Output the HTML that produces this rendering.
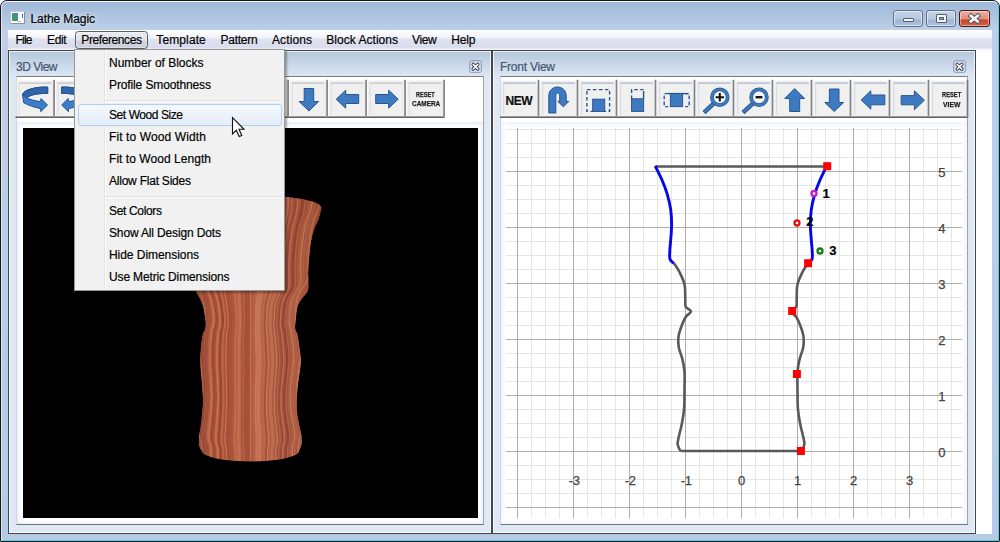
<!DOCTYPE html><html><head><meta charset="utf-8"><title>Lathe Magic</title><style>
*{box-sizing:border-box;margin:0;padding:0}
html,body{width:1000px;height:542px;overflow:hidden;background:#fff;font-family:"Liberation Sans",sans-serif;}
.abs{position:absolute}
.t{position:absolute;white-space:nowrap;line-height:16px;height:16px;-webkit-text-stroke:0.18px currentColor}
#win{position:absolute;left:0;top:0;width:1000px;height:542px;border:1px solid #161616;border-radius:7px 7px 1px 1px;
 background:linear-gradient(180deg,#9db7d7 0px,#abc2de 12px,#bdd0e7 30px,#b9cde6 300px,#b5cbe5 542px);overflow:hidden}
#win:before{content:"";position:absolute;left:0;top:0;right:0;bottom:0;border:1px solid #46d6ee;border-top-color:#f4f8fc;border-left-color:#dfeaf6;border-radius:6px 6px 0 0}
#client{position:absolute;left:8px;top:30px;width:984px;height:504px;background:#fff}
#menubar{position:absolute;left:8px;top:30px;width:984px;height:20px;background:linear-gradient(180deg,#ffffff 0,#fbfbfe 3px,#eff1f8 8px,#e0e3f0 9px,#d8dcec 17px,#e8eaf3 18.5px,#f6f6fa 20px)}
.panel{position:absolute;top:50px;height:484px;border:1px solid #454545;background:#dfe8f5}
.panel:after{content:"";position:absolute;left:0;top:0;right:0;bottom:0;box-shadow:inset 0 0 0 1px rgba(255,255,255,.75)}
.panel .title{position:absolute;left:0;top:0;right:0;height:26px;background:linear-gradient(180deg,#b3c6db 0,#c4d4e6 10px,#dbe6f3 25px)}
.inner{position:absolute;background:#fff;border-top:1px solid #7e7e7e;border-right:1px solid #a4a4a4;border-bottom:1px solid #727272;border-left:1px solid #d0d6e0}
.btn{position:absolute;top:81px;width:38px;height:37px;background:#f0f0f0;border-right:2px solid #6c6c6c;border-bottom:2px solid #6c6c6c;}
.btn:before{content:"";position:absolute;left:2px;top:2px;right:1px;bottom:1px;border-top:1px solid #a9b6cf;border-left:1px solid #a9b6cf;}
.btn svg{position:absolute;left:0;top:0}
.pclose{position:absolute;width:12px;height:12px;border:1px solid #7f8fae;border-radius:2px;background:#e9eef6}
#menu{position:absolute;left:74px;top:49px;width:211px;height:242px;background:#f1f1f1;border:1px solid #979797;box-shadow:2px 2px 2px rgba(0,0,0,0.32)}
#menu .gut{position:absolute;left:29px;top:2px;bottom:2px;width:2px;border-left:1px solid #e2e3e3;border-right:1px solid #fff}
#menu .sep{position:absolute;left:30px;right:2px;height:2px;border-top:1px solid #e0e0e0;border-bottom:1px solid #fff}
#menu .hl{position:absolute;left:3px;top:54px;width:204px;height:22px;border:1px solid #aecff7;border-radius:3px;background:linear-gradient(180deg,#f4f8fc,#e4edf8)}
</style></head><body><div id="win"></div><div class="abs" style="left:10px;top:11px;width:15px;height:13px;background:#fdfdfd;border:1px solid #8d9096;border-top-color:#c8ccd2;border-left-color:#c0c4ca;border-radius:1px"></div><div class="abs" style="left:12px;top:13px;width:6px;height:8px;background:linear-gradient(180deg,#4a8a96,#3a9c68)"></div><div class="abs" style="left:18px;top:21px;width:3px;height:1px;background:#b0b4b8"></div><div class="abs" style="left:22px;top:14px;width:1px;height:4px;background:#2d68c4"></div><span class="t" style="left:30.5px;top:10.84px;font-size:12px;font-weight:400;color:#000;letter-spacing:-0.087px;text-shadow:0 0 5px rgba(255,255,255,.75),0 0 9px rgba(255,255,255,.5)">Lathe Magic</span><div class="abs" style="left:893px;top:10px;width:30px;height:17px;border:1px solid #5e708c;border-radius:3px;background:linear-gradient(180deg,#c5d5e8 0,#b7c9e0 8px,#9db4d2 9px,#b0c6e0 16px);box-shadow:inset 0 0 0 1px rgba(255,255,255,.55)"></div><div class="abs" style="left:903px;top:18px;width:11px;height:4px;background:#f4f4f4;border:1px solid #55606e;border-radius:1px"></div><div class="abs" style="left:926px;top:10px;width:30px;height:17px;border:1px solid #5e708c;border-radius:3px;background:linear-gradient(180deg,#c5d5e8 0,#b7c9e0 8px,#9db4d2 9px,#b0c6e0 16px);box-shadow:inset 0 0 0 1px rgba(255,255,255,.55)"></div><div class="abs" style="left:936px;top:14px;width:11px;height:9px;background:#f4f4f4;border:1px solid #55606e;border-radius:1px"></div><div class="abs" style="left:939px;top:17px;width:5px;height:3px;background:#8ea4c2;border:1px solid #55606e"></div><div class="abs" style="left:959px;top:10px;width:31px;height:17px;border:1px solid #4a1616;border-radius:3px;background:linear-gradient(180deg,#eab0a0 0,#dd8f7c 8px,#c9432a 9px,#d86a4a 16px);box-shadow:inset 0 0 0 1px rgba(255,255,255,.45)"></div><svg class="abs" style="left:959px;top:10px" width="31" height="17"><path d="M11.8 5.8 L18.8 11.4 M18.8 5.8 L11.8 11.4" stroke="#4a5068" stroke-width="4.4" stroke-linecap="square"/><path d="M11.8 5.8 L18.8 11.4 M18.8 5.8 L11.8 11.4" stroke="#fafafa" stroke-width="2.6" stroke-linecap="square"/></svg><div id="client"></div><div id="menubar"></div><div class="abs" style="left:75px;top:31px;width:73px;height:18px;border:1px solid #5c5c60;border-radius:3.5px;background:linear-gradient(180deg,#ebecf2 0,#dfe1ea 8px,#d2d5e1 9px,#cacddb 17px);box-shadow:inset 0 0 0 1px rgba(255,255,255,.35)"></div><span class="t" style="left:15.5px;top:31.84px;font-size:12px;font-weight:400;color:#000;letter-spacing:-0.781px;">File</span><span class="t" style="left:47px;top:31.84px;font-size:12px;font-weight:400;color:#000;letter-spacing:-0.329px;">Edit</span><span class="t" style="left:81.3px;top:31.84px;font-size:12px;font-weight:400;color:#000;letter-spacing:-0.400px;">Preferences</span><span class="t" style="left:156.3px;top:31.84px;font-size:12px;font-weight:400;color:#000;letter-spacing:0.114px;">Template</span><span class="t" style="left:220.6px;top:31.84px;font-size:12px;font-weight:400;color:#000;letter-spacing:-0.284px;">Pattern</span><span class="t" style="left:272px;top:31.84px;font-size:12px;font-weight:400;color:#000;letter-spacing:0.107px;">Actions</span><span class="t" style="left:326.25px;top:31.84px;font-size:12px;font-weight:400;color:#000;letter-spacing:0.031px;">Block Actions</span><span class="t" style="left:412px;top:31.84px;font-size:12px;font-weight:400;color:#000;letter-spacing:-0.349px;">View</span><span class="t" style="left:451.25px;top:31.84px;font-size:12px;font-weight:400;color:#000;letter-spacing:-0.146px;">Help</span><div class="panel" style="left:8px;width:484px"><div class="title"></div></div><span class="t" style="left:16px;top:58.84px;font-size:12px;font-weight:400;color:#44546f;letter-spacing:-0.495px;">3D View</span><div class="panel" style="left:492px;width:484px"><div class="title"></div></div><span class="t" style="left:500px;top:58.84px;font-size:12px;font-weight:400;color:#44546f;letter-spacing:-0.238px;">Front View</span><div class="inner" style="left:16px;top:76px;width:468px;height:449px"></div><div class="inner" style="left:500px;top:76px;width:468px;height:449px"></div><svg class="abs" style="left:468px;top:59px" width="15" height="15" viewBox="-1 -1 15 15"><rect x="0.7" y="0.7" width="11.6" height="11.6" rx="1.6" fill="rgba(255,255,255,.18)" stroke="#8a94b8" stroke-width="1"/><path d="M4.2 4.4 L8.8 9 M8.8 4.4 L4.2 9" stroke="#2e3446" stroke-width="3.4" stroke-linecap="round"/><path d="M4.2 4.4 L8.8 9 M8.8 4.4 L4.2 9" stroke="#fff" stroke-width="1.6" stroke-linecap="round"/></svg><svg class="abs" style="left:952px;top:59px" width="15" height="15" viewBox="-1 -1 15 15"><rect x="0.7" y="0.7" width="11.6" height="11.6" rx="1.6" fill="rgba(255,255,255,.18)" stroke="#8a94b8" stroke-width="1"/><path d="M4.2 4.4 L8.8 9 M8.8 4.4 L4.2 9" stroke="#2e3446" stroke-width="3.4" stroke-linecap="round"/><path d="M4.2 4.4 L8.8 9 M8.8 4.4 L4.2 9" stroke="#fff" stroke-width="1.6" stroke-linecap="round"/></svg><svg class="abs" style="left:15px;top:78px" width="434" height="42" viewBox="15 78 434 42"><rect x="16.7" y="80.6" width="36.4" height="36" fill="#f0f0f0"/><rect x="52.900000000000006" y="79.8" width="1" height="38" fill="#b0b0b0"/><rect x="53.7" y="79.8" width="1.1" height="38" fill="#6a6a6a"/><rect x="18.7" y="82.6" width="32.5" height="1" fill="#b6b6ba"/><rect x="18.7" y="83.4" width="1" height="31" fill="#dedee2"/><g transform="translate(16.7,81)"><path d="M31 6.1 C20 5.6 7 8.5 5.8 13.7 L7 21.8 C12 24.5 18 26.5 24 27.6 L24 30.7 L30.8 24.1 L24.4 17.5 L23.7 20.6 C18 19.8 13 18.5 10.1 16.8 C14 13.5 22 12.2 31 12.5 Z" fill="#3c7ec9" stroke="#28568f" stroke-width="1" stroke-linejoin="round"/><path d="M31 6.1 C20 5.6 7 8.5 5.8 13.7 L10.1 16.8 C14 13.5 22 12.2 31 12.5 Z" fill="#2d66aa" stroke="#28568f" stroke-width="1" stroke-linejoin="round"/></g><rect x="55.7" y="80.6" width="36.4" height="36" fill="#f0f0f0"/><rect x="91.9" y="79.8" width="1" height="38" fill="#b0b0b0"/><rect x="92.7" y="79.8" width="1.1" height="38" fill="#6a6a6a"/><rect x="57.7" y="82.6" width="32.5" height="1" fill="#b6b6ba"/><rect x="57.7" y="83.4" width="1" height="31" fill="#dedee2"/><g transform="translate(55.7,81)"><g transform="translate(36.8,0) scale(-1,1)"><path d="M31 6.1 C20 5.6 7 8.5 5.8 13.7 L7 21.8 C12 24.5 18 26.5 24 27.6 L24 30.7 L30.8 24.1 L24.4 17.5 L23.7 20.6 C18 19.8 13 18.5 10.1 16.8 C14 13.5 22 12.2 31 12.5 Z" fill="#3c7ec9" stroke="#28568f" stroke-width="1" stroke-linejoin="round"/><path d="M31 6.1 C20 5.6 7 8.5 5.8 13.7 L10.1 16.8 C14 13.5 22 12.2 31 12.5 Z" fill="#2d66aa" stroke="#28568f" stroke-width="1" stroke-linejoin="round"/></g></g><rect x="94.7" y="80.6" width="36.4" height="36" fill="#f0f0f0"/><rect x="130.9" y="79.8" width="1" height="38" fill="#b0b0b0"/><rect x="131.7" y="79.8" width="1.1" height="38" fill="#6a6a6a"/><rect x="96.7" y="82.6" width="32.5" height="1" fill="#b6b6ba"/><rect x="96.7" y="83.4" width="1" height="31" fill="#dedee2"/><g transform="translate(94.7,81)"></g><rect x="133.7" y="80.6" width="36.4" height="36" fill="#f0f0f0"/><rect x="169.89999999999998" y="79.8" width="1" height="38" fill="#b0b0b0"/><rect x="170.7" y="79.8" width="1.1" height="38" fill="#6a6a6a"/><rect x="135.7" y="82.6" width="32.5" height="1" fill="#b6b6ba"/><rect x="135.7" y="83.4" width="1" height="31" fill="#dedee2"/><g transform="translate(133.7,81)"></g><rect x="172.7" y="80.6" width="36.4" height="36" fill="#f0f0f0"/><rect x="208.89999999999998" y="79.8" width="1" height="38" fill="#b0b0b0"/><rect x="209.7" y="79.8" width="1.1" height="38" fill="#6a6a6a"/><rect x="174.7" y="82.6" width="32.5" height="1" fill="#b6b6ba"/><rect x="174.7" y="83.4" width="1" height="31" fill="#dedee2"/><g transform="translate(172.7,81)"></g><rect x="211.7" y="80.6" width="36.4" height="36" fill="#f0f0f0"/><rect x="247.89999999999998" y="79.8" width="1" height="38" fill="#b0b0b0"/><rect x="248.7" y="79.8" width="1.1" height="38" fill="#6a6a6a"/><rect x="213.7" y="82.6" width="32.5" height="1" fill="#b6b6ba"/><rect x="213.7" y="83.4" width="1" height="31" fill="#dedee2"/><g transform="translate(211.7,81)"></g><rect x="250.7" y="80.6" width="36.4" height="36" fill="#f0f0f0"/><rect x="286.9" y="79.8" width="1" height="38" fill="#b0b0b0"/><rect x="287.7" y="79.8" width="1.1" height="38" fill="#6a6a6a"/><rect x="252.7" y="82.6" width="32.5" height="1" fill="#b6b6ba"/><rect x="252.7" y="83.4" width="1" height="31" fill="#dedee2"/><g transform="translate(250.7,81)"></g><rect x="289.7" y="80.6" width="36.4" height="36" fill="#f0f0f0"/><rect x="325.9" y="79.8" width="1" height="38" fill="#b0b0b0"/><rect x="326.7" y="79.8" width="1.1" height="38" fill="#6a6a6a"/><rect x="291.7" y="82.6" width="32.5" height="1" fill="#b6b6ba"/><rect x="291.7" y="83.4" width="1" height="31" fill="#dedee2"/><g transform="translate(289.7,81)"><path d="M14.5 7.5 H24 V20.5 H29 L19.2 30 L9.4 20.5 H14.5 Z" fill="#3d7ac1" stroke="#28568f" stroke-width="1" stroke-linejoin="miter"/></g><rect x="328.7" y="80.6" width="36.4" height="36" fill="#f0f0f0"/><rect x="364.9" y="79.8" width="1" height="38" fill="#b0b0b0"/><rect x="365.7" y="79.8" width="1.1" height="38" fill="#6a6a6a"/><rect x="330.7" y="82.6" width="32.5" height="1" fill="#b6b6ba"/><rect x="330.7" y="83.4" width="1" height="31" fill="#dedee2"/><g transform="translate(328.7,81)"><path d="M30 13.5 V22.5 H17 V27.2 L7.5 18.2 L17 9.2 V13.5 Z" fill="#3d7ac1" stroke="#28568f" stroke-width="1" stroke-linejoin="miter"/></g><rect x="367.7" y="80.6" width="36.4" height="36" fill="#f0f0f0"/><rect x="403.9" y="79.8" width="1" height="38" fill="#b0b0b0"/><rect x="404.7" y="79.8" width="1.1" height="38" fill="#6a6a6a"/><rect x="369.7" y="82.6" width="32.5" height="1" fill="#b6b6ba"/><rect x="369.7" y="83.4" width="1" height="31" fill="#dedee2"/><g transform="translate(367.7,81)"><path d="M8 13.5 V22.5 H21 V27.2 L30.5 18.2 L21 9.2 V13.5 Z" fill="#3d7ac1" stroke="#28568f" stroke-width="1" stroke-linejoin="miter"/></g><rect x="406.7" y="80.6" width="36.4" height="36" fill="#f0f0f0"/><rect x="442.9" y="79.8" width="1" height="38" fill="#b0b0b0"/><rect x="443.7" y="79.8" width="1.1" height="38" fill="#6a6a6a"/><rect x="408.7" y="82.6" width="32.5" height="1" fill="#b6b6ba"/><rect x="408.7" y="83.4" width="1" height="31" fill="#dedee2"/><g transform="translate(406.7,81)"></g><rect x="15.5" y="116" width="428.4" height="1" fill="#a4a4a4"/><rect x="15.5" y="116.9" width="428.4" height="1.1" fill="#626262"/></svg><span class="t" style="left:416.3px;top:86.97px;font-size:7.6px;font-weight:700;color:#1c1c1c;transform:scaleX(0.7344);transform-origin:0 0;-webkit-text-stroke:0.25px #1c1c1c">RESET</span><span class="t" style="left:411.7px;top:96.37px;font-size:7.6px;font-weight:700;color:#1c1c1c;transform:scaleX(0.8461);transform-origin:0 0;-webkit-text-stroke:0.25px #1c1c1c">CAMERA</span><svg class="abs" style="left:500px;top:78px" width="472" height="42" viewBox="500 78 472 42"><rect x="501.2" y="80.6" width="36.4" height="36" fill="#f0f0f0"/><rect x="537.4" y="79.8" width="1" height="38" fill="#b0b0b0"/><rect x="538.2" y="79.8" width="1.1" height="38" fill="#6a6a6a"/><rect x="503.2" y="82.6" width="32.5" height="1" fill="#9ba7c7"/><rect x="503.2" y="83.4" width="1" height="31" fill="#d4d8e4"/><g transform="translate(501.2,81)"></g><rect x="540.2" y="80.6" width="36.4" height="36" fill="#f0f0f0"/><rect x="576.4000000000001" y="79.8" width="1" height="38" fill="#b0b0b0"/><rect x="577.2" y="79.8" width="1.1" height="38" fill="#6a6a6a"/><rect x="542.2" y="82.6" width="32.5" height="1" fill="#9ba7c7"/><rect x="542.2" y="83.4" width="1" height="31" fill="#d4d8e4"/><g transform="translate(540.2,81)"><path d="M8.6 32 V15 C8.6 3 26 3 26 15 V20.4 H28.6 L23.2 25.8 L17.6 20.4 H19.5 V15 C19.5 11 15.6 11 15.6 15 V32 Z" fill="#3d7ac1" stroke="#28568f" stroke-width="1" stroke-linejoin="miter"/></g><rect x="579.2" y="80.6" width="36.4" height="36" fill="#f0f0f0"/><rect x="615.4000000000001" y="79.8" width="1" height="38" fill="#b0b0b0"/><rect x="616.2" y="79.8" width="1.1" height="38" fill="#6a6a6a"/><rect x="581.2" y="82.6" width="32.5" height="1" fill="#9ba7c7"/><rect x="581.2" y="83.4" width="1" height="31" fill="#d4d8e4"/><g transform="translate(579.2,81)"><path d="M7.7 8.6 H30.4 V30.4 H7.7 Z" fill="none" stroke="#28568f" stroke-width="1.4" stroke-dasharray="3.6 2.4"/><rect x="13.5" y="18.2" width="12" height="12.2" fill="#3d7ac1" stroke="#28568f"/></g><rect x="618.2" y="80.6" width="36.4" height="36" fill="#f0f0f0"/><rect x="654.4000000000001" y="79.8" width="1" height="38" fill="#b0b0b0"/><rect x="655.2" y="79.8" width="1.1" height="38" fill="#6a6a6a"/><rect x="620.2" y="82.6" width="32.5" height="1" fill="#9ba7c7"/><rect x="620.2" y="83.4" width="1" height="31" fill="#d4d8e4"/><g transform="translate(618.2,81)"><path d="M13.4 18 V8.6 H25.4" fill="none" stroke="#28568f" stroke-width="1.4" stroke-dasharray="3.6 2.4"/><path d="M25.4 10 V18" fill="none" stroke="#28568f" stroke-width="1.4"/><rect x="13.4" y="17.8" width="12" height="12.6" fill="#3d7ac1" stroke="#28568f"/></g><rect x="657.2" y="80.6" width="36.4" height="36" fill="#f0f0f0"/><rect x="693.4000000000001" y="79.8" width="1" height="38" fill="#b0b0b0"/><rect x="694.2" y="79.8" width="1.1" height="38" fill="#6a6a6a"/><rect x="659.2" y="82.6" width="32.5" height="1" fill="#9ba7c7"/><rect x="659.2" y="83.4" width="1" height="31" fill="#d4d8e4"/><g transform="translate(657.2,81)"><path d="M11 12.6 H7 V25.6 H11 M28 12.6 H32 V25.6 H28" fill="none" stroke="#28568f" stroke-width="1.4" stroke-dasharray="3.6 2.4"/><path d="M10.8 12.6 H30.6" fill="none" stroke="#28568f" stroke-width="1.4"/><rect x="13.2" y="12.6" width="12.2" height="13" fill="#3d7ac1" stroke="#28568f"/></g><rect x="696.2" y="80.6" width="36.4" height="36" fill="#f0f0f0"/><rect x="732.4000000000001" y="79.8" width="1" height="38" fill="#b0b0b0"/><rect x="733.2" y="79.8" width="1.1" height="38" fill="#6a6a6a"/><rect x="698.2" y="82.6" width="32.5" height="1" fill="#9ba7c7"/><rect x="698.2" y="83.4" width="1" height="31" fill="#d4d8e4"/><g transform="translate(696.2,81)"><path d="M18.400000000000002 21.6 L7.8 31.6" stroke="#28568f" stroke-width="4.4"/><path d="M18.400000000000002 21.6 L8.3 31.1" stroke="#3d7ac1" stroke-width="2.6"/><circle cx="23.6" cy="16.2" r="7.85" fill="#f3f5f9" stroke="#28568f" stroke-width="3.8"/><circle cx="23.6" cy="16.2" r="7.85" fill="none" stroke="#3d7ac1" stroke-width="2.4"/><path d="M19.400000000000002 16.2 H27.8 M23.6 12.0 V20.4" stroke="#111" stroke-width="2"/></g><rect x="735.2" y="80.6" width="36.4" height="36" fill="#f0f0f0"/><rect x="771.4000000000001" y="79.8" width="1" height="38" fill="#b0b0b0"/><rect x="772.2" y="79.8" width="1.1" height="38" fill="#6a6a6a"/><rect x="737.2" y="82.6" width="32.5" height="1" fill="#9ba7c7"/><rect x="737.2" y="83.4" width="1" height="31" fill="#d4d8e4"/><g transform="translate(735.2,81)"><path d="M18.6 21.6 L7.8 31.6" stroke="#28568f" stroke-width="4.4"/><path d="M18.6 21.6 L8.3 31.1" stroke="#3d7ac1" stroke-width="2.6"/><circle cx="23.8" cy="16.2" r="7.85" fill="#f3f5f9" stroke="#28568f" stroke-width="3.8"/><circle cx="23.8" cy="16.2" r="7.85" fill="none" stroke="#3d7ac1" stroke-width="2.4"/><path d="M20.400000000000002 16.2 H27.2" stroke="#111" stroke-width="2.4"/></g><rect x="774.2" y="80.6" width="36.4" height="36" fill="#f0f0f0"/><rect x="810.4000000000001" y="79.8" width="1" height="38" fill="#b0b0b0"/><rect x="811.2" y="79.8" width="1.1" height="38" fill="#6a6a6a"/><rect x="776.2" y="82.6" width="32.5" height="1" fill="#9ba7c7"/><rect x="776.2" y="83.4" width="1" height="31" fill="#d4d8e4"/><g transform="translate(774.2,81)"><path d="M15.5 30.5 V17.5 H10.6 L20.5 7.6 L30.4 17.5 H25.5 V30.5 Z" fill="#3d7ac1" stroke="#28568f" stroke-width="1" stroke-linejoin="miter"/></g><rect x="813.2" y="80.6" width="36.4" height="36" fill="#f0f0f0"/><rect x="849.4000000000001" y="79.8" width="1" height="38" fill="#b0b0b0"/><rect x="850.2" y="79.8" width="1.1" height="38" fill="#6a6a6a"/><rect x="815.2" y="82.6" width="32.5" height="1" fill="#9ba7c7"/><rect x="815.2" y="83.4" width="1" height="31" fill="#d4d8e4"/><g transform="translate(813.2,81)"><path d="M16.2 8 H25.8 V21.5 H30.4 L21 30.5 L11.6 21.5 H16.2 Z" fill="#3d7ac1" stroke="#28568f" stroke-width="1" stroke-linejoin="miter"/></g><rect x="852.2" y="80.6" width="36.4" height="36" fill="#f0f0f0"/><rect x="888.4000000000001" y="79.8" width="1" height="38" fill="#b0b0b0"/><rect x="889.2" y="79.8" width="1.1" height="38" fill="#6a6a6a"/><rect x="854.2" y="82.6" width="32.5" height="1" fill="#9ba7c7"/><rect x="854.2" y="83.4" width="1" height="31" fill="#d4d8e4"/><g transform="translate(852.2,81)"><path d="M32.6 14 V23.8 H18.6 V28.2 L9 19 L18.6 9.8 V14 Z" fill="#3d7ac1" stroke="#28568f" stroke-width="1" stroke-linejoin="miter"/></g><rect x="891.2" y="80.6" width="36.4" height="36" fill="#f0f0f0"/><rect x="927.4000000000001" y="79.8" width="1" height="38" fill="#b0b0b0"/><rect x="928.2" y="79.8" width="1.1" height="38" fill="#6a6a6a"/><rect x="893.2" y="82.6" width="32.5" height="1" fill="#9ba7c7"/><rect x="893.2" y="83.4" width="1" height="31" fill="#d4d8e4"/><g transform="translate(891.2,81)"><path d="M10 14.6 V23.8 H23.2 V28.8 L33.2 19.2 L23.2 9.8 V14.6 Z" fill="#3d7ac1" stroke="#28568f" stroke-width="1" stroke-linejoin="miter"/></g><rect x="930.2" y="80.6" width="36.4" height="36" fill="#f0f0f0"/><rect x="966.4000000000001" y="79.8" width="1" height="38" fill="#b0b0b0"/><rect x="967.2" y="79.8" width="1.1" height="38" fill="#6a6a6a"/><rect x="932.2" y="82.6" width="32.5" height="1" fill="#9ba7c7"/><rect x="932.2" y="83.4" width="1" height="31" fill="#d4d8e4"/><g transform="translate(930.2,81)"></g><rect x="500.0" y="116" width="467.4" height="1" fill="#a4a4a4"/><rect x="500.0" y="116.9" width="467.4" height="1.1" fill="#626262"/></svg><span class="t" style="left:505.5px;top:92.84px;font-size:12px;font-weight:700;color:#111;letter-spacing:-0.500px;">NEW</span><span class="t" style="left:941.8px;top:87.37px;font-size:7.6px;font-weight:700;color:#1c1c1c;transform:scaleX(0.7581);transform-origin:0 0;-webkit-text-stroke:0.25px #1c1c1c">RESET</span><span class="t" style="left:943px;top:96.87px;font-size:7.6px;font-weight:700;color:#1c1c1c;transform:scaleX(0.8907);transform-origin:0 0;-webkit-text-stroke:0.25px #1c1c1c">VIEW</span><div class="abs" style="left:17px;top:122px;width:466px;height:402px;background:#fff;box-shadow:inset 0 0 5px 1px #e6edf8, inset 0 2px 3px #e9eff9"></div><div class="abs" style="left:23px;top:128px;width:455px;height:390px;background:#000"></div><svg class="abs" style="left:23px;top:128px" width="455" height="390" viewBox="23 128 455 390"><defs><clipPath id="vc"><path d="M179.5 208 A71.1 13 0 0 1 321.7 208 L321.7 208.0 C321.3 209.7 320.3 214.9 319.1 218.4 C317.9 221.9 315.7 224.9 314.4 228.8 C313.1 232.7 312.1 237.0 311.3 241.7 C310.5 246.4 309.8 252.0 309.3 257.2 C308.8 262.4 308.3 268.0 308.2 272.7 C308.1 277.4 308.9 282.4 308.8 285.6 C308.7 288.8 308.6 289.9 307.5 292.0 C306.4 294.1 303.9 296.1 302.3 298.5 C300.7 300.9 298.9 303.2 297.9 306.3 C296.9 309.4 296.6 313.4 296.2 317.0 C295.8 320.6 295.0 325.0 295.2 328.0 C295.4 331.0 296.8 331.4 297.6 335.0 C298.4 338.6 299.2 345.1 299.8 349.8 C300.4 354.6 301.1 358.9 301.0 363.5 C300.9 368.1 300.0 372.1 299.3 377.2 C298.6 382.3 297.4 388.5 297.0 394.2 C296.6 399.9 296.6 406.2 297.0 411.3 C297.4 416.4 298.5 420.7 299.3 425.0 C300.1 429.3 301.2 433.7 301.7 436.9 C302.1 440.1 302.4 441.6 302.0 444.0 C301.6 446.4 299.5 449.8 299.0 451.0 A48.5 10.5 0 0 1 202 451 L202.0 451.0 C201.6 450.3 199.9 449.1 199.3 447.0 C198.8 444.9 198.5 441.7 198.7 438.6 C198.9 435.5 199.8 432.3 200.4 428.3 C201.0 424.3 201.6 419.2 202.0 414.7 C202.4 410.1 203.0 406.1 203.0 401.0 C203.0 395.9 202.4 389.7 202.0 384.0 C201.6 378.3 200.6 372.6 200.4 366.9 C200.2 361.2 200.4 355.3 200.8 350.0 C201.2 344.7 201.8 338.7 202.6 335.0 C203.4 331.3 205.0 331.0 205.4 328.0 C205.8 325.0 205.6 321.0 205.0 317.0 C204.4 313.0 203.5 308.0 202.0 303.8 C200.5 299.6 197.5 294.8 195.9 291.8 C194.3 288.8 192.9 288.8 192.4 285.6 C191.9 282.4 193.1 277.4 193.0 272.7 C192.9 268.0 192.4 262.4 191.9 257.2 C191.4 252.0 190.8 246.4 189.9 241.7 C189.1 237.0 188.1 232.7 186.8 228.8 C185.5 224.9 183.3 221.9 182.1 218.4 C180.9 214.9 179.9 209.7 179.5 208.0 Z"/></clipPath><linearGradient id="vg" x1="0" x2="1" y1="0" y2="0"><stop offset="0" stop-color="#000" stop-opacity=".42"/><stop offset=".1" stop-color="#000" stop-opacity=".14"/><stop offset=".3" stop-color="#000" stop-opacity="0"/><stop offset=".6" stop-color="#fff" stop-opacity=".05"/><stop offset=".9" stop-color="#000" stop-opacity=".08"/><stop offset="1" stop-color="#000" stop-opacity=".34"/></linearGradient><filter id="vb" x="-5%" y="-5%" width="110%" height="110%"><feGaussianBlur stdDeviation="0.35 0.6"/></filter></defs><g clip-path="url(#vc)"><path d="M179.5 208 A71.1 13 0 0 1 321.7 208 L321.7 208.0 C321.3 209.7 320.3 214.9 319.1 218.4 C317.9 221.9 315.7 224.9 314.4 228.8 C313.1 232.7 312.1 237.0 311.3 241.7 C310.5 246.4 309.8 252.0 309.3 257.2 C308.8 262.4 308.3 268.0 308.2 272.7 C308.1 277.4 308.9 282.4 308.8 285.6 C308.7 288.8 308.6 289.9 307.5 292.0 C306.4 294.1 303.9 296.1 302.3 298.5 C300.7 300.9 298.9 303.2 297.9 306.3 C296.9 309.4 296.6 313.4 296.2 317.0 C295.8 320.6 295.0 325.0 295.2 328.0 C295.4 331.0 296.8 331.4 297.6 335.0 C298.4 338.6 299.2 345.1 299.8 349.8 C300.4 354.6 301.1 358.9 301.0 363.5 C300.9 368.1 300.0 372.1 299.3 377.2 C298.6 382.3 297.4 388.5 297.0 394.2 C296.6 399.9 296.6 406.2 297.0 411.3 C297.4 416.4 298.5 420.7 299.3 425.0 C300.1 429.3 301.2 433.7 301.7 436.9 C302.1 440.1 302.4 441.6 302.0 444.0 C301.6 446.4 299.5 449.8 299.0 451.0 A48.5 10.5 0 0 1 202 451 L202.0 451.0 C201.6 450.3 199.9 449.1 199.3 447.0 C198.8 444.9 198.5 441.7 198.7 438.6 C198.9 435.5 199.8 432.3 200.4 428.3 C201.0 424.3 201.6 419.2 202.0 414.7 C202.4 410.1 203.0 406.1 203.0 401.0 C203.0 395.9 202.4 389.7 202.0 384.0 C201.6 378.3 200.6 372.6 200.4 366.9 C200.2 361.2 200.4 355.3 200.8 350.0 C201.2 344.7 201.8 338.7 202.6 335.0 C203.4 331.3 205.0 331.0 205.4 328.0 C205.8 325.0 205.6 321.0 205.0 317.0 C204.4 313.0 203.5 308.0 202.0 303.8 C200.5 299.6 197.5 294.8 195.9 291.8 C194.3 288.8 192.9 288.8 192.4 285.6 C191.9 282.4 193.1 277.4 193.0 272.7 C192.9 268.0 192.4 262.4 191.9 257.2 C191.4 252.0 190.8 246.4 189.9 241.7 C189.1 237.0 188.1 232.7 186.8 228.8 C185.5 224.9 183.3 221.9 182.1 218.4 C180.9 214.9 179.9 209.7 179.5 208.0 Z" fill="#b3573b"/><g filter="url(#vb)"><path d="M179.5 179.2 C179.5 180.0 179.5 182.5 179.5 184.2 C179.5 185.9 179.5 187.5 179.5 189.2 C179.5 190.9 179.4 192.5 179.5 194.2 C179.6 195.9 179.7 197.5 180.0 199.2 C180.3 200.9 180.8 202.5 181.3 204.2 C181.7 205.9 182.2 207.5 182.8 209.2 C183.5 210.9 184.4 212.5 185.1 214.2 C185.8 215.9 186.6 217.5 187.1 219.2 C187.6 220.9 187.9 222.5 188.3 224.2 C188.7 225.9 189.2 227.5 189.5 229.2 C189.8 230.9 190.1 232.5 190.3 234.2 C190.6 235.9 190.8 237.5 191.0 239.2 C191.2 240.9 191.4 242.5 191.6 244.2 C191.8 245.9 192.0 247.5 192.1 249.2 C192.2 250.9 192.3 252.5 192.5 254.2 C192.6 255.9 192.7 257.5 192.8 259.2 C192.9 260.9 192.9 262.5 192.9 264.2 C192.9 265.9 192.7 267.5 192.7 269.2 C192.6 270.9 192.1 272.5 192.4 274.2 C192.8 275.9 194.0 277.5 194.9 279.2 C195.7 280.9 196.7 282.5 197.5 284.2 C198.4 285.9 199.3 287.5 200.1 289.2 C200.9 290.9 201.7 292.5 202.3 294.2 C202.8 295.9 203.0 297.5 203.4 299.2 C203.8 300.9 204.3 302.5 204.6 304.2 C204.8 305.9 205.0 307.5 205.1 309.2 C205.2 310.9 205.4 312.5 205.3 314.2 C205.2 315.9 205.1 317.5 204.6 319.2 C204.2 320.9 203.0 322.5 202.6 324.2 C202.2 325.9 202.2 327.5 202.0 329.2 C201.8 330.9 201.6 332.5 201.4 334.2 C201.2 335.9 200.9 337.5 200.8 339.2 C200.7 340.9 200.7 342.5 200.7 344.2 C200.6 345.9 200.6 347.5 200.6 349.2 C200.5 350.9 200.4 352.5 200.5 354.2 C200.5 355.9 200.6 357.5 200.7 359.2 C200.8 360.9 201.0 362.5 201.2 364.2 C201.3 365.9 201.5 367.5 201.6 369.2 C201.8 370.9 201.9 372.5 202.1 374.2 C202.2 375.9 202.3 377.5 202.4 379.2 C202.5 380.9 202.6 382.5 202.7 384.2 C202.8 385.9 202.9 387.5 202.9 389.2 C203.0 390.9 202.8 392.5 202.7 394.2 C202.6 395.9 202.5 397.5 202.4 399.2 C202.2 400.9 202.1 402.5 202.0 404.2 C201.8 405.9 201.6 407.5 201.4 409.2 C201.2 410.9 201.0 412.5 200.8 414.2 C200.6 415.9 200.4 417.5 200.1 419.2 C199.9 420.9 199.5 422.5 199.3 424.2 C199.1 425.9 198.8 427.5 198.8 429.2 C198.8 430.9 198.7 432.5 199.2 434.2 C199.6 435.9 200.9 437.5 201.3 439.2 C201.8 440.9 201.9 442.5 202.0 444.2 C202.1 445.9 202.0 447.5 202.0 449.2 C202.0 450.9 202.0 452.5 202.0 454.2 C202.0 455.9 202.0 458.4 202.0 459.2" stroke="#cd8866" stroke-width="1.8" fill="none" opacity="0.9"/><path d="M179.6 179.6 C179.6 180.5 179.6 183.0 179.6 184.6 C179.6 186.3 179.6 188.0 179.6 189.6 C179.6 191.3 179.5 193.0 179.6 194.6 C179.7 196.3 179.8 198.0 180.1 199.6 C180.4 201.3 180.9 203.0 181.4 204.6 C181.8 206.3 182.3 208.0 182.9 209.6 C183.6 211.3 184.5 213.0 185.2 214.6 C185.9 216.3 186.7 218.0 187.2 219.6 C187.7 221.3 188.0 223.0 188.4 224.6 C188.8 226.3 189.2 228.0 189.6 229.6 C189.9 231.3 190.2 233.0 190.4 234.6 C190.7 236.3 190.9 238.0 191.1 239.6 C191.3 241.3 191.5 243.0 191.7 244.6 C191.9 246.3 192.1 248.0 192.2 249.6 C192.3 251.3 192.4 253.0 192.5 254.6 C192.7 256.3 192.8 258.0 192.9 259.6 C193.0 261.3 193.0 263.0 193.0 264.6 C193.0 266.3 192.8 268.0 192.8 269.6 C192.7 271.3 192.1 273.0 192.5 274.6 C192.9 276.3 194.1 278.0 195.0 279.6 C195.8 281.3 196.7 283.0 197.6 284.6 C198.5 286.3 199.4 288.0 200.1 289.6 C200.9 291.3 201.8 293.0 202.3 294.6 C202.9 296.3 203.1 298.0 203.5 299.6 C203.9 301.3 204.3 303.0 204.6 304.6 C204.9 306.3 205.1 308.0 205.2 309.6 C205.3 311.3 205.4 313.0 205.4 314.6 C205.3 316.3 205.1 318.0 204.7 319.6 C204.2 321.3 203.1 323.0 202.7 324.6 C202.2 326.3 202.3 328.0 202.1 329.6 C201.9 331.3 201.7 333.0 201.5 334.6 C201.3 336.3 201.0 338.0 200.9 339.6 C200.8 341.3 200.8 343.0 200.8 344.6 C200.7 346.3 200.7 348.0 200.6 349.6 C200.6 351.3 200.5 353.0 200.5 354.6 C200.5 356.3 200.7 358.0 200.8 359.6 C200.9 361.3 201.1 363.0 201.2 364.6 C201.4 366.3 201.6 368.0 201.7 369.6 C201.9 371.3 202.0 373.0 202.1 374.6 C202.3 376.3 202.3 378.0 202.4 379.6 C202.5 381.3 202.6 383.0 202.7 384.6 C202.8 386.3 203.0 388.0 203.0 389.6 C203.0 391.3 202.9 393.0 202.8 394.6 C202.7 396.3 202.5 398.0 202.4 399.6 C202.3 401.3 202.2 403.0 202.0 404.6 C201.9 406.3 201.6 408.0 201.5 409.6 C201.3 411.3 201.1 413.0 200.9 414.6 C200.7 416.3 200.4 418.0 200.2 419.6 C200.0 421.3 199.6 423.0 199.4 424.6 C199.2 426.3 198.9 428.0 198.9 429.6 C198.9 431.3 198.8 433.0 199.2 434.6 C199.7 436.3 200.9 438.0 201.4 439.6 C201.9 441.3 202.0 443.0 202.1 444.6 C202.2 446.3 202.1 448.0 202.1 449.6 C202.1 451.3 202.1 453.0 202.1 454.6 C202.1 456.3 202.1 458.8 202.1 459.6" stroke="#9b4734" stroke-width="1.0" fill="none" opacity="0.6"/><path d="M179.9 180.1 C179.9 180.9 179.9 183.4 179.9 185.1 C179.9 186.8 179.9 188.4 179.9 190.1 C179.9 191.8 179.8 193.4 179.9 195.1 C179.9 196.8 180.1 198.4 180.4 200.1 C180.6 201.8 181.1 203.4 181.6 205.1 C182.1 206.8 182.5 208.4 183.2 210.1 C183.8 211.8 184.7 213.4 185.4 215.1 C186.1 216.8 186.9 218.4 187.4 220.1 C187.9 221.8 188.2 223.4 188.6 225.1 C189.0 226.8 189.5 228.4 189.8 230.1 C190.1 231.8 190.4 233.4 190.6 235.1 C190.9 236.8 191.1 238.4 191.3 240.1 C191.5 241.8 191.7 243.4 191.9 245.1 C192.1 246.8 192.3 248.4 192.4 250.1 C192.5 251.8 192.6 253.4 192.7 255.1 C192.9 256.8 193.0 258.4 193.1 260.1 C193.2 261.8 193.2 263.4 193.2 265.1 C193.2 266.8 193.0 268.4 193.0 270.1 C192.9 271.8 192.4 273.4 192.7 275.1 C193.1 276.8 194.3 278.4 195.2 280.1 C196.0 281.8 196.9 283.4 197.8 285.1 C198.7 286.8 199.5 288.4 200.3 290.1 C201.1 291.8 202.0 293.4 202.5 295.1 C203.1 296.8 203.3 298.4 203.6 300.1 C204.0 301.8 204.5 303.4 204.8 305.1 C205.1 306.8 205.2 308.4 205.3 310.1 C205.5 311.8 205.6 313.4 205.5 315.1 C205.4 316.8 205.3 318.4 204.8 320.1 C204.4 321.8 203.3 323.4 202.8 325.1 C202.4 326.8 202.4 328.4 202.2 330.1 C202.0 331.8 201.8 333.4 201.6 335.1 C201.4 336.8 201.2 338.4 201.1 340.1 C200.9 341.8 201.0 343.4 200.9 345.1 C200.9 346.8 200.9 348.4 200.8 350.1 C200.8 351.8 200.7 353.4 200.7 355.1 C200.7 356.8 200.8 358.4 200.9 360.1 C201.1 361.8 201.3 363.4 201.4 365.1 C201.6 366.8 201.7 368.4 201.9 370.1 C202.0 371.8 202.2 373.4 202.3 375.1 C202.4 376.8 202.5 378.4 202.6 380.1 C202.7 381.8 202.8 383.4 202.9 385.1 C203.0 386.8 203.2 388.4 203.2 390.1 C203.2 391.8 203.0 393.4 202.9 395.1 C202.8 396.8 202.7 398.4 202.6 400.1 C202.5 401.8 202.4 403.4 202.2 405.1 C202.0 406.8 201.8 408.4 201.6 410.1 C201.4 411.8 201.2 413.4 201.0 415.1 C200.8 416.8 200.6 418.4 200.4 420.1 C200.1 421.8 199.8 423.4 199.6 425.1 C199.3 426.8 199.1 428.4 199.1 430.1 C199.0 431.8 199.0 433.4 199.4 435.1 C199.8 436.8 201.1 438.4 201.6 440.1 C202.0 441.8 202.1 443.4 202.2 445.1 C202.4 446.8 202.2 448.4 202.2 450.1 C202.2 451.8 202.2 453.4 202.2 455.1 C202.2 456.8 202.2 459.3 202.2 460.1" stroke="#b15a3e" stroke-width="2.4" fill="none" opacity="0.6"/><path d="M180.0 180.3 C180.0 181.2 180.0 183.7 180.0 185.3 C180.0 187.0 180.0 188.7 180.0 190.3 C180.0 192.0 179.9 193.7 180.0 195.3 C180.1 197.0 180.2 198.7 180.5 200.3 C180.8 202.0 181.3 203.7 181.8 205.3 C182.2 207.0 182.7 208.7 183.3 210.3 C184.0 212.0 184.9 213.7 185.6 215.3 C186.3 217.0 187.0 218.7 187.6 220.3 C188.1 222.0 188.3 223.7 188.7 225.3 C189.1 227.0 189.6 228.7 189.9 230.3 C190.3 232.0 190.5 233.7 190.8 235.3 C191.0 237.0 191.2 238.7 191.4 240.3 C191.6 242.0 191.9 243.7 192.0 245.3 C192.2 247.0 192.4 248.7 192.5 250.3 C192.7 252.0 192.8 253.7 192.9 255.3 C193.0 257.0 193.2 258.7 193.2 260.3 C193.3 262.0 193.3 263.7 193.3 265.3 C193.3 267.0 193.2 268.7 193.1 270.3 C193.0 272.0 192.5 273.7 192.9 275.3 C193.2 277.0 194.5 278.7 195.3 280.3 C196.1 282.0 197.1 283.7 197.9 285.3 C198.8 287.0 199.7 288.7 200.4 290.3 C201.2 292.0 202.1 293.7 202.6 295.3 C203.2 297.0 203.4 298.7 203.8 300.3 C204.1 302.0 204.6 303.7 204.9 305.3 C205.2 307.0 205.3 308.7 205.4 310.3 C205.6 312.0 205.7 313.7 205.6 315.3 C205.5 317.0 205.4 318.7 204.9 320.3 C204.5 322.0 203.4 323.7 202.9 325.3 C202.5 327.0 202.6 328.7 202.4 330.3 C202.2 332.0 202.0 333.7 201.8 335.3 C201.6 337.0 201.3 338.7 201.2 340.3 C201.0 342.0 201.1 343.7 201.0 345.3 C201.0 347.0 201.0 348.7 200.9 350.3 C200.9 352.0 200.8 353.7 200.8 355.3 C200.8 357.0 200.9 358.7 201.1 360.3 C201.2 362.0 201.4 363.7 201.5 365.3 C201.7 367.0 201.8 368.7 202.0 370.3 C202.1 372.0 202.3 373.7 202.4 375.3 C202.5 377.0 202.6 378.7 202.7 380.3 C202.8 382.0 202.9 383.7 203.0 385.3 C203.1 387.0 203.3 388.7 203.3 390.3 C203.3 392.0 203.2 393.7 203.1 395.3 C203.0 397.0 202.8 398.7 202.7 400.3 C202.6 402.0 202.5 403.7 202.3 405.3 C202.2 407.0 201.9 408.7 201.7 410.3 C201.5 412.0 201.4 413.7 201.1 415.3 C200.9 417.0 200.7 418.7 200.5 420.3 C200.2 422.0 199.9 423.7 199.7 425.3 C199.4 427.0 199.2 428.7 199.2 430.3 C199.2 432.0 199.1 433.7 199.5 435.3 C200.0 437.0 201.2 438.7 201.7 440.3 C202.2 442.0 202.2 443.7 202.4 445.3 C202.5 447.0 202.4 448.7 202.4 450.3 C202.4 452.0 202.4 453.7 202.4 455.3 C202.4 457.0 202.4 459.5 202.4 460.3" stroke="#be6647" stroke-width="1.0" fill="none" opacity="0.45"/><path d="M180.5 180.9 C180.5 181.7 180.5 184.2 180.5 185.9 C180.5 187.5 180.5 189.2 180.5 190.9 C180.5 192.5 180.4 194.2 180.5 195.9 C180.6 197.5 180.7 199.2 181.0 200.9 C181.3 202.5 181.8 204.2 182.2 205.9 C182.7 207.5 183.2 209.2 183.8 210.9 C184.4 212.5 185.3 214.2 186.0 215.9 C186.7 217.5 187.5 219.2 188.0 220.9 C188.5 222.5 188.8 224.2 189.2 225.9 C189.6 227.5 190.0 229.2 190.4 230.9 C190.7 232.5 190.9 234.2 191.2 235.9 C191.4 237.5 191.6 239.2 191.8 240.9 C192.0 242.5 192.3 244.2 192.5 245.9 C192.6 247.5 192.8 249.2 192.9 250.9 C193.1 252.5 193.2 254.2 193.3 255.9 C193.4 257.5 193.6 259.2 193.6 260.9 C193.7 262.5 193.7 264.2 193.7 265.9 C193.7 267.5 193.6 269.2 193.5 270.9 C193.4 272.5 192.9 274.2 193.3 275.9 C193.6 277.5 194.9 279.2 195.7 280.9 C196.5 282.5 197.4 284.2 198.3 285.9 C199.1 287.5 200.0 289.2 200.8 290.9 C201.6 292.5 202.4 294.2 203.0 295.9 C203.5 297.5 203.7 299.2 204.1 300.9 C204.5 302.5 204.9 304.2 205.2 305.9 C205.5 307.5 205.6 309.2 205.8 310.9 C205.9 312.5 206.0 314.2 205.9 315.9 C205.9 317.5 205.7 319.2 205.3 320.9 C204.8 322.5 203.7 324.2 203.3 325.9 C202.9 327.5 202.9 329.2 202.7 330.9 C202.5 332.5 202.3 334.2 202.1 335.9 C201.9 337.5 201.6 339.2 201.5 340.9 C201.4 342.5 201.4 344.2 201.4 345.9 C201.4 347.5 201.3 349.2 201.3 350.9 C201.2 352.5 201.1 354.2 201.2 355.9 C201.2 357.5 201.3 359.2 201.4 360.9 C201.5 362.5 201.7 364.2 201.9 365.9 C202.0 367.5 202.2 369.2 202.3 370.9 C202.5 372.5 202.6 374.2 202.7 375.9 C202.9 377.5 202.9 379.2 203.0 380.9 C203.1 382.5 203.2 384.2 203.3 385.9 C203.4 387.5 203.6 389.2 203.6 390.9 C203.6 392.5 203.5 394.2 203.4 395.9 C203.3 397.5 203.1 399.2 203.0 400.9 C202.9 402.5 202.8 404.2 202.6 405.9 C202.5 407.5 202.3 409.2 202.1 410.9 C201.9 412.5 201.7 414.2 201.5 415.9 C201.3 417.5 201.1 419.2 200.8 420.9 C200.6 422.5 200.2 424.2 200.0 425.9 C199.8 427.5 199.6 429.2 199.5 430.9 C199.5 432.5 199.5 434.2 199.9 435.9 C200.3 437.5 201.6 439.2 202.0 440.9 C202.5 442.5 202.6 444.2 202.7 445.9 C202.8 447.5 202.7 449.2 202.7 450.9 C202.7 452.5 202.7 454.2 202.7 455.9 C202.7 457.5 202.7 460.0 202.7 460.9" stroke="#c67452" stroke-width="2.4" fill="none" opacity="0.9"/><path d="M181.2 181.4 C181.2 182.2 181.2 184.7 181.2 186.4 C181.2 188.0 181.2 189.7 181.2 191.4 C181.2 193.0 181.1 194.7 181.2 196.4 C181.2 198.0 181.4 199.7 181.7 201.4 C181.9 203.0 182.4 204.7 182.9 206.4 C183.3 208.0 183.8 209.7 184.4 211.4 C185.0 213.0 185.9 214.7 186.6 216.4 C187.3 218.0 188.1 219.7 188.6 221.4 C189.1 223.0 189.4 224.7 189.7 226.4 C190.1 228.0 190.6 229.7 190.9 231.4 C191.3 233.0 191.5 234.7 191.7 236.4 C192.0 238.0 192.2 239.7 192.4 241.4 C192.6 243.0 192.8 244.7 193.0 246.4 C193.2 248.0 193.3 249.7 193.5 251.4 C193.6 253.0 193.7 254.7 193.8 256.4 C193.9 258.0 194.1 259.7 194.2 261.4 C194.2 263.0 194.3 264.7 194.2 266.4 C194.2 268.0 194.1 269.7 194.0 271.4 C193.9 273.0 193.4 274.7 193.8 276.4 C194.2 278.0 195.4 279.7 196.2 281.4 C197.0 283.0 197.9 284.7 198.8 286.4 C199.6 288.0 200.5 289.7 201.3 291.4 C202.0 293.0 202.9 294.7 203.4 296.4 C203.9 298.0 204.1 299.7 204.5 301.4 C204.9 303.0 205.3 304.7 205.6 306.4 C205.9 308.0 206.1 309.7 206.2 311.4 C206.3 313.0 206.4 314.7 206.3 316.4 C206.3 318.0 206.1 319.7 205.7 321.4 C205.2 323.0 204.1 324.7 203.7 326.4 C203.3 328.0 203.3 329.7 203.1 331.4 C202.9 333.0 202.7 334.7 202.5 336.4 C202.3 338.0 202.1 339.7 202.0 341.4 C201.8 343.0 201.9 344.7 201.8 346.4 C201.8 348.0 201.8 349.7 201.7 351.4 C201.7 353.0 201.6 354.7 201.6 356.4 C201.6 358.0 201.7 359.7 201.9 361.4 C202.0 363.0 202.2 364.7 202.3 366.4 C202.5 368.0 202.6 369.7 202.8 371.4 C202.9 373.0 203.1 374.7 203.2 376.4 C203.3 378.0 203.4 379.7 203.5 381.4 C203.6 383.0 203.7 384.7 203.8 386.4 C203.8 388.0 204.0 389.7 204.0 391.4 C204.1 393.0 203.9 394.7 203.8 396.4 C203.7 398.0 203.6 399.7 203.5 401.4 C203.3 403.0 203.2 404.7 203.1 406.4 C202.9 408.0 202.7 409.7 202.5 411.4 C202.3 413.0 202.1 414.7 201.9 416.4 C201.7 418.0 201.5 419.7 201.3 421.4 C201.1 423.0 200.7 424.7 200.5 426.4 C200.3 428.0 200.0 429.7 200.0 431.4 C200.0 433.0 199.9 434.7 200.4 436.4 C200.8 438.0 202.0 439.7 202.5 441.4 C202.9 443.0 203.0 444.7 203.1 446.4 C203.2 448.0 203.1 449.7 203.1 451.4 C203.1 453.0 203.1 454.7 203.1 456.4 C203.1 458.0 203.1 460.5 203.1 461.4" stroke="#9b4734" stroke-width="1.0" fill="none" opacity="0.45"/><path d="M181.7 181.7 C181.7 182.6 181.7 185.1 181.7 186.7 C181.7 188.4 181.7 190.1 181.7 191.7 C181.7 193.4 181.6 195.1 181.7 196.7 C181.8 198.4 181.9 200.1 182.2 201.7 C182.5 203.4 183.0 205.1 183.4 206.7 C183.9 208.4 184.3 210.1 184.9 211.7 C185.6 213.4 186.4 215.1 187.1 216.7 C187.8 218.4 188.6 220.1 189.1 221.7 C189.6 223.4 189.9 225.1 190.2 226.7 C190.6 228.4 191.1 230.1 191.4 231.7 C191.7 233.4 192.0 235.1 192.2 236.7 C192.5 238.4 192.6 240.1 192.8 241.7 C193.0 243.4 193.3 245.1 193.5 246.7 C193.6 248.4 193.8 250.1 193.9 251.7 C194.1 253.4 194.2 255.1 194.3 256.7 C194.4 258.4 194.5 260.1 194.6 261.7 C194.7 263.4 194.7 265.1 194.7 266.7 C194.7 268.4 194.6 270.1 194.5 271.7 C194.4 273.4 193.9 275.1 194.3 276.7 C194.6 278.4 195.8 280.1 196.7 281.7 C197.5 283.4 198.4 285.1 199.2 286.7 C200.0 288.4 200.9 290.1 201.7 291.7 C202.4 293.4 203.2 295.1 203.8 296.7 C204.3 298.4 204.5 300.1 204.9 301.7 C205.2 303.4 205.7 305.1 206.0 306.7 C206.3 308.4 206.4 310.1 206.5 311.7 C206.7 313.4 206.8 315.1 206.7 316.7 C206.6 318.4 206.5 320.1 206.0 321.7 C205.6 323.4 204.5 325.1 204.1 326.7 C203.7 328.4 203.7 330.1 203.5 331.7 C203.3 333.4 203.1 335.1 202.9 336.7 C202.7 338.4 202.5 340.1 202.4 341.7 C202.2 343.4 202.3 345.1 202.2 346.7 C202.2 348.4 202.2 350.1 202.1 351.7 C202.1 353.4 202.0 355.1 202.0 356.7 C202.0 358.4 202.1 360.1 202.2 361.7 C202.4 363.4 202.6 365.1 202.7 366.7 C202.9 368.4 203.0 370.1 203.2 371.7 C203.3 373.4 203.5 375.1 203.6 376.7 C203.7 378.4 203.8 380.1 203.8 381.7 C203.9 383.4 204.0 385.1 204.1 386.7 C204.2 388.4 204.4 390.1 204.4 391.7 C204.4 393.4 204.3 395.1 204.2 396.7 C204.1 398.4 203.9 400.1 203.8 401.7 C203.7 403.4 203.6 405.1 203.5 406.7 C203.3 408.4 203.1 410.1 202.9 411.7 C202.7 413.4 202.5 415.1 202.3 416.7 C202.1 418.4 201.9 420.1 201.7 421.7 C201.5 423.4 201.1 425.1 200.9 426.7 C200.7 428.4 200.4 430.1 200.4 431.7 C200.4 433.4 200.4 435.1 200.8 436.7 C201.2 438.4 202.4 440.1 202.9 441.7 C203.3 443.4 203.4 445.1 203.5 446.7 C203.6 448.4 203.5 450.1 203.5 451.7 C203.5 453.4 203.5 455.1 203.5 456.7 C203.5 458.4 203.5 460.9 203.5 461.7" stroke="#96412f" stroke-width="0.7" fill="none" opacity="0.45"/><path d="M182.1 182.0 C182.1 182.8 182.1 185.3 182.1 187.0 C182.1 188.6 182.1 190.3 182.1 192.0 C182.1 193.6 182.1 195.3 182.1 197.0 C182.2 198.6 182.3 200.3 182.6 202.0 C182.9 203.6 183.4 205.3 183.8 207.0 C184.3 208.6 184.7 210.3 185.3 212.0 C185.9 213.6 186.8 215.3 187.5 217.0 C188.2 218.6 188.9 220.3 189.4 222.0 C190.0 223.6 190.2 225.3 190.6 227.0 C191.0 228.6 191.4 230.3 191.8 232.0 C192.1 233.6 192.3 235.3 192.6 237.0 C192.8 238.6 193.0 240.3 193.2 242.0 C193.4 243.6 193.6 245.3 193.8 247.0 C194.0 248.6 194.1 250.3 194.3 252.0 C194.4 253.6 194.5 255.3 194.6 257.0 C194.7 258.6 194.9 260.3 194.9 262.0 C195.0 263.6 195.1 265.3 195.0 267.0 C195.0 268.6 194.9 270.3 194.8 272.0 C194.7 273.6 194.2 275.3 194.6 277.0 C194.9 278.6 196.2 280.3 197.0 282.0 C197.8 283.6 198.7 285.3 199.5 287.0 C200.3 288.6 201.2 290.3 201.9 292.0 C202.7 293.6 203.5 295.3 204.1 297.0 C204.6 298.6 204.8 300.3 205.1 302.0 C205.5 303.6 206.0 305.3 206.2 307.0 C206.5 308.6 206.7 310.3 206.8 312.0 C206.9 313.6 207.0 315.3 207.0 317.0 C206.9 318.6 206.7 320.3 206.3 322.0 C205.9 323.6 204.8 325.3 204.4 327.0 C203.9 328.6 204.0 330.3 203.8 332.0 C203.6 333.6 203.4 335.3 203.2 337.0 C203.0 338.6 202.7 340.3 202.6 342.0 C202.5 343.6 202.6 345.3 202.5 347.0 C202.5 348.6 202.5 350.3 202.4 352.0 C202.4 353.6 202.3 355.3 202.3 357.0 C202.3 358.6 202.4 360.3 202.5 362.0 C202.6 363.6 202.8 365.3 203.0 367.0 C203.1 368.6 203.3 370.3 203.4 372.0 C203.6 373.6 203.7 375.3 203.8 377.0 C204.0 378.6 204.0 380.3 204.1 382.0 C204.2 383.6 204.3 385.3 204.4 387.0 C204.5 388.6 204.7 390.3 204.7 392.0 C204.7 393.6 204.6 395.3 204.5 397.0 C204.4 398.6 204.2 400.3 204.1 402.0 C204.0 403.6 203.9 405.3 203.7 407.0 C203.6 408.6 203.4 410.3 203.2 412.0 C203.0 413.6 202.8 415.3 202.6 417.0 C202.4 418.6 202.2 420.3 202.0 422.0 C201.7 423.6 201.4 425.3 201.2 427.0 C201.0 428.6 200.7 430.3 200.7 432.0 C200.7 433.6 200.6 435.3 201.1 437.0 C201.5 438.6 202.7 440.3 203.1 442.0 C203.6 443.6 203.7 445.3 203.8 447.0 C203.9 448.6 203.8 450.3 203.8 452.0 C203.8 453.6 203.8 455.3 203.8 457.0 C203.8 458.6 203.8 461.1 203.8 462.0" stroke="#a14b36" stroke-width="2.4" fill="none" opacity="0.45"/><path d="M183.2 182.5 C183.2 183.3 183.2 185.8 183.2 187.5 C183.2 189.2 183.2 190.8 183.2 192.5 C183.2 194.2 183.1 195.8 183.2 197.5 C183.3 199.2 183.4 200.8 183.7 202.5 C184.0 204.2 184.4 205.8 184.9 207.5 C185.3 209.2 185.8 210.8 186.4 212.5 C187.0 214.2 187.8 215.8 188.5 217.5 C189.2 219.2 189.9 220.8 190.4 222.5 C190.9 224.2 191.2 225.8 191.5 227.5 C191.9 229.2 192.4 230.8 192.7 232.5 C193.0 234.2 193.2 235.8 193.5 237.5 C193.7 239.2 193.9 240.8 194.1 242.5 C194.3 244.2 194.5 245.8 194.7 247.5 C194.9 249.2 195.0 250.8 195.2 252.5 C195.3 254.2 195.4 255.8 195.5 257.5 C195.6 259.2 195.8 260.8 195.8 262.5 C195.9 264.2 195.9 265.8 195.9 267.5 C195.9 269.2 195.8 270.8 195.7 272.5 C195.6 274.2 195.1 275.8 195.5 277.5 C195.8 279.2 197.0 280.8 197.8 282.5 C198.6 284.2 199.5 285.8 200.3 287.5 C201.1 289.2 202.0 290.8 202.7 292.5 C203.5 294.2 204.3 295.8 204.8 297.5 C205.3 299.2 205.5 300.8 205.9 302.5 C206.2 304.2 206.7 305.8 206.9 307.5 C207.2 309.2 207.4 310.8 207.5 312.5 C207.6 314.2 207.7 315.8 207.6 317.5 C207.6 319.2 207.4 320.8 207.0 322.5 C206.6 324.2 205.5 325.8 205.1 327.5 C204.7 329.2 204.7 330.8 204.5 332.5 C204.3 334.2 204.1 335.8 204.0 337.5 C203.8 339.2 203.5 340.8 203.4 342.5 C203.3 344.2 203.3 345.8 203.3 347.5 C203.2 349.2 203.2 350.8 203.2 352.5 C203.1 354.2 203.0 355.8 203.1 357.5 C203.1 359.2 203.2 360.8 203.3 362.5 C203.4 364.2 203.6 365.8 203.7 367.5 C203.9 369.2 204.0 370.8 204.2 372.5 C204.3 374.2 204.5 375.8 204.6 377.5 C204.7 379.2 204.7 380.8 204.8 382.5 C204.9 384.2 205.0 385.8 205.1 387.5 C205.2 389.2 205.4 390.8 205.4 392.5 C205.4 394.2 205.3 395.8 205.2 397.5 C205.1 399.2 204.9 400.8 204.8 402.5 C204.7 404.2 204.6 405.8 204.5 407.5 C204.3 409.2 204.1 410.8 203.9 412.5 C203.7 414.2 203.6 415.8 203.4 417.5 C203.2 419.2 203.0 420.8 202.7 422.5 C202.5 424.2 202.2 425.8 202.0 427.5 C201.8 429.2 201.5 430.8 201.5 432.5 C201.5 434.2 201.4 435.8 201.8 437.5 C202.2 439.2 203.4 440.8 203.9 442.5 C204.3 444.2 204.4 445.8 204.5 447.5 C204.6 449.2 204.5 450.8 204.5 452.5 C204.5 454.2 204.5 455.8 204.5 457.5 C204.5 459.2 204.5 461.7 204.5 462.5" stroke="#8e3d2c" stroke-width="1.8" fill="none" opacity="0.6"/><path d="M184.0 182.8 C184.0 183.7 184.0 186.2 184.0 187.8 C184.0 189.5 184.0 191.2 184.0 192.8 C184.0 194.5 183.9 196.2 184.0 197.8 C184.0 199.5 184.1 201.2 184.4 202.8 C184.7 204.5 185.2 206.2 185.6 207.8 C186.0 209.5 186.5 211.2 187.1 212.8 C187.7 214.5 188.5 216.2 189.2 217.8 C189.9 219.5 190.6 221.2 191.1 222.8 C191.6 224.5 191.8 226.2 192.2 227.8 C192.6 229.5 193.0 231.2 193.3 232.8 C193.6 234.5 193.9 236.2 194.1 237.8 C194.3 239.5 194.5 241.2 194.7 242.8 C194.9 244.5 195.1 246.2 195.3 247.8 C195.5 249.5 195.6 251.2 195.8 252.8 C195.9 254.5 196.0 256.2 196.1 257.8 C196.2 259.5 196.4 261.2 196.4 262.8 C196.5 264.5 196.5 266.2 196.5 267.8 C196.5 269.5 196.4 271.2 196.3 272.8 C196.2 274.5 195.7 276.2 196.1 277.8 C196.4 279.5 197.6 281.2 198.4 282.8 C199.2 284.5 200.1 286.2 200.9 287.8 C201.7 289.5 202.5 291.2 203.2 292.8 C204.0 294.5 204.8 296.2 205.3 297.8 C205.8 299.5 206.0 301.2 206.3 302.8 C206.7 304.5 207.2 306.2 207.4 307.8 C207.7 309.5 207.8 311.2 208.0 312.8 C208.1 314.5 208.2 316.2 208.1 317.8 C208.0 319.5 207.9 321.2 207.5 322.8 C207.0 324.5 206.0 326.2 205.6 327.8 C205.2 329.5 205.2 331.2 205.0 332.8 C204.8 334.5 204.6 336.2 204.5 337.8 C204.3 339.5 204.0 341.2 203.9 342.8 C203.8 344.5 203.8 346.2 203.8 347.8 C203.8 349.5 203.7 351.2 203.7 352.8 C203.7 354.5 203.6 356.2 203.6 357.8 C203.6 359.5 203.7 361.2 203.8 362.8 C203.9 364.5 204.1 366.2 204.2 367.8 C204.4 369.5 204.5 371.2 204.7 372.8 C204.8 374.5 205.0 376.2 205.1 377.8 C205.2 379.5 205.2 381.2 205.3 382.8 C205.4 384.5 205.5 386.2 205.6 387.8 C205.7 389.5 205.9 391.2 205.9 392.8 C205.9 394.5 205.8 396.2 205.7 397.8 C205.6 399.5 205.4 401.2 205.3 402.8 C205.2 404.5 205.1 406.2 205.0 407.8 C204.8 409.5 204.6 411.2 204.4 412.8 C204.2 414.5 204.1 416.2 203.9 417.8 C203.7 419.5 203.5 421.2 203.3 422.8 C203.0 424.5 202.7 426.2 202.5 427.8 C202.3 429.5 202.0 431.2 202.0 432.8 C202.0 434.5 202.0 436.2 202.4 437.8 C202.8 439.5 204.0 441.2 204.4 442.8 C204.8 444.5 204.9 446.2 205.0 447.8 C205.1 449.5 205.0 451.2 205.0 452.8 C205.0 454.5 205.0 456.2 205.0 457.8 C205.0 459.5 205.0 462.0 205.0 462.8" stroke="#be6647" stroke-width="1.8" fill="none" opacity="0.45"/><path d="M185.0 183.2 C185.0 184.1 185.0 186.6 185.0 188.2 C185.0 189.9 185.0 191.6 185.0 193.2 C185.0 194.9 184.9 196.6 185.0 198.2 C185.1 199.9 185.2 201.6 185.5 203.2 C185.7 204.9 186.2 206.6 186.6 208.2 C187.1 209.9 187.5 211.6 188.1 213.2 C188.7 214.9 189.5 216.6 190.2 218.2 C190.8 219.9 191.5 221.6 192.0 223.2 C192.5 224.9 192.8 226.6 193.1 228.2 C193.5 229.9 193.9 231.6 194.2 233.2 C194.5 234.9 194.8 236.6 195.0 238.2 C195.2 239.9 195.4 241.6 195.6 243.2 C195.8 244.9 196.0 246.6 196.2 248.2 C196.4 249.9 196.5 251.6 196.6 253.2 C196.8 254.9 196.9 256.6 197.0 258.2 C197.1 259.9 197.2 261.6 197.3 263.2 C197.4 264.9 197.4 266.6 197.4 268.2 C197.3 269.9 197.2 271.6 197.2 273.2 C197.1 274.9 196.6 276.6 196.9 278.2 C197.3 279.9 198.5 281.6 199.3 283.2 C200.1 284.9 200.9 286.6 201.7 288.2 C202.5 289.9 203.3 291.6 204.0 293.2 C204.7 294.9 205.5 296.6 206.0 298.2 C206.5 299.9 206.7 301.6 207.1 303.2 C207.4 304.9 207.9 306.6 208.1 308.2 C208.4 309.9 208.5 311.6 208.6 313.2 C208.7 314.9 208.9 316.6 208.8 318.2 C208.7 319.9 208.6 321.6 208.1 323.2 C207.7 324.9 206.7 326.6 206.3 328.2 C205.9 329.9 205.9 331.6 205.7 333.2 C205.6 334.9 205.4 336.6 205.2 338.2 C205.0 339.9 204.8 341.6 204.6 343.2 C204.5 344.9 204.6 346.6 204.5 348.2 C204.5 349.9 204.5 351.6 204.4 353.2 C204.4 354.9 204.3 356.6 204.3 358.2 C204.4 359.9 204.4 361.6 204.6 363.2 C204.7 364.9 204.8 366.6 205.0 368.2 C205.1 369.9 205.3 371.6 205.4 373.2 C205.5 374.9 205.7 376.6 205.8 378.2 C205.9 379.9 206.0 381.6 206.0 383.2 C206.1 384.9 206.2 386.6 206.3 388.2 C206.4 389.9 206.6 391.6 206.6 393.2 C206.6 394.9 206.5 396.6 206.4 398.2 C206.3 399.9 206.1 401.6 206.0 403.2 C205.9 404.9 205.8 406.6 205.7 408.2 C205.5 409.9 205.3 411.6 205.1 413.2 C205.0 414.9 204.8 416.6 204.6 418.2 C204.4 419.9 204.2 421.6 204.0 423.2 C203.8 424.9 203.5 426.6 203.3 428.2 C203.1 429.9 202.8 431.6 202.8 433.2 C202.8 434.9 202.7 436.6 203.1 438.2 C203.5 439.9 204.7 441.6 205.1 443.2 C205.6 444.9 205.7 446.6 205.8 448.2 C205.9 449.9 205.8 451.6 205.8 453.2 C205.8 454.9 205.8 456.6 205.8 458.2 C205.8 459.9 205.8 462.4 205.8 463.2" stroke="#b15a3e" stroke-width="1.3" fill="none" opacity="0.9"/><path d="M186.3 183.7 C186.3 184.5 186.3 187.0 186.3 188.7 C186.3 190.4 186.3 192.0 186.3 193.7 C186.3 195.4 186.3 197.0 186.3 198.7 C186.4 200.4 186.5 202.0 186.8 203.7 C187.0 205.4 187.5 207.0 187.9 208.7 C188.3 210.4 188.8 212.0 189.3 213.7 C189.9 215.4 190.7 217.0 191.4 218.7 C192.0 220.4 192.7 222.0 193.2 223.7 C193.7 225.4 193.9 227.0 194.3 228.7 C194.6 230.4 195.1 232.0 195.4 233.7 C195.7 235.4 195.9 237.0 196.1 238.7 C196.3 240.4 196.5 242.0 196.7 243.7 C196.9 245.4 197.1 247.0 197.3 248.7 C197.5 250.4 197.6 252.0 197.7 253.7 C197.8 255.4 197.9 257.0 198.0 258.7 C198.1 260.4 198.3 262.0 198.4 263.7 C198.4 265.4 198.5 267.0 198.4 268.7 C198.4 270.4 198.3 272.0 198.2 273.7 C198.2 275.4 197.7 277.0 198.0 278.7 C198.4 280.4 199.5 282.0 200.3 283.7 C201.1 285.4 201.9 287.0 202.7 288.7 C203.5 290.4 204.2 292.0 204.9 293.7 C205.6 295.4 206.4 297.0 206.9 298.7 C207.4 300.4 207.6 302.0 207.9 303.7 C208.3 305.4 208.7 307.0 209.0 308.7 C209.2 310.4 209.4 312.0 209.5 313.7 C209.6 315.4 209.7 317.0 209.6 318.7 C209.5 320.4 209.4 322.0 209.0 323.7 C208.6 325.4 207.6 327.0 207.2 328.7 C206.8 330.4 206.8 332.0 206.6 333.7 C206.5 335.4 206.3 337.0 206.1 338.7 C205.9 340.4 205.7 342.0 205.6 343.7 C205.5 345.4 205.5 347.0 205.5 348.7 C205.4 350.4 205.4 352.0 205.4 353.7 C205.3 355.4 205.3 357.0 205.3 358.7 C205.3 360.4 205.4 362.0 205.5 363.7 C205.6 365.4 205.7 367.0 205.9 368.7 C206.0 370.4 206.2 372.0 206.3 373.7 C206.4 375.4 206.6 377.0 206.7 378.7 C206.8 380.4 206.8 382.0 206.9 383.7 C207.0 385.4 207.1 387.0 207.2 388.7 C207.3 390.4 207.5 392.0 207.5 393.7 C207.5 395.4 207.3 397.0 207.2 398.7 C207.1 400.4 207.0 402.0 206.9 403.7 C206.8 405.4 206.7 407.0 206.6 408.7 C206.4 410.4 206.2 412.0 206.0 413.7 C205.9 415.4 205.7 417.0 205.5 418.7 C205.3 420.4 205.2 422.0 204.9 423.7 C204.7 425.4 204.4 427.0 204.2 428.7 C204.0 430.4 203.8 432.0 203.8 433.7 C203.7 435.4 203.7 437.0 204.1 438.7 C204.5 440.4 205.6 442.0 206.0 443.7 C206.5 445.4 206.6 447.0 206.7 448.7 C206.8 450.4 206.7 452.0 206.7 453.7 C206.7 455.4 206.7 457.0 206.7 458.7 C206.7 460.4 206.7 462.9 206.7 463.7" stroke="#96412f" stroke-width="1.3" fill="none" opacity="0.75"/><path d="M187.3 184.0 C187.3 184.9 187.3 187.4 187.3 189.0 C187.3 190.7 187.3 192.4 187.3 194.0 C187.3 195.7 187.3 197.4 187.3 199.0 C187.4 200.7 187.5 202.4 187.8 204.0 C188.0 205.7 188.5 207.4 188.9 209.0 C189.3 210.7 189.7 212.4 190.3 214.0 C190.9 215.7 191.7 217.4 192.3 219.0 C192.9 220.7 193.6 222.4 194.1 224.0 C194.6 225.7 194.8 227.4 195.2 229.0 C195.5 230.7 195.9 232.4 196.2 234.0 C196.5 235.7 196.7 237.4 197.0 239.0 C197.2 240.7 197.3 242.4 197.5 244.0 C197.7 245.7 197.9 247.4 198.1 249.0 C198.3 250.7 198.4 252.4 198.5 254.0 C198.7 255.7 198.8 257.4 198.9 259.0 C199.0 260.7 199.1 262.4 199.2 264.0 C199.2 265.7 199.3 267.4 199.2 269.0 C199.2 270.7 199.1 272.4 199.0 274.0 C199.0 275.7 198.5 277.4 198.8 279.0 C199.2 280.7 200.3 282.4 201.1 284.0 C201.9 285.7 202.7 287.4 203.4 289.0 C204.2 290.7 205.0 292.4 205.7 294.0 C206.3 295.7 207.1 297.4 207.6 299.0 C208.1 300.7 208.2 302.4 208.6 304.0 C208.9 305.7 209.4 307.4 209.6 309.0 C209.9 310.7 210.0 312.4 210.1 314.0 C210.2 315.7 210.3 317.4 210.3 319.0 C210.2 320.7 210.0 322.4 209.6 324.0 C209.2 325.7 208.2 327.4 207.8 329.0 C207.4 330.7 207.5 332.4 207.3 334.0 C207.1 335.7 207.0 337.4 206.8 339.0 C206.6 340.7 206.4 342.4 206.3 344.0 C206.1 345.7 206.2 347.4 206.2 349.0 C206.1 350.7 206.1 352.4 206.1 354.0 C206.0 355.7 206.0 357.4 206.0 359.0 C206.0 360.7 206.1 362.4 206.2 364.0 C206.3 365.7 206.4 367.4 206.6 369.0 C206.7 370.7 206.9 372.4 207.0 374.0 C207.1 375.7 207.3 377.4 207.4 379.0 C207.5 380.7 207.5 382.4 207.6 384.0 C207.7 385.7 207.8 387.4 207.8 389.0 C207.9 390.7 208.1 392.4 208.1 394.0 C208.1 395.7 208.0 397.4 207.9 399.0 C207.8 400.7 207.7 402.4 207.6 404.0 C207.4 405.7 207.4 407.4 207.2 409.0 C207.1 410.7 206.9 412.4 206.7 414.0 C206.6 415.7 206.4 417.4 206.2 419.0 C206.0 420.7 205.9 422.4 205.6 424.0 C205.4 425.7 205.1 427.4 204.9 429.0 C204.7 430.7 204.5 432.4 204.5 434.0 C204.5 435.7 204.4 437.4 204.8 439.0 C205.2 440.7 206.3 442.4 206.7 444.0 C207.2 445.7 207.2 447.4 207.3 449.0 C207.4 450.7 207.3 452.4 207.3 454.0 C207.3 455.7 207.3 457.4 207.3 459.0 C207.3 460.7 207.3 463.2 207.3 464.0" stroke="#cd8866" stroke-width="1.3" fill="none" opacity="0.45"/><path d="M188.0 184.2 C188.0 185.1 188.0 187.6 188.0 189.2 C188.0 190.9 188.0 192.6 188.0 194.2 C188.0 195.9 187.9 197.6 188.0 199.2 C188.1 200.9 188.2 202.6 188.5 204.2 C188.7 205.9 189.1 207.6 189.6 209.2 C190.0 210.9 190.4 212.6 190.9 214.2 C191.5 215.9 192.3 217.6 192.9 219.2 C193.6 220.9 194.2 222.6 194.7 224.2 C195.2 225.9 195.4 227.6 195.8 229.2 C196.1 230.9 196.5 232.6 196.8 234.2 C197.1 235.9 197.3 237.6 197.5 239.2 C197.8 240.9 197.9 242.6 198.1 244.2 C198.3 245.9 198.5 247.6 198.7 249.2 C198.8 250.9 199.0 252.6 199.1 254.2 C199.2 255.9 199.3 257.6 199.4 259.2 C199.5 260.9 199.7 262.6 199.7 264.2 C199.8 265.9 199.8 267.6 199.8 269.2 C199.8 270.9 199.7 272.6 199.6 274.2 C199.5 275.9 199.1 277.6 199.4 279.2 C199.7 280.9 200.9 282.6 201.7 284.2 C202.4 285.9 203.2 287.6 204.0 289.2 C204.7 290.9 205.5 292.6 206.1 294.2 C206.8 295.9 207.6 297.6 208.0 299.2 C208.5 300.9 208.7 302.6 209.0 304.2 C209.4 305.9 209.8 307.6 210.1 309.2 C210.3 310.9 210.4 312.6 210.6 314.2 C210.7 315.9 210.8 317.6 210.7 319.2 C210.6 320.9 210.5 322.6 210.1 324.2 C209.7 325.9 208.7 327.6 208.3 329.2 C207.9 330.9 207.9 332.6 207.8 334.2 C207.6 335.9 207.4 337.6 207.3 339.2 C207.1 340.9 206.8 342.6 206.7 344.2 C206.6 345.9 206.7 347.6 206.6 349.2 C206.6 350.9 206.6 352.6 206.6 354.2 C206.5 355.9 206.4 357.6 206.5 359.2 C206.5 360.9 206.6 362.6 206.7 364.2 C206.8 365.9 206.9 367.6 207.1 369.2 C207.2 370.9 207.3 372.6 207.5 374.2 C207.6 375.9 207.7 377.6 207.8 379.2 C207.9 380.9 208.0 382.6 208.1 384.2 C208.1 385.9 208.2 387.6 208.3 389.2 C208.4 390.9 208.6 392.6 208.6 394.2 C208.6 395.9 208.5 397.6 208.4 399.2 C208.3 400.9 208.1 402.6 208.0 404.2 C207.9 405.9 207.8 407.6 207.7 409.2 C207.6 410.9 207.4 412.6 207.2 414.2 C207.0 415.9 206.9 417.6 206.7 419.2 C206.5 420.9 206.3 422.6 206.1 424.2 C205.9 425.9 205.6 427.6 205.4 429.2 C205.2 430.9 205.0 432.6 205.0 434.2 C205.0 435.9 204.9 437.6 205.3 439.2 C205.7 440.9 206.8 442.6 207.2 444.2 C207.6 445.9 207.7 447.6 207.8 449.2 C207.9 450.9 207.8 452.6 207.8 454.2 C207.8 455.9 207.8 457.6 207.8 459.2 C207.8 460.9 207.8 463.4 207.8 464.2" stroke="#96412f" stroke-width="1.8" fill="none" opacity="0.45"/><path d="M190.0 184.8 C190.0 185.6 190.0 188.1 190.0 189.8 C190.0 191.4 190.0 193.1 190.0 194.8 C190.0 196.4 189.9 198.1 190.0 199.8 C190.1 201.4 190.2 203.1 190.4 204.8 C190.7 206.4 191.1 208.1 191.5 209.8 C191.9 211.4 192.3 213.1 192.8 214.8 C193.4 216.4 194.2 218.1 194.8 219.8 C195.4 221.4 196.0 223.1 196.5 224.8 C196.9 226.4 197.2 228.1 197.5 229.8 C197.8 231.4 198.2 233.1 198.5 234.8 C198.8 236.4 199.0 238.1 199.2 239.8 C199.4 241.4 199.6 243.1 199.8 244.8 C200.0 246.4 200.2 248.1 200.3 249.8 C200.5 251.4 200.6 253.1 200.7 254.8 C200.9 256.4 200.9 258.1 201.0 259.8 C201.1 261.4 201.3 263.1 201.3 264.8 C201.4 266.4 201.4 268.1 201.4 269.8 C201.4 271.4 201.3 273.1 201.2 274.8 C201.2 276.4 200.7 278.1 201.0 279.8 C201.4 281.4 202.5 283.1 203.2 284.8 C204.0 286.4 204.8 288.1 205.5 289.8 C206.2 291.4 206.9 293.1 207.6 294.8 C208.2 296.4 208.9 298.1 209.4 299.8 C209.9 301.4 210.0 303.1 210.3 304.8 C210.7 306.4 211.1 308.1 211.3 309.8 C211.6 311.4 211.7 313.1 211.8 314.8 C211.9 316.4 212.0 318.1 212.0 319.8 C211.9 321.4 211.7 323.1 211.3 324.8 C211.0 326.4 210.0 328.1 209.6 329.8 C209.2 331.4 209.3 333.1 209.1 334.8 C209.0 336.4 208.8 338.1 208.6 339.8 C208.5 341.4 208.2 343.1 208.1 344.8 C208.0 346.4 208.1 348.1 208.0 349.8 C208.0 351.4 208.0 353.1 208.0 354.8 C207.9 356.4 207.8 358.1 207.9 359.8 C207.9 361.4 207.9 363.1 208.0 364.8 C208.1 366.4 208.3 368.1 208.4 369.8 C208.6 371.4 208.7 373.1 208.8 374.8 C208.9 376.4 209.1 378.1 209.2 379.8 C209.3 381.4 209.3 383.1 209.4 384.8 C209.5 386.4 209.5 388.1 209.6 389.8 C209.7 391.4 209.9 393.1 209.9 394.8 C209.9 396.4 209.8 398.1 209.7 399.8 C209.6 401.4 209.4 403.1 209.3 404.8 C209.2 406.4 209.2 408.1 209.0 409.8 C208.9 411.4 208.7 413.1 208.6 414.8 C208.4 416.4 208.2 418.1 208.1 419.8 C207.9 421.4 207.7 423.1 207.5 424.8 C207.3 426.4 207.0 428.1 206.8 429.8 C206.6 431.4 206.4 433.1 206.4 434.8 C206.4 436.4 206.4 438.1 206.7 439.8 C207.1 441.4 208.2 443.1 208.6 444.8 C209.0 446.4 209.1 448.1 209.2 449.8 C209.3 451.4 209.2 453.1 209.2 454.8 C209.2 456.4 209.2 458.1 209.2 459.8 C209.2 461.4 209.2 463.9 209.2 464.8" stroke="#c47859" stroke-width="0.7" fill="none" opacity="0.45"/><path d="M191.4 185.1 C191.4 185.9 191.4 188.4 191.4 190.1 C191.4 191.8 191.4 193.4 191.4 195.1 C191.4 196.8 191.4 198.4 191.4 200.1 C191.5 201.8 191.6 203.4 191.9 205.1 C192.1 206.8 192.5 208.4 192.9 210.1 C193.3 211.8 193.7 213.4 194.2 215.1 C194.7 216.8 195.5 218.4 196.1 220.1 C196.7 221.8 197.3 223.4 197.8 225.1 C198.2 226.8 198.4 228.4 198.8 230.1 C199.1 231.8 199.5 233.4 199.8 235.1 C200.0 236.8 200.2 238.4 200.4 240.1 C200.7 241.8 200.8 243.4 201.0 245.1 C201.2 246.8 201.4 248.4 201.5 250.1 C201.7 251.8 201.8 253.4 201.9 255.1 C202.0 256.8 202.1 258.4 202.2 260.1 C202.3 261.8 202.5 263.4 202.5 265.1 C202.6 266.8 202.6 268.4 202.6 270.1 C202.6 271.8 202.5 273.4 202.4 275.1 C202.3 276.8 201.9 278.4 202.2 280.1 C202.5 281.8 203.6 283.4 204.4 285.1 C205.1 286.8 205.9 288.4 206.6 290.1 C207.3 291.8 207.9 293.4 208.6 295.1 C209.2 296.8 209.9 298.4 210.4 300.1 C210.8 301.8 211.0 303.4 211.3 305.1 C211.6 306.8 212.0 308.4 212.3 310.1 C212.5 311.8 212.6 313.4 212.7 315.1 C212.8 316.8 212.9 318.4 212.9 320.1 C212.8 321.8 212.6 323.4 212.3 325.1 C211.9 326.8 210.9 328.4 210.6 330.1 C210.2 331.8 210.3 333.4 210.1 335.1 C209.9 336.8 209.8 338.4 209.6 340.1 C209.4 341.8 209.2 343.4 209.1 345.1 C209.0 346.8 209.1 348.4 209.0 350.1 C209.0 351.8 209.0 353.4 209.0 355.1 C208.9 356.8 208.9 358.4 208.9 360.1 C208.9 361.8 209.0 363.4 209.0 365.1 C209.1 366.8 209.3 368.4 209.4 370.1 C209.5 371.8 209.7 373.4 209.8 375.1 C209.9 376.8 210.0 378.4 210.1 380.1 C210.2 381.8 210.3 383.4 210.3 385.1 C210.4 386.8 210.5 388.4 210.6 390.1 C210.7 391.8 210.8 393.4 210.8 395.1 C210.8 396.8 210.7 398.4 210.6 400.1 C210.5 401.8 210.4 403.4 210.3 405.1 C210.2 406.8 210.1 408.4 210.0 410.1 C209.9 411.8 209.7 413.4 209.5 415.1 C209.4 416.8 209.2 418.4 209.1 420.1 C208.9 421.8 208.7 423.4 208.5 425.1 C208.3 426.8 208.0 428.4 207.9 430.1 C207.7 431.8 207.5 433.4 207.5 435.1 C207.4 436.8 207.4 438.4 207.8 440.1 C208.1 441.8 209.2 443.4 209.6 445.1 C210.0 446.8 210.0 448.4 210.1 450.1 C210.2 451.8 210.1 453.4 210.1 455.1 C210.1 456.8 210.1 458.4 210.1 460.1 C210.1 461.8 210.1 464.3 210.1 465.1" stroke="#c67452" stroke-width="1.0" fill="none" opacity="0.6"/><path d="M193.0 185.5 C193.0 186.3 193.0 188.8 193.0 190.5 C193.0 192.1 193.0 193.8 193.0 195.5 C193.0 197.1 193.0 198.8 193.0 200.5 C193.1 202.1 193.2 203.8 193.4 205.5 C193.7 207.1 194.1 208.8 194.5 210.5 C194.8 212.1 195.2 213.8 195.7 215.5 C196.2 217.1 197.0 218.8 197.6 220.5 C198.1 222.1 198.7 223.8 199.2 225.5 C199.6 227.1 199.8 228.8 200.2 230.5 C200.5 232.1 200.9 233.8 201.1 235.5 C201.4 237.1 201.6 238.8 201.8 240.5 C202.0 242.1 202.2 243.8 202.3 245.5 C202.5 247.1 202.7 248.8 202.8 250.5 C203.0 252.1 203.1 253.8 203.2 255.5 C203.4 257.1 203.4 258.8 203.5 260.5 C203.6 262.1 203.8 263.8 203.8 265.5 C203.9 267.1 203.9 268.8 203.9 270.5 C203.9 272.1 203.8 273.8 203.7 275.5 C203.6 277.1 203.2 278.8 203.5 280.5 C203.8 282.1 204.9 283.8 205.6 285.5 C206.4 287.1 207.1 288.8 207.8 290.5 C208.4 292.1 209.1 293.8 209.7 295.5 C210.3 297.1 211.0 298.8 211.4 300.5 C211.9 302.1 212.0 303.8 212.3 305.5 C212.7 307.1 213.1 308.8 213.3 310.5 C213.5 312.1 213.7 313.8 213.8 315.5 C213.9 317.1 214.0 318.8 213.9 320.5 C213.8 322.1 213.7 323.8 213.3 325.5 C212.9 327.1 212.0 328.8 211.6 330.5 C211.3 332.1 211.3 333.8 211.2 335.5 C211.0 337.1 210.9 338.8 210.7 340.5 C210.5 342.1 210.3 343.8 210.2 345.5 C210.1 347.1 210.2 348.8 210.2 350.5 C210.1 352.1 210.1 353.8 210.1 355.5 C210.1 357.1 210.0 358.8 210.0 360.5 C210.0 362.1 210.1 363.8 210.2 365.5 C210.3 367.1 210.4 368.8 210.5 370.5 C210.6 372.1 210.8 373.8 210.9 375.5 C211.0 377.1 211.1 378.8 211.2 380.5 C211.3 382.1 211.3 383.8 211.4 385.5 C211.5 387.1 211.6 388.8 211.6 390.5 C211.7 392.1 211.9 393.8 211.9 395.5 C211.9 397.1 211.8 398.8 211.7 400.5 C211.6 402.1 211.5 403.8 211.4 405.5 C211.3 407.1 211.2 408.8 211.1 410.5 C210.9 412.1 210.8 413.8 210.6 415.5 C210.5 417.1 210.3 418.8 210.2 420.5 C210.0 422.1 209.9 423.8 209.7 425.5 C209.5 427.1 209.2 428.8 209.0 430.5 C208.8 432.1 208.6 433.8 208.6 435.5 C208.6 437.1 208.6 438.8 208.9 440.5 C209.3 442.1 210.3 443.8 210.7 445.5 C211.1 447.1 211.1 448.8 211.2 450.5 C211.3 452.1 211.2 453.8 211.2 455.5 C211.2 457.1 211.2 458.8 211.2 460.5 C211.2 462.1 211.2 464.6 211.2 465.5" stroke="#c67452" stroke-width="1.8" fill="none" opacity="0.9"/><path d="M194.7 185.8 C194.7 186.6 194.7 189.1 194.7 190.8 C194.7 192.5 194.7 194.1 194.7 195.8 C194.7 197.5 194.6 199.1 194.7 200.8 C194.8 202.5 194.9 204.1 195.1 205.8 C195.3 207.5 195.7 209.1 196.1 210.8 C196.4 212.5 196.8 214.1 197.3 215.8 C197.8 217.5 198.5 219.1 199.1 220.8 C199.6 222.5 200.2 224.1 200.7 225.8 C201.1 227.5 201.3 229.1 201.6 230.8 C201.9 232.5 202.3 234.1 202.6 235.8 C202.8 237.5 203.0 239.1 203.2 240.8 C203.4 242.5 203.5 244.1 203.7 245.8 C203.9 247.5 204.1 249.1 204.2 250.8 C204.4 252.5 204.5 254.1 204.6 255.8 C204.7 257.5 204.8 259.1 204.9 260.8 C205.0 262.5 205.1 264.1 205.2 265.8 C205.2 267.5 205.2 269.1 205.2 270.8 C205.2 272.5 205.1 274.1 205.0 275.8 C205.0 277.5 204.5 279.1 204.9 280.8 C205.2 282.5 206.3 284.1 207.0 285.8 C207.7 287.5 208.4 289.1 209.0 290.8 C209.7 292.5 210.3 294.1 210.9 295.8 C211.5 297.5 212.1 299.1 212.6 300.8 C213.0 302.5 213.1 304.1 213.4 305.8 C213.7 307.5 214.1 309.1 214.4 310.8 C214.6 312.5 214.7 314.1 214.8 315.8 C214.9 317.5 215.0 319.1 214.9 320.8 C214.9 322.5 214.7 324.1 214.4 325.8 C214.0 327.5 213.1 329.1 212.8 330.8 C212.4 332.5 212.4 334.1 212.3 335.8 C212.1 337.5 212.0 339.1 211.8 340.8 C211.7 342.5 211.5 344.1 211.4 345.8 C211.3 347.5 211.3 349.1 211.3 350.8 C211.3 352.5 211.3 354.1 211.3 355.8 C211.2 357.5 211.2 359.1 211.2 360.8 C211.2 362.5 211.2 364.1 211.3 365.8 C211.4 367.5 211.6 369.1 211.7 370.8 C211.8 372.5 211.9 374.1 212.0 375.8 C212.1 377.5 212.3 379.1 212.3 380.8 C212.4 382.5 212.5 384.1 212.5 385.8 C212.6 387.5 212.7 389.1 212.7 390.8 C212.8 392.5 213.0 394.1 213.0 395.8 C213.0 397.5 212.9 399.1 212.8 400.8 C212.7 402.5 212.6 404.1 212.5 405.8 C212.4 407.5 212.3 409.1 212.2 410.8 C212.1 412.5 211.9 414.1 211.8 415.8 C211.6 417.5 211.5 419.1 211.3 420.8 C211.2 422.5 211.0 424.1 210.8 425.8 C210.6 427.5 210.4 429.1 210.2 430.8 C210.0 432.5 209.8 434.1 209.8 435.8 C209.8 437.5 209.8 439.1 210.1 440.8 C210.4 442.5 211.4 444.1 211.8 445.8 C212.2 447.5 212.3 449.1 212.4 450.8 C212.5 452.5 212.4 454.1 212.4 455.8 C212.4 457.5 212.4 459.1 212.4 460.8 C212.4 462.5 212.4 465.0 212.4 465.8" stroke="#c47859" stroke-width="1.8" fill="none" opacity="0.45"/><path d="M195.9 186.0 C195.9 186.9 195.9 189.4 195.9 191.0 C195.9 192.7 195.9 194.4 195.9 196.0 C195.9 197.7 195.9 199.4 195.9 201.0 C196.0 202.7 196.1 204.4 196.3 206.0 C196.5 207.7 196.9 209.4 197.3 211.0 C197.6 212.7 198.0 214.4 198.5 216.0 C199.0 217.7 199.7 219.4 200.2 221.0 C200.8 222.7 201.3 224.4 201.8 226.0 C202.2 227.7 202.4 229.4 202.7 231.0 C203.0 232.7 203.3 234.4 203.6 236.0 C203.9 237.7 204.1 239.4 204.2 241.0 C204.4 242.7 204.6 244.4 204.7 246.0 C204.9 247.7 205.1 249.4 205.2 251.0 C205.4 252.7 205.5 254.4 205.6 256.0 C205.7 257.7 205.8 259.4 205.9 261.0 C206.0 262.7 206.1 264.4 206.2 266.0 C206.2 267.7 206.2 269.4 206.2 271.0 C206.2 272.7 206.1 274.4 206.0 276.0 C206.0 277.7 205.5 279.4 205.9 281.0 C206.2 282.7 207.3 284.4 207.9 286.0 C208.6 287.7 209.3 289.4 210.0 291.0 C210.6 292.7 211.2 294.4 211.8 296.0 C212.4 297.7 213.0 299.4 213.4 301.0 C213.8 302.7 214.0 304.4 214.3 306.0 C214.5 307.7 214.9 309.4 215.2 311.0 C215.4 312.7 215.5 314.4 215.6 316.0 C215.7 317.7 215.8 319.4 215.7 321.0 C215.6 322.7 215.5 324.4 215.1 326.0 C214.8 327.7 213.9 329.4 213.6 331.0 C213.2 332.7 213.3 334.4 213.1 336.0 C213.0 337.7 212.8 339.4 212.7 341.0 C212.5 342.7 212.3 344.4 212.2 346.0 C212.2 347.7 212.2 349.4 212.2 351.0 C212.2 352.7 212.2 354.4 212.1 356.0 C212.1 357.7 212.0 359.4 212.0 361.0 C212.0 362.7 212.1 364.4 212.2 366.0 C212.3 367.7 212.4 369.4 212.5 371.0 C212.6 372.7 212.8 374.4 212.9 376.0 C213.0 377.7 213.1 379.4 213.2 381.0 C213.2 382.7 213.3 384.4 213.3 386.0 C213.4 387.7 213.5 389.4 213.5 391.0 C213.6 392.7 213.8 394.4 213.8 396.0 C213.8 397.7 213.7 399.4 213.6 401.0 C213.5 402.7 213.4 404.4 213.3 406.0 C213.2 407.7 213.1 409.4 213.0 411.0 C212.9 412.7 212.7 414.4 212.6 416.0 C212.4 417.7 212.3 419.4 212.2 421.0 C212.0 422.7 211.9 424.4 211.7 426.0 C211.5 427.7 211.2 429.4 211.1 431.0 C210.9 432.7 210.7 434.4 210.7 436.0 C210.7 437.7 210.7 439.4 211.0 441.0 C211.3 442.7 212.3 444.4 212.7 446.0 C213.0 447.7 213.1 449.4 213.2 451.0 C213.3 452.7 213.2 454.4 213.2 456.0 C213.2 457.7 213.2 459.4 213.2 461.0 C213.2 462.7 213.2 465.2 213.2 466.0" stroke="#a14b36" stroke-width="1.3" fill="none" opacity="0.75"/><path d="M197.1 186.2 C197.1 187.1 197.1 189.6 197.1 191.2 C197.1 192.9 197.1 194.6 197.1 196.2 C197.1 197.9 197.1 199.6 197.1 201.2 C197.2 202.9 197.3 204.6 197.5 206.2 C197.7 207.9 198.1 209.6 198.4 211.2 C198.8 212.9 199.1 214.6 199.6 216.2 C200.1 217.9 200.8 219.6 201.3 221.2 C201.9 222.9 202.4 224.6 202.8 226.2 C203.2 227.9 203.4 229.6 203.7 231.2 C204.0 232.9 204.4 234.6 204.6 236.2 C204.9 237.9 205.1 239.6 205.3 241.2 C205.4 242.9 205.6 244.6 205.7 246.2 C205.9 247.9 206.1 249.6 206.2 251.2 C206.4 252.9 206.5 254.6 206.6 256.2 C206.7 257.9 206.8 259.6 206.9 261.2 C207.0 262.9 207.1 264.6 207.1 266.2 C207.2 267.9 207.2 269.6 207.2 271.2 C207.2 272.9 207.1 274.6 207.0 276.2 C207.0 277.9 206.5 279.6 206.8 281.2 C207.2 282.9 208.2 284.6 208.9 286.2 C209.6 287.9 210.2 289.6 210.9 291.2 C211.5 292.9 212.1 294.6 212.6 296.2 C213.2 297.9 213.8 299.6 214.2 301.2 C214.6 302.9 214.8 304.6 215.0 306.2 C215.3 307.9 215.7 309.6 215.9 311.2 C216.2 312.9 216.3 314.6 216.4 316.2 C216.4 317.9 216.5 319.6 216.5 321.2 C216.4 322.9 216.3 324.6 215.9 326.2 C215.6 327.9 214.7 329.6 214.4 331.2 C214.0 332.9 214.1 334.6 213.9 336.2 C213.8 337.9 213.6 339.6 213.5 341.2 C213.4 342.9 213.1 344.6 213.1 346.2 C213.0 347.9 213.0 349.6 213.0 351.2 C213.0 352.9 213.0 354.6 213.0 356.2 C212.9 357.9 212.9 359.6 212.9 361.2 C212.9 362.9 212.9 364.6 213.0 366.2 C213.1 367.9 213.2 369.6 213.4 371.2 C213.5 372.9 213.6 374.6 213.7 376.2 C213.8 377.9 213.9 379.6 214.0 381.2 C214.1 382.9 214.1 384.6 214.1 386.2 C214.2 387.9 214.3 389.6 214.3 391.2 C214.4 392.9 214.6 394.6 214.6 396.2 C214.6 397.9 214.5 399.6 214.4 401.2 C214.3 402.9 214.2 404.6 214.1 406.2 C214.0 407.9 213.9 409.6 213.8 411.2 C213.7 412.9 213.5 414.6 213.4 416.2 C213.3 417.9 213.1 419.6 213.0 421.2 C212.8 422.9 212.7 424.6 212.5 426.2 C212.4 427.9 212.1 429.6 211.9 431.2 C211.8 432.9 211.6 434.6 211.6 436.2 C211.6 437.9 211.5 439.6 211.8 441.2 C212.2 442.9 213.1 444.6 213.5 446.2 C213.8 447.9 213.9 449.6 214.0 451.2 C214.1 452.9 214.0 454.6 214.0 456.2 C214.0 457.9 214.0 459.6 214.0 461.2 C214.0 462.9 214.0 465.4 214.0 466.2" stroke="#8e3d2c" stroke-width="0.7" fill="none" opacity="0.9"/><path d="M199.7 186.7 C199.7 187.5 199.7 190.0 199.7 191.7 C199.7 193.3 199.7 195.0 199.7 196.7 C199.7 198.3 199.6 200.0 199.7 201.7 C199.8 203.3 199.8 205.0 200.1 206.7 C200.3 208.3 200.6 210.0 201.0 211.7 C201.3 213.3 201.6 215.0 202.1 216.7 C202.5 218.3 203.2 220.0 203.7 221.7 C204.2 223.3 204.7 225.0 205.1 226.7 C205.5 228.3 205.7 230.0 206.0 231.7 C206.3 233.3 206.6 235.0 206.9 236.7 C207.1 238.3 207.3 240.0 207.5 241.7 C207.6 243.3 207.8 245.0 207.9 246.7 C208.1 248.3 208.2 250.0 208.4 251.7 C208.5 253.3 208.6 255.0 208.7 256.7 C208.8 258.3 208.9 260.0 209.0 261.7 C209.1 263.3 209.2 265.0 209.2 266.7 C209.3 268.3 209.3 270.0 209.3 271.7 C209.3 273.3 209.2 275.0 209.1 276.7 C209.1 278.3 208.7 280.0 209.0 281.7 C209.3 283.3 210.3 285.0 210.9 286.7 C211.6 288.3 212.2 290.0 212.8 291.7 C213.4 293.3 213.9 295.0 214.5 296.7 C215.0 298.3 215.6 300.0 216.0 301.7 C216.3 303.3 216.5 305.0 216.7 306.7 C217.0 308.3 217.4 310.0 217.6 311.7 C217.8 313.3 217.9 315.0 218.0 316.7 C218.1 318.3 218.2 320.0 218.1 321.7 C218.0 323.3 217.9 325.0 217.6 326.7 C217.2 328.3 216.4 330.0 216.1 331.7 C215.8 333.3 215.8 335.0 215.7 336.7 C215.5 338.3 215.4 340.0 215.3 341.7 C215.1 343.3 214.9 345.0 214.9 346.7 C214.8 348.3 214.8 350.0 214.8 351.7 C214.8 353.3 214.8 355.0 214.8 356.7 C214.8 358.3 214.7 360.0 214.7 361.7 C214.7 363.3 214.8 365.0 214.8 366.7 C214.9 368.3 215.0 370.0 215.1 371.7 C215.2 373.3 215.3 375.0 215.4 376.7 C215.5 378.3 215.7 380.0 215.7 381.7 C215.8 383.3 215.8 385.0 215.9 386.7 C215.9 388.3 216.0 390.0 216.1 391.7 C216.1 393.3 216.3 395.0 216.3 396.7 C216.3 398.3 216.2 400.0 216.1 401.7 C216.0 403.3 215.9 405.0 215.8 406.7 C215.7 408.3 215.7 410.0 215.6 411.7 C215.4 413.3 215.3 415.0 215.2 416.7 C215.0 418.3 214.9 420.0 214.8 421.7 C214.6 423.3 214.5 425.0 214.4 426.7 C214.2 428.3 213.9 430.0 213.8 431.7 C213.6 433.3 213.4 435.0 213.4 436.7 C213.4 438.3 213.4 440.0 213.7 441.7 C214.0 443.3 214.9 445.0 215.3 446.7 C215.6 448.3 215.7 450.0 215.8 451.7 C215.9 453.3 215.8 455.0 215.8 456.7 C215.8 458.3 215.8 460.0 215.8 461.7 C215.8 463.3 215.8 465.8 215.8 466.7" stroke="#96412f" stroke-width="1.0" fill="none" opacity="0.6"/><path d="M201.5 187.0 C201.5 187.8 201.5 190.3 201.5 192.0 C201.5 193.6 201.5 195.3 201.5 197.0 C201.5 198.6 201.5 200.3 201.5 202.0 C201.6 203.6 201.7 205.3 201.9 207.0 C202.1 208.6 202.4 210.3 202.7 212.0 C203.1 213.6 203.4 215.3 203.8 217.0 C204.3 218.6 204.9 220.3 205.4 222.0 C205.9 223.6 206.4 225.3 206.8 227.0 C207.1 228.6 207.3 230.3 207.6 232.0 C207.9 233.6 208.2 235.3 208.4 237.0 C208.7 238.6 208.8 240.3 209.0 242.0 C209.2 243.6 209.3 245.3 209.4 247.0 C209.6 248.6 209.8 250.3 209.9 252.0 C210.0 253.6 210.1 255.3 210.2 257.0 C210.3 258.6 210.4 260.3 210.5 262.0 C210.6 263.6 210.7 265.3 210.7 267.0 C210.8 268.6 210.8 270.3 210.8 272.0 C210.8 273.6 210.7 275.3 210.6 277.0 C210.6 278.6 210.2 280.3 210.5 282.0 C210.7 283.6 211.8 285.3 212.4 287.0 C213.0 288.6 213.6 290.3 214.2 292.0 C214.8 293.6 215.3 295.3 215.8 297.0 C216.3 298.6 216.8 300.3 217.2 302.0 C217.6 303.6 217.7 305.3 218.0 307.0 C218.2 308.6 218.6 310.3 218.8 312.0 C219.0 313.6 219.1 315.3 219.2 317.0 C219.3 318.6 219.3 320.3 219.3 322.0 C219.2 323.6 219.1 325.3 218.7 327.0 C218.4 328.6 217.6 330.3 217.3 332.0 C217.0 333.6 217.1 335.3 216.9 337.0 C216.8 338.6 216.7 340.3 216.5 342.0 C216.4 343.6 216.2 345.3 216.1 347.0 C216.1 348.6 216.1 350.3 216.1 352.0 C216.1 353.6 216.1 355.3 216.1 357.0 C216.1 358.6 216.0 360.3 216.0 362.0 C216.0 363.6 216.0 365.3 216.1 367.0 C216.2 368.6 216.3 370.3 216.4 372.0 C216.5 373.6 216.6 375.3 216.7 377.0 C216.8 378.6 216.9 380.3 217.0 382.0 C217.0 383.6 217.1 385.3 217.1 387.0 C217.2 388.6 217.2 390.3 217.3 392.0 C217.3 393.6 217.5 395.3 217.5 397.0 C217.5 398.6 217.4 400.3 217.3 402.0 C217.2 403.6 217.1 405.3 217.0 407.0 C216.9 408.6 216.9 410.3 216.8 412.0 C216.7 413.6 216.5 415.3 216.4 417.0 C216.3 418.6 216.2 420.3 216.0 422.0 C215.9 423.6 215.8 425.3 215.6 427.0 C215.5 428.6 215.2 430.3 215.1 432.0 C215.0 433.6 214.8 435.3 214.8 437.0 C214.7 438.6 214.7 440.3 215.0 442.0 C215.3 443.6 216.2 445.3 216.5 447.0 C216.9 448.6 216.9 450.3 217.0 452.0 C217.1 453.6 217.0 455.3 217.0 457.0 C217.0 458.6 217.0 460.3 217.0 462.0 C217.0 463.6 217.0 466.1 217.0 467.0" stroke="#c67452" stroke-width="0.7" fill="none" opacity="0.9"/><path d="M203.6 187.3 C203.6 188.1 203.6 190.6 203.6 192.3 C203.6 193.9 203.6 195.6 203.6 197.3 C203.6 198.9 203.5 200.6 203.6 202.3 C203.7 203.9 203.7 205.6 203.9 207.3 C204.1 208.9 204.4 210.6 204.8 212.3 C205.1 213.9 205.4 215.6 205.8 217.3 C206.2 218.9 206.8 220.6 207.3 222.3 C207.8 223.9 208.3 225.6 208.6 227.3 C209.0 228.9 209.1 230.6 209.4 232.3 C209.7 233.9 210.0 235.6 210.2 237.3 C210.4 238.9 210.6 240.6 210.8 242.3 C210.9 243.9 211.0 245.6 211.2 247.3 C211.3 248.9 211.5 250.6 211.6 252.3 C211.7 253.9 211.8 255.6 211.9 257.3 C212.0 258.9 212.1 260.6 212.2 262.3 C212.2 263.9 212.4 265.6 212.4 267.3 C212.4 268.9 212.5 270.6 212.5 272.3 C212.4 273.9 212.4 275.6 212.3 277.3 C212.2 278.9 211.9 280.6 212.1 282.3 C212.4 283.9 213.4 285.6 214.0 287.3 C214.6 288.9 215.2 290.6 215.8 292.3 C216.3 293.9 216.8 295.6 217.3 297.3 C217.7 298.9 218.3 300.6 218.6 302.3 C219.0 303.9 219.1 305.6 219.3 307.3 C219.6 308.9 219.9 310.6 220.1 312.3 C220.3 313.9 220.4 315.6 220.5 317.3 C220.6 318.9 220.6 320.6 220.6 322.3 C220.5 323.9 220.4 325.6 220.1 327.3 C219.8 328.9 219.0 330.6 218.7 332.3 C218.4 333.9 218.5 335.6 218.3 337.3 C218.2 338.9 218.1 340.6 218.0 342.3 C217.8 343.9 217.6 345.6 217.6 347.3 C217.5 348.9 217.6 350.6 217.6 352.3 C217.6 353.9 217.6 355.6 217.5 357.3 C217.5 358.9 217.5 360.6 217.5 362.3 C217.5 363.9 217.5 365.6 217.6 367.3 C217.6 368.9 217.7 370.6 217.8 372.3 C217.9 373.9 218.0 375.6 218.1 377.3 C218.2 378.9 218.3 380.6 218.4 382.3 C218.4 383.9 218.4 385.6 218.5 387.3 C218.5 388.9 218.6 390.6 218.6 392.3 C218.7 393.9 218.9 395.6 218.9 397.3 C218.9 398.9 218.8 400.6 218.7 402.3 C218.6 403.9 218.5 405.6 218.4 407.3 C218.3 408.9 218.3 410.6 218.2 412.3 C218.1 413.9 217.9 415.6 217.8 417.3 C217.7 418.9 217.6 420.6 217.5 422.3 C217.4 423.9 217.3 425.6 217.1 427.3 C217.0 428.9 216.7 430.6 216.6 432.3 C216.4 433.9 216.3 435.6 216.3 437.3 C216.3 438.9 216.2 440.6 216.5 442.3 C216.8 443.9 217.6 445.6 218.0 447.3 C218.3 448.9 218.4 450.6 218.4 452.3 C218.5 453.9 218.4 455.6 218.4 457.3 C218.4 458.9 218.4 460.6 218.4 462.3 C218.4 463.9 218.4 466.4 218.4 467.3" stroke="#cb8160" stroke-width="2.4" fill="none" opacity="0.6"/><path d="M205.2 187.5 C205.2 188.3 205.2 190.8 205.2 192.5 C205.2 194.1 205.2 195.8 205.2 197.5 C205.2 199.1 205.1 200.8 205.2 202.5 C205.2 204.1 205.3 205.8 205.5 207.5 C205.7 209.1 206.0 210.8 206.3 212.5 C206.6 214.1 206.9 215.8 207.3 217.5 C207.7 219.1 208.3 220.8 208.7 222.5 C209.2 224.1 209.7 225.8 210.0 227.5 C210.4 229.1 210.5 230.8 210.8 232.5 C211.0 234.1 211.3 235.8 211.6 237.5 C211.8 239.1 211.9 240.8 212.1 242.5 C212.2 244.1 212.4 245.8 212.5 247.5 C212.6 249.1 212.8 250.8 212.9 252.5 C213.0 254.1 213.1 255.8 213.2 257.5 C213.3 259.1 213.4 260.8 213.4 262.5 C213.5 264.1 213.6 265.8 213.7 267.5 C213.7 269.1 213.7 270.8 213.7 272.5 C213.7 274.1 213.6 275.8 213.6 277.5 C213.5 279.1 213.1 280.8 213.4 282.5 C213.7 284.1 214.7 285.8 215.3 287.5 C215.9 289.1 216.4 290.8 216.9 292.5 C217.5 294.1 217.9 295.8 218.4 297.5 C218.8 299.1 219.3 300.8 219.7 302.5 C220.0 304.1 220.1 305.8 220.4 307.5 C220.6 309.1 221.0 310.8 221.1 312.5 C221.3 314.1 221.4 315.8 221.5 317.5 C221.6 319.1 221.6 320.8 221.6 322.5 C221.5 324.1 221.4 325.8 221.1 327.5 C220.8 329.1 220.0 330.8 219.7 332.5 C219.5 334.1 219.5 335.8 219.4 337.5 C219.3 339.1 219.2 340.8 219.0 342.5 C218.9 344.1 218.7 345.8 218.7 347.5 C218.6 349.1 218.7 350.8 218.7 352.5 C218.7 354.1 218.7 355.8 218.6 357.5 C218.6 359.1 218.6 360.8 218.6 362.5 C218.6 364.1 218.6 365.8 218.7 367.5 C218.7 369.1 218.8 370.8 218.9 372.5 C219.0 374.1 219.1 375.8 219.2 377.5 C219.3 379.1 219.4 380.8 219.4 382.5 C219.5 384.1 219.5 385.8 219.5 387.5 C219.6 389.1 219.6 390.8 219.7 392.5 C219.7 394.1 219.9 395.8 219.9 397.5 C219.9 399.1 219.8 400.8 219.7 402.5 C219.6 404.1 219.5 405.8 219.4 407.5 C219.3 409.1 219.3 410.8 219.2 412.5 C219.1 414.1 219.0 415.8 218.9 417.5 C218.8 419.1 218.7 420.8 218.6 422.5 C218.5 424.1 218.3 425.8 218.2 427.5 C218.1 429.1 217.8 430.8 217.7 432.5 C217.6 434.1 217.4 435.8 217.4 437.5 C217.4 439.1 217.4 440.8 217.6 442.5 C217.9 444.1 218.7 445.8 219.0 447.5 C219.3 449.1 219.4 450.8 219.5 452.5 C219.6 454.1 219.5 455.8 219.5 457.5 C219.5 459.1 219.5 460.8 219.5 462.5 C219.5 464.1 219.5 466.6 219.5 467.5" stroke="#a14b36" stroke-width="1.0" fill="none" opacity="0.9"/><path d="M207.5 187.7 C207.5 188.6 207.5 191.1 207.5 192.7 C207.5 194.4 207.5 196.1 207.5 197.7 C207.5 199.4 207.5 201.1 207.5 202.7 C207.6 204.4 207.6 206.1 207.8 207.7 C208.0 209.4 208.3 211.1 208.6 212.7 C208.9 214.4 209.1 216.1 209.5 217.7 C209.9 219.4 210.5 221.1 210.9 222.7 C211.3 224.4 211.8 226.1 212.1 227.7 C212.4 229.4 212.6 231.1 212.8 232.7 C213.1 234.4 213.4 236.1 213.6 237.7 C213.8 239.4 213.9 241.1 214.1 242.7 C214.2 244.4 214.3 246.1 214.5 247.7 C214.6 249.4 214.7 251.1 214.9 252.7 C215.0 254.4 215.1 256.1 215.1 257.7 C215.2 259.4 215.3 261.1 215.4 262.7 C215.4 264.4 215.5 266.1 215.6 267.7 C215.6 269.4 215.6 271.1 215.6 272.7 C215.6 274.4 215.5 276.1 215.5 277.7 C215.4 279.4 215.1 281.1 215.3 282.7 C215.6 284.4 216.6 286.1 217.1 287.7 C217.7 289.4 218.2 291.1 218.7 292.7 C219.2 294.4 219.6 296.1 220.0 297.7 C220.5 299.4 220.9 301.1 221.3 302.7 C221.6 304.4 221.7 306.1 221.9 307.7 C222.1 309.4 222.5 311.1 222.7 312.7 C222.8 314.4 222.9 316.1 223.0 317.7 C223.1 319.4 223.1 321.1 223.1 322.7 C223.0 324.4 222.9 326.1 222.6 327.7 C222.3 329.4 221.6 331.1 221.3 332.7 C221.0 334.4 221.1 336.1 221.0 337.7 C220.9 339.4 220.8 341.1 220.6 342.7 C220.5 344.4 220.4 346.1 220.3 347.7 C220.2 349.4 220.3 351.1 220.3 352.7 C220.3 354.4 220.3 356.1 220.3 357.7 C220.3 359.4 220.2 361.1 220.2 362.7 C220.2 364.4 220.2 366.1 220.3 367.7 C220.3 369.4 220.5 371.1 220.5 372.7 C220.6 374.4 220.7 376.1 220.8 377.7 C220.9 379.4 221.0 381.1 221.0 382.7 C221.1 384.4 221.1 386.1 221.1 387.7 C221.1 389.4 221.2 391.1 221.2 392.7 C221.3 394.4 221.5 396.1 221.5 397.7 C221.5 399.4 221.4 401.1 221.3 402.7 C221.2 404.4 221.1 406.1 221.0 407.7 C220.9 409.4 220.9 411.1 220.8 412.7 C220.7 414.4 220.6 416.1 220.5 417.7 C220.4 419.4 220.3 421.1 220.2 422.7 C220.1 424.4 220.0 426.1 219.9 427.7 C219.7 429.4 219.5 431.1 219.4 432.7 C219.3 434.4 219.1 436.1 219.1 437.7 C219.1 439.4 219.1 441.1 219.3 442.7 C219.6 444.4 220.4 446.1 220.7 447.7 C220.9 449.4 221.0 451.1 221.1 452.7 C221.2 454.4 221.1 456.1 221.1 457.7 C221.1 459.4 221.1 461.1 221.1 462.7 C221.1 464.4 221.1 466.9 221.1 467.7" stroke="#96412f" stroke-width="1.8" fill="none" opacity="0.9"/><path d="M210.1 188.0 C210.1 188.9 210.1 191.4 210.1 193.0 C210.1 194.7 210.1 196.4 210.1 198.0 C210.1 199.7 210.1 201.4 210.1 203.0 C210.2 204.7 210.3 206.4 210.4 208.0 C210.6 209.7 210.9 211.4 211.1 213.0 C211.4 214.7 211.7 216.4 212.0 218.0 C212.4 219.7 212.9 221.4 213.3 223.0 C213.7 224.7 214.2 226.4 214.5 228.0 C214.8 229.7 214.9 231.4 215.1 233.0 C215.4 234.7 215.6 236.4 215.8 238.0 C216.0 239.7 216.2 241.4 216.3 243.0 C216.4 244.7 216.5 246.4 216.7 248.0 C216.8 249.7 216.9 251.4 217.0 253.0 C217.1 254.7 217.2 256.4 217.3 258.0 C217.4 259.7 217.4 261.4 217.5 263.0 C217.6 264.7 217.7 266.4 217.7 268.0 C217.8 269.7 217.8 271.4 217.8 273.0 C217.7 274.7 217.7 276.4 217.6 278.0 C217.6 279.7 217.2 281.4 217.5 283.0 C217.8 284.7 218.7 286.4 219.2 288.0 C219.8 289.7 220.3 291.4 220.7 293.0 C221.2 294.7 221.5 296.4 221.9 298.0 C222.3 299.7 222.7 301.4 223.0 303.0 C223.3 304.7 223.4 306.4 223.6 308.0 C223.9 309.7 224.2 311.4 224.4 313.0 C224.5 314.7 224.6 316.4 224.7 318.0 C224.7 319.7 224.8 321.4 224.7 323.0 C224.7 324.7 224.5 326.4 224.3 328.0 C224.0 329.7 223.3 331.4 223.1 333.0 C222.8 334.7 222.9 336.4 222.8 338.0 C222.7 339.7 222.6 341.4 222.4 343.0 C222.3 344.7 222.2 346.4 222.1 348.0 C222.1 349.7 222.1 351.4 222.1 353.0 C222.1 354.7 222.2 356.4 222.1 358.0 C222.1 359.7 222.1 361.4 222.1 363.0 C222.1 364.7 222.1 366.4 222.1 368.0 C222.2 369.7 222.3 371.4 222.4 373.0 C222.4 374.7 222.5 376.4 222.6 378.0 C222.7 379.7 222.7 381.4 222.8 383.0 C222.8 384.7 222.8 386.4 222.9 388.0 C222.9 389.7 222.9 391.4 223.0 393.0 C223.0 394.7 223.2 396.4 223.2 398.0 C223.2 399.7 223.1 401.4 223.0 403.0 C222.9 404.7 222.8 406.4 222.7 408.0 C222.7 409.7 222.7 411.4 222.6 413.0 C222.5 414.7 222.4 416.4 222.3 418.0 C222.2 419.7 222.1 421.4 222.0 423.0 C221.9 424.7 221.8 426.4 221.7 428.0 C221.6 429.7 221.4 431.4 221.3 433.0 C221.2 434.7 221.0 436.4 221.0 438.0 C221.0 439.7 221.0 441.4 221.2 443.0 C221.5 444.7 222.2 446.4 222.5 448.0 C222.7 449.7 222.8 451.4 222.9 453.0 C223.0 454.7 222.9 456.4 222.9 458.0 C222.9 459.7 222.9 461.4 222.9 463.0 C222.9 464.7 222.9 467.2 222.9 468.0" stroke="#c67452" stroke-width="1.3" fill="none" opacity="0.75"/><path d="M212.4 188.3 C212.4 189.1 212.4 191.6 212.4 193.3 C212.4 194.9 212.4 196.6 212.4 198.3 C212.4 199.9 212.3 201.6 212.4 203.3 C212.4 204.9 212.5 206.6 212.6 208.3 C212.8 209.9 213.1 211.6 213.3 213.3 C213.6 214.9 213.8 216.6 214.2 218.3 C214.5 219.9 215.0 221.6 215.4 223.3 C215.8 224.9 216.2 226.6 216.4 228.3 C216.7 229.9 216.9 231.6 217.1 233.3 C217.3 234.9 217.6 236.6 217.7 238.3 C217.9 239.9 218.1 241.6 218.2 243.3 C218.3 244.9 218.4 246.6 218.5 248.3 C218.7 249.9 218.8 251.6 218.9 253.3 C219.0 254.9 219.1 256.6 219.1 258.3 C219.2 259.9 219.3 261.6 219.3 263.3 C219.4 264.9 219.5 266.6 219.5 268.3 C219.6 269.9 219.6 271.6 219.6 273.3 C219.6 274.9 219.5 276.6 219.4 278.3 C219.4 279.9 219.1 281.6 219.3 283.3 C219.6 284.9 220.5 286.6 221.0 288.3 C221.5 289.9 222.0 291.6 222.4 293.3 C222.8 294.9 223.1 296.6 223.5 298.3 C223.9 299.9 224.3 301.6 224.5 303.3 C224.8 304.9 224.9 306.6 225.1 308.3 C225.3 309.9 225.6 311.6 225.8 313.3 C226.0 314.9 226.0 316.6 226.1 318.3 C226.2 319.9 226.2 321.6 226.1 323.3 C226.1 324.9 226.0 326.6 225.7 328.3 C225.4 329.9 224.8 331.6 224.6 333.3 C224.3 334.9 224.4 336.6 224.3 338.3 C224.2 339.9 224.1 341.6 224.0 343.3 C223.9 344.9 223.7 346.6 223.7 348.3 C223.6 349.9 223.7 351.6 223.7 353.3 C223.7 354.9 223.7 356.6 223.7 358.3 C223.7 359.9 223.6 361.6 223.6 363.3 C223.6 364.9 223.6 366.6 223.7 368.3 C223.7 369.9 223.8 371.6 223.9 373.3 C224.0 374.9 224.0 376.6 224.1 378.3 C224.2 379.9 224.2 381.6 224.3 383.3 C224.3 384.9 224.3 386.6 224.4 388.3 C224.4 389.9 224.4 391.6 224.5 393.3 C224.5 394.9 224.7 396.6 224.7 398.3 C224.7 399.9 224.6 401.6 224.5 403.3 C224.4 404.9 224.3 406.6 224.2 408.3 C224.2 409.9 224.1 411.6 224.1 413.3 C224.0 414.9 223.9 416.6 223.8 418.3 C223.7 419.9 223.6 421.6 223.6 423.3 C223.5 424.9 223.4 426.6 223.3 428.3 C223.2 429.9 223.0 431.6 222.9 433.3 C222.8 434.9 222.6 436.6 222.6 438.3 C222.6 439.9 222.6 441.6 222.8 443.3 C223.1 444.9 223.7 446.6 224.0 448.3 C224.3 449.9 224.3 451.6 224.4 453.3 C224.5 454.9 224.4 456.6 224.4 458.3 C224.4 459.9 224.4 461.6 224.4 463.3 C224.4 464.9 224.4 467.4 224.4 468.3" stroke="#c67452" stroke-width="1.0" fill="none" opacity="0.6"/><path d="M213.8 188.4 C213.8 189.2 213.8 191.7 213.8 193.4 C213.8 195.1 213.8 196.7 213.8 198.4 C213.8 200.1 213.7 201.7 213.8 203.4 C213.8 205.1 213.9 206.7 214.0 208.4 C214.2 210.1 214.4 211.7 214.7 213.4 C214.9 215.1 215.1 216.7 215.5 218.4 C215.8 220.1 216.3 221.7 216.6 223.4 C217.0 225.1 217.4 226.7 217.7 228.4 C218.0 230.1 218.1 231.7 218.3 233.4 C218.5 235.1 218.8 236.7 218.9 238.4 C219.1 240.1 219.2 241.7 219.4 243.4 C219.5 245.1 219.6 246.7 219.7 248.4 C219.8 250.1 219.9 251.7 220.0 253.4 C220.1 255.1 220.2 256.7 220.3 258.4 C220.4 260.1 220.4 261.7 220.5 263.4 C220.5 265.1 220.6 266.7 220.6 268.4 C220.7 270.1 220.7 271.7 220.7 273.4 C220.7 275.1 220.6 276.7 220.6 278.4 C220.5 280.1 220.2 281.7 220.5 283.4 C220.7 285.1 221.6 286.7 222.1 288.4 C222.6 290.1 223.0 291.7 223.4 293.4 C223.8 295.1 224.1 296.7 224.5 298.4 C224.8 300.1 225.2 301.7 225.5 303.4 C225.7 305.1 225.8 306.7 226.0 308.4 C226.2 310.1 226.5 311.7 226.7 313.4 C226.9 315.1 226.9 316.7 227.0 318.4 C227.0 320.1 227.1 321.7 227.0 323.4 C226.9 325.1 226.8 326.7 226.6 328.4 C226.3 330.1 225.7 331.7 225.5 333.4 C225.3 335.1 225.3 336.7 225.2 338.4 C225.1 340.1 225.0 341.7 224.9 343.4 C224.8 345.1 224.7 346.7 224.6 348.4 C224.6 350.1 224.7 351.7 224.7 353.4 C224.7 355.1 224.7 356.7 224.7 358.4 C224.7 360.1 224.6 361.7 224.6 363.4 C224.6 365.1 224.6 366.7 224.7 368.4 C224.7 370.1 224.8 371.7 224.9 373.4 C224.9 375.1 225.0 376.7 225.1 378.4 C225.1 380.1 225.2 381.7 225.2 383.4 C225.3 385.1 225.3 386.7 225.3 388.4 C225.3 390.1 225.3 391.7 225.4 393.4 C225.4 395.1 225.6 396.7 225.6 398.4 C225.6 400.1 225.5 401.7 225.4 403.4 C225.3 405.1 225.2 406.7 225.1 408.4 C225.1 410.1 225.1 411.7 225.0 413.4 C224.9 415.1 224.8 416.7 224.8 418.4 C224.7 420.1 224.6 421.7 224.5 423.4 C224.4 425.1 224.4 426.7 224.3 428.4 C224.1 430.1 224.0 431.7 223.9 433.4 C223.8 435.1 223.6 436.7 223.6 438.4 C223.6 440.1 223.6 441.7 223.8 443.4 C224.0 445.1 224.7 446.7 225.0 448.4 C225.2 450.1 225.3 451.7 225.4 453.4 C225.4 455.1 225.4 456.7 225.4 458.4 C225.4 460.1 225.4 461.7 225.4 463.4 C225.4 465.1 225.4 467.6 225.4 468.4" stroke="#9b4734" stroke-width="2.4" fill="none" opacity="0.45"/><path d="M215.5 188.6 C215.5 189.4 215.5 191.9 215.5 193.6 C215.5 195.2 215.5 196.9 215.5 198.6 C215.5 200.2 215.5 201.9 215.5 203.6 C215.6 205.2 215.6 206.9 215.8 208.6 C215.9 210.2 216.2 211.9 216.4 213.6 C216.6 215.2 216.9 216.9 217.2 218.6 C217.5 220.2 217.9 221.9 218.3 223.6 C218.6 225.2 219.0 226.9 219.3 228.6 C219.5 230.2 219.7 231.9 219.9 233.6 C220.1 235.2 220.3 236.9 220.5 238.6 C220.6 240.2 220.7 241.9 220.9 243.6 C221.0 245.2 221.1 246.9 221.2 248.6 C221.3 250.2 221.4 251.9 221.5 253.6 C221.6 255.2 221.7 256.9 221.7 258.6 C221.8 260.2 221.9 261.9 221.9 263.6 C222.0 265.2 222.1 266.9 222.1 268.6 C222.1 270.2 222.1 271.9 222.1 273.6 C222.1 275.2 222.1 276.9 222.0 278.6 C222.0 280.2 221.7 281.9 221.9 283.6 C222.2 285.2 223.0 286.9 223.5 288.6 C224.0 290.2 224.4 291.9 224.8 293.6 C225.2 295.2 225.4 296.9 225.8 298.6 C226.1 300.2 226.4 301.9 226.7 303.6 C226.9 305.2 227.0 306.9 227.2 308.6 C227.4 310.2 227.7 311.9 227.8 313.6 C228.0 315.2 228.1 316.9 228.1 318.6 C228.2 320.2 228.2 321.9 228.1 323.6 C228.1 325.2 228.0 326.9 227.7 328.6 C227.5 330.2 226.9 331.9 226.7 333.6 C226.4 335.2 226.5 336.9 226.4 338.6 C226.3 340.2 226.2 341.9 226.1 343.6 C226.1 345.2 225.9 346.9 225.9 348.6 C225.8 350.2 225.9 351.9 225.9 353.6 C225.9 355.2 225.9 356.9 225.9 358.6 C225.9 360.2 225.9 361.9 225.9 363.6 C225.9 365.2 225.9 366.9 225.9 368.6 C225.9 370.2 226.0 371.9 226.1 373.6 C226.2 375.2 226.2 376.9 226.3 378.6 C226.3 380.2 226.4 381.9 226.4 383.6 C226.5 385.2 226.5 386.9 226.5 388.6 C226.5 390.2 226.5 391.9 226.6 393.6 C226.6 395.2 226.8 396.9 226.8 398.6 C226.8 400.2 226.7 401.9 226.6 403.6 C226.5 405.2 226.4 406.9 226.3 408.6 C226.3 410.2 226.3 411.9 226.2 413.6 C226.1 415.2 226.0 416.9 226.0 418.6 C225.9 420.2 225.8 421.9 225.7 423.6 C225.7 425.2 225.6 426.9 225.5 428.6 C225.4 430.2 225.2 431.9 225.1 433.6 C225.0 435.2 224.9 436.9 224.9 438.6 C224.9 440.2 224.9 441.9 225.1 443.6 C225.3 445.2 225.9 446.9 226.2 448.6 C226.4 450.2 226.5 451.9 226.6 453.6 C226.6 455.2 226.6 456.9 226.6 458.6 C226.6 460.2 226.6 461.9 226.6 463.6 C226.6 465.2 226.6 467.7 226.6 468.6" stroke="#cb8160" stroke-width="1.0" fill="none" opacity="0.9"/><path d="M218.2 188.8 C218.2 189.6 218.2 192.1 218.2 193.8 C218.2 195.5 218.2 197.1 218.2 198.8 C218.2 200.5 218.2 202.1 218.2 203.8 C218.2 205.5 218.3 207.1 218.4 208.8 C218.6 210.5 218.8 212.1 219.0 213.8 C219.2 215.5 219.4 217.1 219.7 218.8 C220.0 220.5 220.4 222.1 220.7 223.8 C221.1 225.5 221.4 227.1 221.6 228.8 C221.9 230.5 222.0 232.1 222.2 233.8 C222.4 235.5 222.6 237.1 222.7 238.8 C222.9 240.5 223.0 242.1 223.1 243.8 C223.2 245.5 223.3 247.1 223.4 248.8 C223.5 250.5 223.6 252.1 223.7 253.8 C223.8 255.5 223.9 257.1 223.9 258.8 C224.0 260.5 224.0 262.1 224.1 263.8 C224.1 265.5 224.2 267.1 224.3 268.8 C224.3 270.5 224.3 272.1 224.3 273.8 C224.3 275.5 224.2 277.1 224.2 278.8 C224.2 280.5 223.8 282.1 224.1 283.8 C224.3 285.5 225.2 287.1 225.6 288.8 C226.1 290.5 226.5 292.1 226.8 293.8 C227.1 295.5 227.4 297.1 227.7 298.8 C227.9 300.5 228.3 302.1 228.5 303.8 C228.7 305.5 228.8 307.1 229.0 308.8 C229.1 310.5 229.4 312.1 229.6 313.8 C229.7 315.5 229.8 317.1 229.8 318.8 C229.9 320.5 229.9 322.1 229.8 323.8 C229.8 325.5 229.7 327.1 229.4 328.8 C229.2 330.5 228.7 332.1 228.4 333.8 C228.2 335.5 228.3 337.1 228.2 338.8 C228.1 340.5 228.1 342.1 228.0 343.8 C227.9 345.5 227.8 347.1 227.7 348.8 C227.7 350.5 227.8 352.1 227.8 353.8 C227.8 355.5 227.8 357.1 227.8 358.8 C227.8 360.5 227.8 362.1 227.8 363.8 C227.7 365.5 227.7 367.1 227.8 368.8 C227.8 370.5 227.9 372.1 227.9 373.8 C228.0 375.5 228.0 377.1 228.1 378.8 C228.1 380.5 228.2 382.1 228.2 383.8 C228.3 385.5 228.2 387.1 228.3 388.8 C228.3 390.5 228.3 392.1 228.3 393.8 C228.4 395.5 228.5 397.1 228.5 398.8 C228.5 400.5 228.4 402.1 228.4 403.8 C228.3 405.5 228.2 407.1 228.1 408.8 C228.0 410.5 228.0 412.1 228.0 413.8 C227.9 415.5 227.9 417.1 227.8 418.8 C227.7 420.5 227.7 422.1 227.6 423.8 C227.5 425.5 227.5 427.1 227.4 428.8 C227.3 430.5 227.1 432.1 227.1 433.8 C227.0 435.5 226.8 437.1 226.8 438.8 C226.8 440.5 226.8 442.1 227.0 443.8 C227.2 445.5 227.8 447.1 228.0 448.8 C228.2 450.5 228.3 452.1 228.4 453.8 C228.5 455.5 228.4 457.1 228.4 458.8 C228.4 460.5 228.4 462.1 228.4 463.8 C228.4 465.5 228.4 468.0 228.4 468.8" stroke="#9b4734" stroke-width="1.3" fill="none" opacity="0.75"/><path d="M220.8 189.0 C220.8 189.8 220.8 192.3 220.8 194.0 C220.8 195.7 220.8 197.3 220.8 199.0 C220.8 200.7 220.7 202.3 220.8 204.0 C220.8 205.7 220.9 207.3 221.0 209.0 C221.1 210.7 221.3 212.3 221.5 214.0 C221.7 215.7 221.9 217.3 222.2 219.0 C222.4 220.7 222.8 222.3 223.1 224.0 C223.4 225.7 223.7 227.3 224.0 229.0 C224.2 230.7 224.3 232.3 224.5 234.0 C224.6 235.7 224.8 237.3 225.0 239.0 C225.1 240.7 225.2 242.3 225.3 244.0 C225.4 245.7 225.5 247.3 225.6 249.0 C225.7 250.7 225.8 252.3 225.9 254.0 C225.9 255.7 226.0 257.3 226.1 259.0 C226.1 260.7 226.2 262.3 226.2 264.0 C226.3 265.7 226.3 267.3 226.4 269.0 C226.4 270.7 226.4 272.3 226.4 274.0 C226.4 275.7 226.3 277.3 226.3 279.0 C226.3 280.7 226.0 282.3 226.2 284.0 C226.4 285.7 227.3 287.3 227.7 289.0 C228.1 290.7 228.5 292.3 228.8 294.0 C229.1 295.7 229.2 297.3 229.5 299.0 C229.7 300.7 230.0 302.3 230.2 304.0 C230.4 305.7 230.5 307.3 230.7 309.0 C230.8 310.7 231.1 312.3 231.2 314.0 C231.4 315.7 231.4 317.3 231.5 319.0 C231.5 320.7 231.5 322.3 231.5 324.0 C231.4 325.7 231.3 327.3 231.1 329.0 C230.9 330.7 230.4 332.3 230.2 334.0 C230.0 335.7 230.0 337.3 230.0 339.0 C229.9 340.7 229.8 342.3 229.8 344.0 C229.7 345.7 229.6 347.3 229.5 349.0 C229.5 350.7 229.6 352.3 229.6 354.0 C229.6 355.7 229.6 357.3 229.6 359.0 C229.6 360.7 229.6 362.3 229.6 364.0 C229.6 365.7 229.5 367.3 229.6 369.0 C229.6 370.7 229.7 372.3 229.7 374.0 C229.8 375.7 229.8 377.3 229.9 379.0 C229.9 380.7 230.0 382.3 230.0 384.0 C230.0 385.7 230.0 387.3 230.0 389.0 C230.0 390.7 230.0 392.3 230.0 394.0 C230.1 395.7 230.2 397.3 230.2 399.0 C230.3 400.7 230.1 402.3 230.1 404.0 C230.0 405.7 229.9 407.3 229.8 409.0 C229.8 410.7 229.8 412.3 229.7 414.0 C229.7 415.7 229.6 417.3 229.6 419.0 C229.5 420.7 229.4 422.3 229.4 424.0 C229.3 425.7 229.3 427.3 229.2 429.0 C229.1 430.7 229.0 432.3 228.9 434.0 C228.8 435.7 228.7 437.3 228.7 439.0 C228.7 440.7 228.7 442.3 228.9 444.0 C229.1 445.7 229.6 447.3 229.8 449.0 C230.0 450.7 230.1 452.3 230.2 454.0 C230.2 455.7 230.2 457.3 230.2 459.0 C230.2 460.7 230.2 462.3 230.2 464.0 C230.2 465.7 230.2 468.2 230.2 469.0" stroke="#96412f" stroke-width="0.7" fill="none" opacity="0.6"/><path d="M223.5 189.2 C223.5 190.0 223.5 192.5 223.5 194.2 C223.5 195.8 223.5 197.5 223.5 199.2 C223.5 200.8 223.5 202.5 223.5 204.2 C223.6 205.8 223.6 207.5 223.7 209.2 C223.8 210.8 224.0 212.5 224.2 214.2 C224.4 215.8 224.5 217.5 224.8 219.2 C225.0 220.8 225.4 222.5 225.6 224.2 C225.9 225.8 226.2 227.5 226.4 229.2 C226.6 230.8 226.7 232.5 226.9 234.2 C227.0 235.8 227.2 237.5 227.3 239.2 C227.5 240.8 227.6 242.5 227.6 244.2 C227.7 245.8 227.8 247.5 227.9 249.2 C228.0 250.8 228.1 252.5 228.1 254.2 C228.2 255.8 228.3 257.5 228.3 259.2 C228.4 260.8 228.4 262.5 228.5 264.2 C228.5 265.8 228.6 267.5 228.6 269.2 C228.6 270.8 228.6 272.5 228.6 274.2 C228.6 275.8 228.6 277.5 228.5 279.2 C228.5 280.8 228.2 282.5 228.4 284.2 C228.7 285.8 229.5 287.5 229.9 289.2 C230.3 290.8 230.6 292.5 230.8 294.2 C231.1 295.8 231.2 297.5 231.5 299.2 C231.7 300.8 231.9 302.5 232.1 304.2 C232.3 305.8 232.3 307.5 232.5 309.2 C232.6 310.8 232.9 312.5 233.0 314.2 C233.1 315.8 233.2 317.5 233.2 319.2 C233.3 320.8 233.3 322.5 233.2 324.2 C233.1 325.8 233.1 327.5 232.9 329.2 C232.7 330.8 232.2 332.5 232.0 334.2 C231.8 335.8 231.9 337.5 231.8 339.2 C231.8 340.8 231.7 342.5 231.6 344.2 C231.6 345.8 231.5 347.5 231.5 349.2 C231.4 350.8 231.5 352.5 231.5 354.2 C231.5 355.8 231.6 357.5 231.6 359.2 C231.6 360.8 231.5 362.5 231.5 364.2 C231.5 365.8 231.5 367.5 231.5 369.2 C231.5 370.8 231.6 372.5 231.6 374.2 C231.7 375.8 231.7 377.5 231.7 379.2 C231.8 380.8 231.8 382.5 231.8 384.2 C231.8 385.8 231.8 387.5 231.8 389.2 C231.8 390.8 231.8 392.5 231.9 394.2 C231.9 395.8 232.1 397.5 232.1 399.2 C232.1 400.8 232.0 402.5 231.9 404.2 C231.8 405.8 231.7 407.5 231.6 409.2 C231.6 410.8 231.6 412.5 231.6 414.2 C231.5 415.8 231.5 417.5 231.4 419.2 C231.4 420.8 231.3 422.5 231.3 424.2 C231.2 425.8 231.2 427.5 231.1 429.2 C231.1 430.8 231.0 432.5 230.9 434.2 C230.8 435.8 230.7 437.5 230.7 439.2 C230.7 440.8 230.7 442.5 230.9 444.2 C231.0 445.8 231.5 447.5 231.7 449.2 C231.9 450.8 232.0 452.5 232.0 454.2 C232.1 455.8 232.0 457.5 232.0 459.2 C232.0 460.8 232.0 462.5 232.0 464.2 C232.0 465.8 232.0 468.3 232.0 469.2" stroke="#a14b36" stroke-width="0.7" fill="none" opacity="0.75"/><path d="M225.7 189.3 C225.7 190.1 225.7 192.6 225.7 194.3 C225.7 196.0 225.7 197.6 225.7 199.3 C225.7 201.0 225.6 202.6 225.7 204.3 C225.7 206.0 225.7 207.6 225.8 209.3 C225.9 211.0 226.1 212.6 226.3 214.3 C226.4 216.0 226.6 217.6 226.8 219.3 C227.1 221.0 227.4 222.6 227.6 224.3 C227.9 226.0 228.1 227.6 228.3 229.3 C228.5 231.0 228.6 232.6 228.7 234.3 C228.9 236.0 229.0 237.6 229.2 239.3 C229.3 241.0 229.4 242.6 229.5 244.3 C229.5 246.0 229.6 247.6 229.7 249.3 C229.8 251.0 229.8 252.6 229.9 254.3 C230.0 256.0 230.0 257.6 230.1 259.3 C230.1 261.0 230.2 262.6 230.2 264.3 C230.2 266.0 230.3 267.6 230.3 269.3 C230.4 271.0 230.4 272.6 230.4 274.3 C230.4 276.0 230.3 277.6 230.3 279.3 C230.3 281.0 230.0 282.6 230.2 284.3 C230.4 286.0 231.2 287.6 231.6 289.3 C231.9 291.0 232.2 292.6 232.4 294.3 C232.7 296.0 232.8 297.6 233.0 299.3 C233.2 301.0 233.4 302.6 233.6 304.3 C233.7 306.0 233.8 307.6 233.9 309.3 C234.0 311.0 234.3 312.6 234.4 314.3 C234.5 316.0 234.6 317.6 234.6 319.3 C234.6 321.0 234.6 322.6 234.6 324.3 C234.5 326.0 234.4 327.6 234.2 329.3 C234.0 331.0 233.6 332.6 233.4 334.3 C233.3 336.0 233.3 337.6 233.3 339.3 C233.2 341.0 233.2 342.6 233.1 344.3 C233.1 346.0 233.0 347.6 232.9 349.3 C232.9 351.0 233.0 352.6 233.0 354.3 C233.0 356.0 233.1 357.6 233.1 359.3 C233.1 361.0 233.0 362.6 233.0 364.3 C233.0 366.0 233.0 367.6 233.0 369.3 C233.0 371.0 233.1 372.6 233.1 374.3 C233.1 376.0 233.2 377.6 233.2 379.3 C233.2 381.0 233.3 382.6 233.3 384.3 C233.3 386.0 233.3 387.6 233.3 389.3 C233.3 391.0 233.2 392.6 233.3 394.3 C233.3 396.0 233.5 397.6 233.5 399.3 C233.5 401.0 233.4 402.6 233.3 404.3 C233.2 406.0 233.1 407.6 233.1 409.3 C233.0 411.0 233.0 412.6 233.0 414.3 C233.0 416.0 232.9 417.6 232.9 419.3 C232.9 421.0 232.8 422.6 232.8 424.3 C232.7 426.0 232.7 427.6 232.6 429.3 C232.6 431.0 232.5 432.6 232.4 434.3 C232.3 436.0 232.2 437.6 232.2 439.3 C232.2 441.0 232.2 442.6 232.4 444.3 C232.6 446.0 233.0 447.6 233.2 449.3 C233.4 451.0 233.4 452.6 233.5 454.3 C233.5 456.0 233.5 457.6 233.5 459.3 C233.5 461.0 233.5 462.6 233.5 464.3 C233.5 466.0 233.5 468.5 233.5 469.3" stroke="#b15a3e" stroke-width="1.0" fill="none" opacity="0.9"/><path d="M228.9 189.5 C228.9 190.3 228.9 192.8 228.9 194.5 C228.9 196.1 228.9 197.8 228.9 199.5 C228.9 201.1 228.9 202.8 228.9 204.5 C228.9 206.1 229.0 207.8 229.1 209.5 C229.2 211.1 229.3 212.8 229.4 214.5 C229.6 216.1 229.7 217.8 229.9 219.5 C230.1 221.1 230.4 222.8 230.6 224.5 C230.8 226.1 231.1 227.8 231.2 229.5 C231.4 231.1 231.5 232.8 231.6 234.5 C231.7 236.1 231.9 237.8 232.0 239.5 C232.1 241.1 232.1 242.8 232.2 244.5 C232.3 246.1 232.3 247.8 232.4 249.5 C232.5 251.1 232.6 252.8 232.6 254.5 C232.7 256.1 232.7 257.8 232.8 259.5 C232.8 261.1 232.8 262.8 232.9 264.5 C232.9 266.1 233.0 267.8 233.0 269.5 C233.0 271.1 233.0 272.8 233.0 274.5 C233.0 276.1 233.0 277.8 232.9 279.5 C232.9 281.1 232.7 282.8 232.9 284.5 C233.1 286.1 233.8 287.8 234.2 289.5 C234.5 291.1 234.7 292.8 234.9 294.5 C235.1 296.1 235.2 297.8 235.3 299.5 C235.4 301.1 235.6 302.8 235.8 304.5 C235.9 306.1 235.9 307.8 236.0 309.5 C236.2 311.1 236.4 312.8 236.5 314.5 C236.6 316.1 236.6 317.8 236.7 319.5 C236.7 321.1 236.7 322.8 236.6 324.5 C236.6 326.1 236.5 327.8 236.3 329.5 C236.2 331.1 235.8 332.8 235.6 334.5 C235.5 336.1 235.5 337.8 235.5 339.5 C235.4 341.1 235.4 342.8 235.3 344.5 C235.3 346.1 235.2 347.8 235.2 349.5 C235.2 351.1 235.3 352.8 235.3 354.5 C235.3 356.1 235.4 357.8 235.4 359.5 C235.4 361.1 235.3 362.8 235.3 364.5 C235.3 366.1 235.3 367.8 235.3 369.5 C235.3 371.1 235.3 372.8 235.4 374.5 C235.4 376.1 235.4 377.8 235.4 379.5 C235.5 381.1 235.5 382.8 235.5 384.5 C235.5 386.1 235.4 387.8 235.4 389.5 C235.4 391.1 235.4 392.8 235.4 394.5 C235.5 396.1 235.6 397.8 235.6 399.5 C235.6 401.1 235.5 402.8 235.5 404.5 C235.4 406.1 235.3 407.8 235.2 409.5 C235.2 411.1 235.2 412.8 235.2 414.5 C235.2 416.1 235.1 417.8 235.1 419.5 C235.1 421.1 235.1 422.8 235.0 424.5 C235.0 426.1 235.0 427.8 234.9 429.5 C234.9 431.1 234.8 432.8 234.7 434.5 C234.7 436.1 234.6 437.8 234.6 439.5 C234.6 441.1 234.6 442.8 234.7 444.5 C234.9 446.1 235.3 447.8 235.4 449.5 C235.6 451.1 235.7 452.8 235.7 454.5 C235.8 456.1 235.7 457.8 235.7 459.5 C235.7 461.1 235.7 462.8 235.7 464.5 C235.7 466.1 235.7 468.6 235.7 469.5" stroke="#cb8160" stroke-width="1.8" fill="none" opacity="0.6"/><path d="M231.1 189.6 C231.1 190.4 231.1 192.9 231.1 194.6 C231.1 196.2 231.1 197.9 231.1 199.6 C231.1 201.2 231.1 202.9 231.1 204.6 C231.1 206.2 231.2 207.9 231.3 209.6 C231.3 211.2 231.5 212.9 231.6 214.6 C231.7 216.2 231.9 217.9 232.0 219.6 C232.2 221.2 232.5 222.9 232.7 224.6 C232.8 226.2 233.1 227.9 233.2 229.6 C233.4 231.2 233.4 232.9 233.5 234.6 C233.6 236.2 233.8 237.9 233.9 239.6 C234.0 241.2 234.0 242.9 234.1 244.6 C234.2 246.2 234.2 247.9 234.3 249.6 C234.3 251.2 234.4 252.9 234.4 254.6 C234.5 256.2 234.5 257.9 234.6 259.6 C234.6 261.2 234.6 262.9 234.7 264.6 C234.7 266.2 234.8 267.9 234.8 269.6 C234.8 271.2 234.8 272.9 234.8 274.6 C234.8 276.2 234.8 277.9 234.7 279.6 C234.7 281.2 234.5 282.9 234.7 284.6 C234.9 286.2 235.6 287.9 235.9 289.6 C236.2 291.2 236.4 292.9 236.6 294.6 C236.7 296.2 236.8 297.9 236.9 299.6 C237.0 301.2 237.2 302.9 237.3 304.6 C237.4 306.2 237.4 307.9 237.5 309.6 C237.6 311.2 237.8 312.9 237.9 314.6 C238.0 316.2 238.1 317.9 238.1 319.6 C238.1 321.2 238.1 322.9 238.0 324.6 C238.0 326.2 237.9 327.9 237.7 329.6 C237.6 331.2 237.2 332.9 237.1 334.6 C237.0 336.2 237.0 337.9 237.0 339.6 C236.9 341.2 236.9 342.9 236.9 344.6 C236.8 346.2 236.8 347.9 236.7 349.6 C236.7 351.2 236.8 352.9 236.8 354.6 C236.9 356.2 236.9 357.9 236.9 359.6 C236.9 361.2 236.9 362.9 236.9 364.6 C236.9 366.2 236.8 367.9 236.8 369.6 C236.8 371.2 236.9 372.9 236.9 374.6 C236.9 376.2 236.9 377.9 236.9 379.6 C237.0 381.2 237.0 382.9 237.0 384.6 C237.0 386.2 236.9 387.9 236.9 389.6 C236.9 391.2 236.9 392.9 236.9 394.6 C236.9 396.2 237.1 397.9 237.1 399.6 C237.1 401.2 237.0 402.9 236.9 404.6 C236.9 406.2 236.7 407.9 236.7 409.6 C236.7 411.2 236.7 412.9 236.7 414.6 C236.7 416.2 236.6 417.9 236.6 419.6 C236.6 421.2 236.6 422.9 236.6 424.6 C236.5 426.2 236.5 427.9 236.5 429.6 C236.5 431.2 236.4 432.9 236.3 434.6 C236.3 436.2 236.2 437.9 236.2 439.6 C236.2 441.2 236.2 442.9 236.3 444.6 C236.5 446.2 236.8 447.9 236.9 449.6 C237.1 451.2 237.2 452.9 237.2 454.6 C237.3 456.2 237.2 457.9 237.2 459.6 C237.2 461.2 237.2 462.9 237.2 464.6 C237.2 466.2 237.2 468.7 237.2 469.6" stroke="#be6647" stroke-width="1.0" fill="none" opacity="0.6"/><path d="M233.9 189.7 C233.9 190.5 233.9 193.0 233.9 194.7 C233.9 196.4 233.9 198.0 233.9 199.7 C233.9 201.4 233.8 203.0 233.9 204.7 C233.9 206.4 233.9 208.0 234.0 209.7 C234.0 211.4 234.2 213.0 234.3 214.7 C234.4 216.4 234.5 218.0 234.6 219.7 C234.8 221.4 235.0 223.0 235.2 224.7 C235.3 226.4 235.5 228.0 235.6 229.7 C235.8 231.4 235.8 233.0 235.9 234.7 C236.0 236.4 236.1 238.0 236.2 239.7 C236.3 241.4 236.3 243.0 236.4 244.7 C236.5 246.4 236.5 248.0 236.6 249.7 C236.6 251.4 236.7 253.0 236.7 254.7 C236.8 256.4 236.8 258.0 236.8 259.7 C236.9 261.4 236.9 263.0 236.9 264.7 C236.9 266.4 237.0 268.0 237.0 269.7 C237.0 271.4 237.0 273.0 237.0 274.7 C237.0 276.4 237.0 278.0 237.0 279.7 C236.9 281.4 236.7 283.0 236.9 284.7 C237.1 286.4 237.8 288.0 238.1 289.7 C238.4 291.4 238.5 293.0 238.6 294.7 C238.8 296.4 238.7 298.0 238.8 299.7 C238.9 301.4 239.0 303.0 239.1 304.7 C239.2 306.4 239.2 308.0 239.3 309.7 C239.4 311.4 239.6 313.0 239.7 314.7 C239.8 316.4 239.8 318.0 239.8 319.7 C239.8 321.4 239.8 323.0 239.8 324.7 C239.7 326.4 239.6 328.0 239.5 329.7 C239.4 331.4 239.0 333.0 238.9 334.7 C238.8 336.4 238.9 338.0 238.8 339.7 C238.8 341.4 238.8 343.0 238.7 344.7 C238.7 346.4 238.7 348.0 238.7 349.7 C238.7 351.4 238.7 353.0 238.7 354.7 C238.8 356.4 238.8 358.0 238.8 359.7 C238.9 361.4 238.8 363.0 238.8 364.7 C238.8 366.4 238.7 368.0 238.7 369.7 C238.7 371.4 238.8 373.0 238.8 374.7 C238.8 376.4 238.8 378.0 238.8 379.7 C238.8 381.4 238.8 383.0 238.8 384.7 C238.8 386.4 238.8 388.0 238.8 389.7 C238.7 391.4 238.7 393.0 238.7 394.7 C238.7 396.4 238.9 398.0 238.9 399.7 C238.9 401.4 238.8 403.0 238.8 404.7 C238.7 406.4 238.6 408.0 238.5 409.7 C238.5 411.4 238.5 413.0 238.5 414.7 C238.5 416.4 238.5 418.0 238.5 419.7 C238.5 421.4 238.5 423.0 238.4 424.7 C238.4 426.4 238.4 428.0 238.4 429.7 C238.4 431.4 238.3 433.0 238.3 434.7 C238.3 436.4 238.2 438.0 238.2 439.7 C238.2 441.4 238.2 443.0 238.3 444.7 C238.4 446.4 238.7 448.0 238.8 449.7 C239.0 451.4 239.0 453.0 239.1 454.7 C239.1 456.4 239.1 458.0 239.1 459.7 C239.1 461.4 239.1 463.0 239.1 464.7 C239.1 466.4 239.1 468.9 239.1 469.7" stroke="#cb8160" stroke-width="2.4" fill="none" opacity="0.6"/><path d="M236.4 189.8 C236.4 190.6 236.4 193.1 236.4 194.8 C236.4 196.4 236.4 198.1 236.4 199.8 C236.4 201.4 236.4 203.1 236.4 204.8 C236.4 206.4 236.4 208.1 236.5 209.8 C236.5 211.4 236.6 213.1 236.7 214.8 C236.8 216.4 236.9 218.1 237.1 219.8 C237.2 221.4 237.4 223.1 237.5 224.8 C237.6 226.4 237.8 228.1 237.9 229.8 C238.0 231.4 238.1 233.1 238.1 234.8 C238.2 236.4 238.3 238.1 238.4 239.8 C238.5 241.4 238.5 243.1 238.6 244.8 C238.6 246.4 238.6 248.1 238.7 249.8 C238.7 251.4 238.8 253.1 238.8 254.8 C238.8 256.4 238.9 258.1 238.9 259.8 C238.9 261.4 239.0 263.1 239.0 264.8 C239.0 266.4 239.0 268.1 239.0 269.8 C239.1 271.4 239.1 273.1 239.1 274.8 C239.1 276.4 239.0 278.1 239.0 279.8 C239.0 281.4 238.8 283.1 239.0 284.8 C239.2 286.4 239.8 288.1 240.1 289.8 C240.4 291.4 240.5 293.1 240.6 294.8 C240.7 296.4 240.6 298.1 240.6 299.8 C240.7 301.4 240.8 303.1 240.8 304.8 C240.9 306.4 240.9 308.1 241.0 309.8 C241.1 311.4 241.3 313.1 241.3 314.8 C241.4 316.4 241.4 318.1 241.4 319.8 C241.4 321.4 241.4 323.1 241.4 324.8 C241.3 326.4 241.2 328.1 241.1 329.8 C241.0 331.4 240.7 333.1 240.6 334.8 C240.5 336.4 240.6 338.1 240.5 339.8 C240.5 341.4 240.5 343.1 240.5 344.8 C240.5 346.4 240.4 348.1 240.4 349.8 C240.4 351.4 240.5 353.1 240.5 354.8 C240.6 356.4 240.6 358.1 240.6 359.8 C240.6 361.4 240.6 363.1 240.6 364.8 C240.6 366.4 240.5 368.1 240.5 369.8 C240.5 371.4 240.5 373.1 240.5 374.8 C240.5 376.4 240.5 378.1 240.6 379.8 C240.6 381.4 240.6 383.1 240.5 384.8 C240.5 386.4 240.5 388.1 240.4 389.8 C240.4 391.4 240.4 393.1 240.4 394.8 C240.4 396.4 240.6 398.1 240.6 399.8 C240.6 401.4 240.5 403.1 240.4 404.8 C240.4 406.4 240.2 408.1 240.2 409.8 C240.2 411.4 240.2 413.1 240.2 414.8 C240.2 416.4 240.2 418.1 240.2 419.8 C240.2 421.4 240.2 423.1 240.2 424.8 C240.2 426.4 240.2 428.1 240.2 429.8 C240.2 431.4 240.1 433.1 240.1 434.8 C240.1 436.4 240.0 438.1 240.0 439.8 C240.0 441.4 240.0 443.1 240.1 444.8 C240.2 446.4 240.5 448.1 240.6 449.8 C240.7 451.4 240.8 453.1 240.8 454.8 C240.8 456.4 240.8 458.1 240.8 459.8 C240.8 461.4 240.8 463.1 240.8 464.8 C240.8 466.4 240.8 468.9 240.8 469.8" stroke="#c47859" stroke-width="1.8" fill="none" opacity="0.45"/><path d="M238.6 189.8 C238.6 190.7 238.6 193.2 238.6 194.8 C238.6 196.5 238.6 198.2 238.6 199.8 C238.6 201.5 238.5 203.2 238.6 204.8 C238.6 206.5 238.6 208.2 238.6 209.8 C238.7 211.5 238.8 213.2 238.9 214.8 C238.9 216.5 239.0 218.2 239.1 219.8 C239.2 221.5 239.4 223.2 239.5 224.8 C239.6 226.5 239.8 228.2 239.8 229.8 C239.9 231.5 240.0 233.2 240.0 234.8 C240.1 236.5 240.2 238.2 240.3 239.8 C240.3 241.5 240.3 243.2 240.4 244.8 C240.4 246.5 240.5 248.2 240.5 249.8 C240.5 251.5 240.6 253.2 240.6 254.8 C240.6 256.5 240.7 258.2 240.7 259.8 C240.7 261.5 240.7 263.2 240.8 264.8 C240.8 266.5 240.8 268.2 240.8 269.8 C240.8 271.5 240.8 273.2 240.8 274.8 C240.8 276.5 240.8 278.2 240.8 279.8 C240.8 281.5 240.6 283.2 240.7 284.8 C240.9 286.5 241.6 288.2 241.8 289.8 C242.1 291.5 242.1 293.2 242.2 294.8 C242.3 296.5 242.2 298.2 242.2 299.8 C242.2 301.5 242.3 303.2 242.3 304.8 C242.3 306.5 242.3 308.2 242.4 309.8 C242.5 311.5 242.7 313.2 242.7 314.8 C242.8 316.5 242.8 318.2 242.8 319.8 C242.8 321.5 242.8 323.2 242.7 324.8 C242.7 326.5 242.6 328.2 242.5 329.8 C242.4 331.5 242.1 333.2 242.1 334.8 C242.0 336.5 242.0 338.2 242.0 339.8 C242.0 341.5 242.0 343.2 242.0 344.8 C242.0 346.5 241.9 348.2 241.9 349.8 C241.9 351.5 242.0 353.2 242.0 354.8 C242.1 356.5 242.1 358.2 242.1 359.8 C242.2 361.5 242.2 363.2 242.1 364.8 C242.1 366.5 242.0 368.2 242.0 369.8 C242.0 371.5 242.0 373.2 242.0 374.8 C242.0 376.5 242.0 378.2 242.0 379.8 C242.0 381.5 242.0 383.2 242.0 384.8 C242.0 386.5 241.9 388.2 241.9 389.8 C241.9 391.5 241.8 393.2 241.8 394.8 C241.9 396.5 242.0 398.2 242.0 399.8 C242.0 401.5 241.9 403.2 241.9 404.8 C241.8 406.5 241.7 408.2 241.7 409.8 C241.6 411.5 241.7 413.2 241.7 414.8 C241.7 416.5 241.7 418.2 241.7 419.8 C241.7 421.5 241.7 423.2 241.7 424.8 C241.7 426.5 241.7 428.2 241.7 429.8 C241.7 431.5 241.7 433.2 241.7 434.8 C241.6 436.5 241.6 438.2 241.6 439.8 C241.6 441.5 241.6 443.2 241.7 444.8 C241.8 446.5 242.0 448.2 242.1 449.8 C242.2 451.5 242.2 453.2 242.3 454.8 C242.3 456.5 242.3 458.2 242.3 459.8 C242.3 461.5 242.3 463.2 242.3 464.8 C242.3 466.5 242.3 469.0 242.3 469.8" stroke="#96412f" stroke-width="0.7" fill="none" opacity="0.45"/><path d="M241.3 189.9 C241.3 190.7 241.3 193.2 241.3 194.9 C241.3 196.6 241.3 198.2 241.3 199.9 C241.3 201.6 241.3 203.2 241.3 204.9 C241.4 206.6 241.4 208.2 241.4 209.9 C241.4 211.6 241.5 213.2 241.6 214.9 C241.6 216.6 241.7 218.2 241.8 219.9 C241.9 221.6 242.0 223.2 242.1 224.9 C242.2 226.6 242.3 228.2 242.3 229.9 C242.4 231.6 242.4 233.2 242.5 234.9 C242.5 236.6 242.6 238.2 242.6 239.9 C242.7 241.6 242.7 243.2 242.8 244.9 C242.8 246.6 242.8 248.2 242.8 249.9 C242.9 251.6 242.9 253.2 242.9 254.9 C242.9 256.6 243.0 258.2 243.0 259.9 C243.0 261.6 243.0 263.2 243.0 264.9 C243.0 266.6 243.1 268.2 243.1 269.9 C243.1 271.6 243.1 273.2 243.1 274.9 C243.1 276.6 243.1 278.2 243.1 279.9 C243.0 281.6 242.9 283.2 243.0 284.9 C243.2 286.6 243.8 288.2 244.0 289.9 C244.2 291.6 244.3 293.2 244.3 294.9 C244.3 296.6 244.2 298.2 244.2 299.9 C244.1 301.6 244.2 303.2 244.2 304.9 C244.2 306.6 244.2 308.2 244.2 309.9 C244.3 311.6 244.5 313.2 244.5 314.9 C244.6 316.6 244.6 318.2 244.6 319.9 C244.6 321.6 244.6 323.2 244.5 324.9 C244.5 326.6 244.4 328.2 244.3 329.9 C244.2 331.6 244.0 333.2 243.9 334.9 C243.8 336.6 243.9 338.2 243.9 339.9 C243.9 341.6 243.9 343.2 243.9 344.9 C243.9 346.6 243.8 348.2 243.9 349.9 C243.9 351.6 243.9 353.2 244.0 354.9 C244.0 356.6 244.1 358.2 244.1 359.9 C244.1 361.6 244.1 363.2 244.1 364.9 C244.1 366.6 244.0 368.2 244.0 369.9 C243.9 371.6 244.0 373.2 244.0 374.9 C244.0 376.6 243.9 378.2 243.9 379.9 C243.9 381.6 243.9 383.2 243.9 384.9 C243.9 386.6 243.8 388.2 243.8 389.9 C243.7 391.6 243.7 393.2 243.7 394.9 C243.7 396.6 243.8 398.2 243.8 399.9 C243.9 401.6 243.8 403.2 243.7 404.9 C243.7 406.6 243.5 408.2 243.5 409.9 C243.5 411.6 243.5 413.2 243.6 414.9 C243.6 416.6 243.6 418.2 243.6 419.9 C243.6 421.6 243.6 423.2 243.6 424.9 C243.6 426.6 243.7 428.2 243.7 429.9 C243.7 431.6 243.7 433.2 243.7 434.9 C243.6 436.6 243.6 438.2 243.6 439.9 C243.6 441.6 243.6 443.2 243.7 444.9 C243.8 446.6 243.9 448.2 244.0 449.9 C244.1 451.6 244.2 453.2 244.2 454.9 C244.2 456.6 244.2 458.2 244.2 459.9 C244.2 461.6 244.2 463.2 244.2 464.9 C244.2 466.6 244.2 469.1 244.2 469.9" stroke="#be6647" stroke-width="1.0" fill="none" opacity="0.9"/><path d="M243.5 189.9 C243.5 190.8 243.5 193.3 243.5 194.9 C243.5 196.6 243.5 198.3 243.5 199.9 C243.5 201.6 243.5 203.3 243.5 204.9 C243.6 206.6 243.6 208.3 243.6 209.9 C243.6 211.6 243.7 213.3 243.7 214.9 C243.8 216.6 243.8 218.3 243.9 219.9 C243.9 221.6 244.0 223.3 244.1 224.9 C244.2 226.6 244.2 228.3 244.3 229.9 C244.4 231.6 244.4 233.3 244.4 234.9 C244.5 236.6 244.5 238.3 244.5 239.9 C244.6 241.6 244.6 243.3 244.6 244.9 C244.6 246.6 244.7 248.3 244.7 249.9 C244.7 251.6 244.7 253.3 244.8 254.9 C244.8 256.6 244.8 258.3 244.8 259.9 C244.8 261.6 244.8 263.3 244.8 264.9 C244.8 266.6 244.9 268.3 244.9 269.9 C244.9 271.6 244.9 273.3 244.9 274.9 C244.9 276.6 244.9 278.3 244.9 279.9 C244.8 281.6 244.7 283.3 244.8 284.9 C245.0 286.6 245.6 288.3 245.8 289.9 C246.0 291.6 246.0 293.3 246.0 294.9 C246.0 296.6 245.8 298.3 245.7 299.9 C245.7 301.6 245.7 303.3 245.7 304.9 C245.7 306.6 245.7 308.3 245.7 309.9 C245.8 311.6 245.9 313.3 246.0 314.9 C246.0 316.6 246.0 318.3 246.0 319.9 C246.0 321.6 246.0 323.3 245.9 324.9 C245.9 326.6 245.8 328.3 245.7 329.9 C245.6 331.6 245.4 333.3 245.4 334.9 C245.3 336.6 245.4 338.3 245.4 339.9 C245.4 341.6 245.4 343.3 245.4 344.9 C245.4 346.6 245.4 348.3 245.4 349.9 C245.4 351.6 245.5 353.3 245.5 354.9 C245.6 356.6 245.6 358.3 245.7 359.9 C245.7 361.6 245.7 363.3 245.7 364.9 C245.6 366.6 245.5 368.3 245.5 369.9 C245.5 371.6 245.5 373.3 245.5 374.9 C245.5 376.6 245.5 378.3 245.4 379.9 C245.4 381.6 245.4 383.3 245.4 384.9 C245.3 386.6 245.3 388.3 245.2 389.9 C245.2 391.6 245.1 393.3 245.1 394.9 C245.2 396.6 245.3 398.3 245.3 399.9 C245.3 401.6 245.2 403.3 245.2 404.9 C245.1 406.6 245.0 408.3 245.0 409.9 C245.0 411.6 245.0 413.3 245.0 414.9 C245.1 416.6 245.1 418.3 245.1 419.9 C245.1 421.6 245.1 423.3 245.2 424.9 C245.2 426.6 245.2 428.3 245.2 429.9 C245.3 431.6 245.3 433.3 245.2 434.9 C245.2 436.6 245.2 438.3 245.2 439.9 C245.2 441.6 245.2 443.3 245.3 444.9 C245.3 446.6 245.4 448.3 245.5 449.9 C245.6 451.6 245.7 453.3 245.7 454.9 C245.7 456.6 245.7 458.3 245.7 459.9 C245.7 461.6 245.7 463.3 245.7 464.9 C245.7 466.6 245.7 469.1 245.7 469.9" stroke="#9b4734" stroke-width="1.8" fill="none" opacity="0.75"/><path d="M246.6 190.0 C246.6 190.8 246.6 193.3 246.6 195.0 C246.6 196.6 246.6 198.3 246.6 200.0 C246.6 201.6 246.6 203.3 246.6 205.0 C246.7 206.6 246.7 208.3 246.7 210.0 C246.7 211.6 246.7 213.3 246.7 215.0 C246.8 216.6 246.8 218.3 246.8 220.0 C246.9 221.6 246.9 223.3 247.0 225.0 C247.0 226.6 247.0 228.3 247.1 230.0 C247.1 231.6 247.1 233.3 247.1 235.0 C247.2 236.6 247.2 238.3 247.2 240.0 C247.2 241.6 247.2 243.3 247.2 245.0 C247.3 246.6 247.3 248.3 247.3 250.0 C247.3 251.6 247.3 253.3 247.3 255.0 C247.3 256.6 247.3 258.3 247.3 260.0 C247.4 261.6 247.4 263.3 247.4 265.0 C247.4 266.6 247.4 268.3 247.4 270.0 C247.4 271.6 247.4 273.3 247.4 275.0 C247.4 276.6 247.4 278.3 247.4 280.0 C247.4 281.6 247.2 283.3 247.4 285.0 C247.5 286.6 248.1 288.3 248.3 290.0 C248.4 291.6 248.4 293.3 248.3 295.0 C248.3 296.6 248.0 298.3 247.9 300.0 C247.9 301.6 247.8 303.3 247.8 305.0 C247.7 306.6 247.7 308.3 247.8 310.0 C247.8 311.6 247.9 313.3 248.0 315.0 C248.0 316.6 248.0 318.3 248.0 320.0 C248.0 321.6 247.9 323.3 247.9 325.0 C247.8 326.6 247.8 328.3 247.7 330.0 C247.6 331.6 247.5 333.3 247.5 335.0 C247.4 336.6 247.5 338.3 247.5 340.0 C247.5 341.6 247.5 343.3 247.5 345.0 C247.5 346.6 247.5 348.3 247.6 350.0 C247.6 351.6 247.7 353.3 247.7 355.0 C247.7 356.6 247.8 358.3 247.8 360.0 C247.9 361.6 247.9 363.3 247.8 365.0 C247.8 366.6 247.7 368.3 247.7 370.0 C247.6 371.6 247.6 373.3 247.6 375.0 C247.6 376.6 247.6 378.3 247.6 380.0 C247.5 381.6 247.5 383.3 247.5 385.0 C247.4 386.6 247.4 388.3 247.3 390.0 C247.3 391.6 247.2 393.3 247.2 395.0 C247.2 396.6 247.4 398.3 247.4 400.0 C247.4 401.6 247.3 403.3 247.2 405.0 C247.2 406.6 247.1 408.3 247.0 410.0 C247.0 411.6 247.1 413.3 247.1 415.0 C247.2 416.6 247.2 418.3 247.2 420.0 C247.2 421.6 247.3 423.3 247.3 425.0 C247.3 426.6 247.4 428.3 247.4 430.0 C247.5 431.6 247.5 433.3 247.5 435.0 C247.5 436.6 247.4 438.3 247.5 440.0 C247.5 441.6 247.5 443.3 247.5 445.0 C247.6 446.6 247.6 448.3 247.7 450.0 C247.7 451.6 247.8 453.3 247.8 455.0 C247.8 456.6 247.8 458.3 247.8 460.0 C247.8 461.6 247.8 463.3 247.8 465.0 C247.8 466.6 247.8 469.1 247.8 470.0" stroke="#96412f" stroke-width="1.0" fill="none" opacity="0.6"/><path d="M249.2 190.0 C249.2 190.8 249.2 193.3 249.2 195.0 C249.2 196.7 249.2 198.3 249.2 200.0 C249.2 201.7 249.2 203.3 249.2 205.0 C249.2 206.7 249.2 208.3 249.2 210.0 C249.3 211.7 249.3 213.3 249.3 215.0 C249.3 216.7 249.3 218.3 249.3 220.0 C249.3 221.7 249.3 223.3 249.3 225.0 C249.4 226.7 249.4 228.3 249.4 230.0 C249.4 231.7 249.4 233.3 249.4 235.0 C249.4 236.7 249.4 238.3 249.4 240.0 C249.4 241.7 249.4 243.3 249.4 245.0 C249.4 246.7 249.5 248.3 249.5 250.0 C249.5 251.7 249.5 253.3 249.5 255.0 C249.5 256.7 249.5 258.3 249.5 260.0 C249.5 261.7 249.5 263.3 249.5 265.0 C249.5 266.7 249.5 268.3 249.5 270.0 C249.5 271.7 249.5 273.3 249.5 275.0 C249.5 276.7 249.5 278.3 249.5 280.0 C249.5 281.7 249.3 283.3 249.5 285.0 C249.6 286.7 250.2 288.3 250.3 290.0 C250.4 291.7 250.4 293.3 250.3 295.0 C250.2 296.7 249.9 298.3 249.8 300.0 C249.7 301.7 249.6 303.3 249.5 305.0 C249.5 306.7 249.4 308.3 249.5 310.0 C249.5 311.7 249.6 313.3 249.6 315.0 C249.7 316.7 249.7 318.3 249.6 320.0 C249.6 321.7 249.6 323.3 249.5 325.0 C249.5 326.7 249.4 328.3 249.4 330.0 C249.3 331.7 249.2 333.3 249.2 335.0 C249.2 336.7 249.2 338.3 249.2 340.0 C249.3 341.7 249.3 343.3 249.3 345.0 C249.3 346.7 249.3 348.3 249.4 350.0 C249.4 351.7 249.5 353.3 249.5 355.0 C249.6 356.7 249.6 358.3 249.7 360.0 C249.7 361.7 249.7 363.3 249.7 365.0 C249.6 366.7 249.5 368.3 249.5 370.0 C249.4 371.7 249.4 373.3 249.4 375.0 C249.4 376.7 249.4 378.3 249.3 380.0 C249.3 381.7 249.3 383.3 249.2 385.0 C249.2 386.7 249.1 388.3 249.0 390.0 C249.0 391.7 248.9 393.3 248.9 395.0 C248.9 396.7 249.1 398.3 249.1 400.0 C249.1 401.7 249.0 403.3 248.9 405.0 C248.9 406.7 248.8 408.3 248.8 410.0 C248.8 411.7 248.8 413.3 248.9 415.0 C248.9 416.7 248.9 418.3 249.0 420.0 C249.0 421.7 249.1 423.3 249.1 425.0 C249.1 426.7 249.2 428.3 249.3 430.0 C249.3 431.7 249.3 433.3 249.3 435.0 C249.3 436.7 249.3 438.3 249.3 440.0 C249.3 441.7 249.4 443.3 249.4 445.0 C249.4 446.7 249.4 448.3 249.4 450.0 C249.5 451.7 249.5 453.3 249.6 455.0 C249.6 456.7 249.6 458.3 249.6 460.0 C249.6 461.7 249.6 463.3 249.6 465.0 C249.6 466.7 249.6 469.2 249.6 470.0" stroke="#9b4734" stroke-width="2.4" fill="none" opacity="0.45"/><path d="M251.6 190.0 C251.6 190.8 251.6 193.3 251.6 195.0 C251.6 196.7 251.6 198.3 251.6 200.0 C251.6 201.7 251.6 203.3 251.6 205.0 C251.6 206.7 251.6 208.3 251.5 210.0 C251.5 211.7 251.5 213.3 251.5 215.0 C251.5 216.7 251.5 218.3 251.5 220.0 C251.5 221.7 251.5 223.3 251.5 225.0 C251.5 226.7 251.5 228.3 251.5 230.0 C251.4 231.7 251.4 233.3 251.4 235.0 C251.4 236.7 251.4 238.3 251.4 240.0 C251.4 241.7 251.4 243.3 251.4 245.0 C251.4 246.7 251.4 248.3 251.4 250.0 C251.4 251.7 251.4 253.3 251.4 255.0 C251.4 256.7 251.4 258.3 251.4 260.0 C251.4 261.7 251.4 263.3 251.4 265.0 C251.4 266.7 251.4 268.3 251.4 270.0 C251.4 271.7 251.4 273.3 251.4 275.0 C251.4 276.7 251.4 278.3 251.4 280.0 C251.4 281.7 251.3 283.3 251.4 285.0 C251.5 286.7 252.0 288.3 252.2 290.0 C252.3 291.7 252.2 293.3 252.0 295.0 C251.9 296.7 251.6 298.3 251.4 300.0 C251.3 301.7 251.2 303.3 251.1 305.0 C251.0 306.7 251.0 308.3 251.0 310.0 C251.0 311.7 251.1 313.3 251.1 315.0 C251.2 316.7 251.2 318.3 251.1 320.0 C251.1 321.7 251.0 323.3 251.0 325.0 C250.9 326.7 250.9 328.3 250.9 330.0 C250.8 331.7 250.7 333.3 250.7 335.0 C250.7 336.7 250.8 338.3 250.8 340.0 C250.8 341.7 250.9 343.3 250.9 345.0 C250.9 346.7 250.9 348.3 251.0 350.0 C251.0 351.7 251.1 353.3 251.1 355.0 C251.2 356.7 251.3 358.3 251.3 360.0 C251.3 361.7 251.3 363.3 251.3 365.0 C251.3 366.7 251.2 368.3 251.1 370.0 C251.1 371.7 251.1 373.3 251.0 375.0 C251.0 376.7 251.0 378.3 250.9 380.0 C250.9 381.7 250.9 383.3 250.8 385.0 C250.7 386.7 250.7 388.3 250.6 390.0 C250.5 391.7 250.5 393.3 250.5 395.0 C250.5 396.7 250.6 398.3 250.6 400.0 C250.6 401.7 250.5 403.3 250.5 405.0 C250.4 406.7 250.3 408.3 250.3 410.0 C250.3 411.7 250.4 413.3 250.4 415.0 C250.5 416.7 250.5 418.3 250.6 420.0 C250.6 421.7 250.7 423.3 250.7 425.0 C250.8 426.7 250.8 428.3 250.9 430.0 C250.9 431.7 251.0 433.3 251.0 435.0 C251.0 436.7 251.0 438.3 251.0 440.0 C251.0 441.7 251.0 443.3 251.1 445.0 C251.1 446.7 251.0 448.3 251.0 450.0 C251.1 451.7 251.1 453.3 251.2 455.0 C251.2 456.7 251.2 458.3 251.2 460.0 C251.2 461.7 251.2 463.3 251.2 465.0 C251.2 466.7 251.2 469.2 251.2 470.0" stroke="#a14b36" stroke-width="0.7" fill="none" opacity="0.45"/><path d="M254.2 190.0 C254.2 190.8 254.2 193.3 254.2 195.0 C254.2 196.7 254.2 198.3 254.2 200.0 C254.2 201.7 254.2 203.3 254.2 205.0 C254.2 206.7 254.2 208.3 254.2 210.0 C254.2 211.7 254.1 213.3 254.1 215.0 C254.1 216.7 254.1 218.3 254.0 220.0 C254.0 221.7 253.9 223.3 253.9 225.0 C253.9 226.7 253.8 228.3 253.8 230.0 C253.8 231.7 253.8 233.3 253.7 235.0 C253.7 236.7 253.7 238.3 253.7 240.0 C253.7 241.7 253.7 243.3 253.6 245.0 C253.6 246.7 253.6 248.3 253.6 250.0 C253.6 251.7 253.6 253.3 253.6 255.0 C253.6 256.7 253.6 258.3 253.6 260.0 C253.5 261.7 253.5 263.3 253.5 265.0 C253.5 266.7 253.5 268.3 253.5 270.0 C253.5 271.7 253.5 273.3 253.5 275.0 C253.5 276.7 253.5 278.3 253.5 280.0 C253.5 281.7 253.4 283.3 253.5 285.0 C253.7 286.7 254.2 288.3 254.3 290.0 C254.3 291.7 254.2 293.3 254.0 295.0 C253.9 296.7 253.5 298.3 253.3 300.0 C253.1 301.7 253.0 303.3 252.9 305.0 C252.8 306.7 252.7 308.3 252.7 310.0 C252.7 311.7 252.8 313.3 252.9 315.0 C252.9 316.7 252.8 318.3 252.8 320.0 C252.8 321.7 252.7 323.3 252.7 325.0 C252.6 326.7 252.6 328.3 252.5 330.0 C252.5 331.7 252.5 333.3 252.5 335.0 C252.5 336.7 252.6 338.3 252.6 340.0 C252.6 341.7 252.7 343.3 252.7 345.0 C252.7 346.7 252.8 348.3 252.8 350.0 C252.9 351.7 252.9 353.3 253.0 355.0 C253.0 356.7 253.1 358.3 253.2 360.0 C253.2 361.7 253.2 363.3 253.2 365.0 C253.1 366.7 253.0 368.3 253.0 370.0 C252.9 371.7 252.9 373.3 252.9 375.0 C252.8 376.7 252.8 378.3 252.7 380.0 C252.7 381.7 252.6 383.3 252.6 385.0 C252.5 386.7 252.4 388.3 252.4 390.0 C252.3 391.7 252.2 393.3 252.2 395.0 C252.2 396.7 252.3 398.3 252.3 400.0 C252.4 401.7 252.3 403.3 252.2 405.0 C252.2 406.7 252.1 408.3 252.1 410.0 C252.1 411.7 252.2 413.3 252.2 415.0 C252.3 416.7 252.3 418.3 252.4 420.0 C252.4 421.7 252.5 423.3 252.5 425.0 C252.6 426.7 252.7 428.3 252.7 430.0 C252.8 431.7 252.9 433.3 252.9 435.0 C252.9 436.7 252.9 438.3 252.9 440.0 C252.9 441.7 253.0 443.3 253.0 445.0 C252.9 446.7 252.9 448.3 252.9 450.0 C252.9 451.7 252.9 453.3 253.0 455.0 C253.0 456.7 253.0 458.3 253.0 460.0 C253.0 461.7 253.0 463.3 253.0 465.0 C253.0 466.7 253.0 469.2 253.0 470.0" stroke="#b15a3e" stroke-width="1.0" fill="none" opacity="0.45"/><path d="M256.5 190.0 C256.5 190.8 256.5 193.3 256.5 195.0 C256.5 196.6 256.5 198.3 256.5 200.0 C256.5 201.6 256.5 203.3 256.5 205.0 C256.5 206.6 256.5 208.3 256.4 210.0 C256.4 211.6 256.4 213.3 256.3 215.0 C256.3 216.6 256.2 218.3 256.2 220.0 C256.1 221.6 256.1 223.3 256.0 225.0 C255.9 226.6 255.9 228.3 255.8 230.0 C255.8 231.6 255.8 233.3 255.7 235.0 C255.7 236.6 255.7 238.3 255.6 240.0 C255.6 241.6 255.6 243.3 255.6 245.0 C255.6 246.6 255.5 248.3 255.5 250.0 C255.5 251.6 255.5 253.3 255.5 255.0 C255.5 256.6 255.4 258.3 255.4 260.0 C255.4 261.6 255.4 263.3 255.4 265.0 C255.4 266.6 255.4 268.3 255.4 270.0 C255.4 271.6 255.4 273.3 255.4 275.0 C255.4 276.6 255.4 278.3 255.4 280.0 C255.4 281.6 255.3 283.3 255.4 285.0 C255.5 286.6 256.0 288.3 256.1 290.0 C256.1 291.6 255.9 293.3 255.8 295.0 C255.6 296.6 255.2 298.3 254.9 300.0 C254.7 301.6 254.5 303.3 254.4 305.0 C254.3 306.6 254.3 308.3 254.2 310.0 C254.2 311.6 254.3 313.3 254.3 315.0 C254.3 316.6 254.3 318.3 254.3 320.0 C254.2 321.6 254.1 323.3 254.1 325.0 C254.1 326.6 254.0 328.3 254.0 330.0 C254.0 331.6 254.0 333.3 254.0 335.0 C254.0 336.6 254.1 338.3 254.1 340.0 C254.2 341.6 254.2 343.3 254.3 345.0 C254.3 346.6 254.3 348.3 254.4 350.0 C254.4 351.6 254.5 353.3 254.6 355.0 C254.6 356.6 254.7 358.3 254.8 360.0 C254.8 361.6 254.8 363.3 254.8 365.0 C254.7 366.6 254.6 368.3 254.5 370.0 C254.5 371.6 254.5 373.3 254.4 375.0 C254.4 376.6 254.3 378.3 254.3 380.0 C254.2 381.6 254.2 383.3 254.1 385.0 C254.1 386.6 254.0 388.3 253.9 390.0 C253.8 391.6 253.7 393.3 253.7 395.0 C253.7 396.6 253.8 398.3 253.9 400.0 C253.9 401.6 253.8 403.3 253.7 405.0 C253.7 406.6 253.6 408.3 253.6 410.0 C253.6 411.6 253.7 413.3 253.7 415.0 C253.8 416.6 253.9 418.3 253.9 420.0 C254.0 421.6 254.0 423.3 254.1 425.0 C254.2 426.6 254.3 428.3 254.3 430.0 C254.4 431.6 254.5 433.3 254.5 435.0 C254.6 436.6 254.6 438.3 254.6 440.0 C254.6 441.6 254.6 443.3 254.6 445.0 C254.6 446.6 254.4 448.3 254.4 450.0 C254.4 451.6 254.5 453.3 254.5 455.0 C254.5 456.6 254.5 458.3 254.5 460.0 C254.5 461.6 254.5 463.3 254.5 465.0 C254.5 466.6 254.5 469.1 254.5 470.0" stroke="#be6647" stroke-width="1.3" fill="none" opacity="0.6"/><path d="M259.2 189.9 C259.2 190.8 259.2 193.3 259.2 194.9 C259.2 196.6 259.2 198.3 259.2 199.9 C259.2 201.6 259.2 203.3 259.2 204.9 C259.2 206.6 259.2 208.3 259.1 209.9 C259.1 211.6 259.0 213.3 259.0 214.9 C258.9 216.6 258.9 218.3 258.8 219.9 C258.7 221.6 258.6 223.3 258.5 224.9 C258.4 226.6 258.3 228.3 258.3 229.9 C258.2 231.6 258.2 233.3 258.1 234.9 C258.1 236.6 258.0 238.3 258.0 239.9 C257.9 241.6 257.9 243.3 257.9 244.9 C257.9 246.6 257.8 248.3 257.8 249.9 C257.8 251.6 257.7 253.3 257.7 254.9 C257.7 256.6 257.7 258.3 257.7 259.9 C257.7 261.6 257.6 263.3 257.6 264.9 C257.6 266.6 257.6 268.3 257.6 269.9 C257.6 271.6 257.6 273.3 257.6 274.9 C257.6 276.6 257.6 278.3 257.6 279.9 C257.6 281.6 257.5 283.3 257.6 284.9 C257.7 286.6 258.2 288.3 258.2 289.9 C258.3 291.6 258.0 293.3 257.8 294.9 C257.6 296.6 257.1 298.3 256.9 299.9 C256.6 301.6 256.4 303.3 256.3 304.9 C256.1 306.6 256.1 308.3 256.0 309.9 C256.0 311.6 256.1 313.3 256.1 314.9 C256.1 316.6 256.0 318.3 256.0 319.9 C256.0 321.6 255.9 323.3 255.8 324.9 C255.8 326.6 255.8 328.3 255.8 329.9 C255.8 331.6 255.8 333.3 255.8 334.9 C255.9 336.6 255.9 338.3 256.0 339.9 C256.0 341.6 256.1 343.3 256.1 344.9 C256.2 346.6 256.2 348.3 256.3 349.9 C256.3 351.6 256.4 353.3 256.5 354.9 C256.5 356.6 256.6 358.3 256.7 359.9 C256.7 361.6 256.7 363.3 256.7 364.9 C256.7 366.6 256.5 368.3 256.5 369.9 C256.4 371.6 256.4 373.3 256.3 374.9 C256.3 376.6 256.2 378.3 256.2 379.9 C256.1 381.6 256.0 383.3 256.0 384.9 C255.9 386.6 255.8 388.3 255.7 389.9 C255.6 391.6 255.5 393.3 255.5 394.9 C255.5 396.6 255.6 398.3 255.7 399.9 C255.7 401.6 255.6 403.3 255.6 404.9 C255.5 406.6 255.4 408.3 255.4 409.9 C255.4 411.6 255.5 413.3 255.6 414.9 C255.6 416.6 255.7 418.3 255.8 419.9 C255.9 421.6 255.9 423.3 256.0 424.9 C256.1 426.6 256.2 428.3 256.3 429.9 C256.3 431.6 256.4 433.3 256.5 434.9 C256.5 436.6 256.5 438.3 256.5 439.9 C256.6 441.6 256.6 443.3 256.6 444.9 C256.5 446.6 256.3 448.3 256.3 449.9 C256.3 451.6 256.4 453.3 256.4 454.9 C256.4 456.6 256.4 458.3 256.4 459.9 C256.4 461.6 256.4 463.3 256.4 464.9 C256.4 466.6 256.4 469.1 256.4 469.9" stroke="#cb8160" stroke-width="1.8" fill="none" opacity="0.75"/><path d="M262.8 189.8 C262.8 190.7 262.8 193.2 262.8 194.8 C262.8 196.5 262.8 198.2 262.8 199.8 C262.8 201.5 262.8 203.2 262.8 204.8 C262.8 206.5 262.7 208.2 262.7 209.8 C262.6 211.5 262.6 213.2 262.5 214.8 C262.4 216.5 262.3 218.2 262.2 219.8 C262.1 221.5 261.9 223.2 261.8 224.8 C261.7 226.5 261.6 228.2 261.5 229.8 C261.4 231.5 261.3 233.2 261.3 234.8 C261.2 236.5 261.1 238.2 261.1 239.8 C261.0 241.5 261.0 243.2 260.9 244.8 C260.9 246.5 260.8 248.2 260.8 249.8 C260.8 251.5 260.7 253.2 260.7 254.8 C260.7 256.5 260.6 258.2 260.6 259.8 C260.6 261.5 260.6 263.2 260.6 264.8 C260.5 266.5 260.5 268.2 260.5 269.8 C260.5 271.5 260.5 273.2 260.5 274.8 C260.5 276.5 260.5 278.2 260.5 279.8 C260.5 281.5 260.5 283.2 260.6 284.8 C260.7 286.5 261.1 288.2 261.1 289.8 C261.1 291.5 260.8 293.2 260.5 294.8 C260.3 296.5 259.7 298.2 259.4 299.8 C259.1 301.5 258.9 303.2 258.7 304.8 C258.5 306.5 258.4 308.2 258.4 309.8 C258.4 311.5 258.4 313.2 258.4 314.8 C258.4 316.5 258.3 318.2 258.3 319.8 C258.2 321.5 258.1 323.2 258.1 324.8 C258.1 326.5 258.0 328.2 258.1 329.8 C258.1 331.5 258.2 333.2 258.2 334.8 C258.3 336.5 258.4 338.2 258.4 339.8 C258.5 341.5 258.5 343.2 258.6 344.8 C258.7 346.5 258.7 348.2 258.8 349.8 C258.9 351.5 258.9 353.2 259.0 354.8 C259.1 356.5 259.2 358.2 259.2 359.8 C259.2 361.5 259.3 363.2 259.2 364.8 C259.2 366.5 259.0 368.2 259.0 369.8 C258.9 371.5 258.9 373.2 258.8 374.8 C258.7 376.5 258.7 378.2 258.6 379.8 C258.5 381.5 258.5 383.2 258.4 384.8 C258.3 386.5 258.2 388.2 258.1 389.8 C258.0 391.5 257.9 393.2 257.9 394.8 C257.9 396.5 258.0 398.2 258.0 399.8 C258.0 401.5 258.0 403.2 257.9 404.8 C257.9 406.5 257.8 408.2 257.8 409.8 C257.8 411.5 257.9 413.2 258.0 414.8 C258.1 416.5 258.1 418.2 258.2 419.8 C258.3 421.5 258.4 423.2 258.5 424.8 C258.6 426.5 258.7 428.2 258.8 429.8 C258.9 431.5 259.0 433.2 259.0 434.8 C259.1 436.5 259.1 438.2 259.1 439.8 C259.2 441.5 259.2 443.2 259.1 444.8 C259.1 446.5 258.8 448.2 258.8 449.8 C258.7 451.5 258.8 453.2 258.8 454.8 C258.8 456.5 258.8 458.2 258.8 459.8 C258.8 461.5 258.8 463.2 258.8 464.8 C258.8 466.5 258.8 469.0 258.8 469.8" stroke="#cd8866" stroke-width="2.4" fill="none" opacity="0.6"/><path d="M265.3 189.8 C265.3 190.6 265.3 193.1 265.3 194.8 C265.3 196.4 265.3 198.1 265.3 199.8 C265.3 201.4 265.3 203.1 265.3 204.8 C265.3 206.4 265.2 208.1 265.2 209.8 C265.1 211.4 265.0 213.1 264.9 214.8 C264.8 216.4 264.7 218.1 264.6 219.8 C264.5 221.4 264.3 223.1 264.1 224.8 C264.0 226.4 263.8 228.1 263.7 229.8 C263.6 231.4 263.5 233.1 263.5 234.8 C263.4 236.4 263.3 238.1 263.2 239.8 C263.1 241.4 263.1 243.1 263.0 244.8 C263.0 246.4 262.9 248.1 262.9 249.8 C262.9 251.4 262.8 253.1 262.8 254.8 C262.7 256.4 262.7 258.1 262.7 259.8 C262.6 261.4 262.6 263.1 262.6 264.8 C262.6 266.4 262.5 268.1 262.5 269.8 C262.5 271.4 262.5 273.1 262.5 274.8 C262.5 276.4 262.5 278.1 262.6 279.8 C262.6 281.4 262.5 283.1 262.6 284.8 C262.7 286.4 263.1 288.1 263.1 289.8 C263.0 291.4 262.7 293.1 262.4 294.8 C262.1 296.4 261.6 298.1 261.2 299.8 C260.9 301.4 260.6 303.1 260.4 304.8 C260.2 306.4 260.1 308.1 260.0 309.8 C260.0 311.4 260.0 313.1 260.0 314.8 C260.0 316.4 259.9 318.1 259.9 319.8 C259.8 321.4 259.7 323.1 259.7 324.8 C259.6 326.4 259.6 328.1 259.7 329.8 C259.7 331.4 259.8 333.1 259.9 334.8 C260.0 336.4 260.0 338.1 260.1 339.8 C260.2 341.4 260.3 343.1 260.3 344.8 C260.4 346.4 260.5 348.1 260.5 349.8 C260.6 351.4 260.7 353.1 260.7 354.8 C260.8 356.4 260.9 358.1 261.0 359.8 C261.0 361.4 261.0 363.1 261.0 364.8 C260.9 366.4 260.8 368.1 260.7 369.8 C260.6 371.4 260.6 373.1 260.5 374.8 C260.5 376.4 260.4 378.1 260.3 379.8 C260.2 381.4 260.2 383.1 260.1 384.8 C260.0 386.4 259.9 388.1 259.8 389.8 C259.7 391.4 259.6 393.1 259.6 394.8 C259.5 396.4 259.7 398.1 259.7 399.8 C259.7 401.4 259.6 403.1 259.6 404.8 C259.5 406.4 259.4 408.1 259.4 409.8 C259.5 411.4 259.6 413.1 259.7 414.8 C259.7 416.4 259.8 418.1 259.9 419.8 C260.0 421.4 260.1 423.1 260.2 424.8 C260.3 426.4 260.4 428.1 260.6 429.8 C260.7 431.4 260.8 433.1 260.8 434.8 C260.9 436.4 260.9 438.1 260.9 439.8 C261.0 441.4 261.0 443.1 260.9 444.8 C260.9 446.4 260.6 448.1 260.5 449.8 C260.4 451.4 260.5 453.1 260.5 454.8 C260.5 456.4 260.5 458.1 260.5 459.8 C260.5 461.4 260.5 463.1 260.5 464.8 C260.5 466.4 260.5 468.9 260.5 469.8" stroke="#c67452" stroke-width="1.8" fill="none" opacity="0.75"/><path d="M268.0 189.7 C268.0 190.5 268.0 193.0 268.0 194.7 C268.0 196.3 268.0 198.0 268.0 199.7 C268.0 201.3 268.1 203.0 268.0 204.7 C268.0 206.3 268.0 208.0 267.9 209.7 C267.9 211.3 267.7 213.0 267.6 214.7 C267.5 216.3 267.4 218.0 267.2 219.7 C267.1 221.3 266.9 223.0 266.7 224.7 C266.5 226.3 266.3 228.0 266.2 229.7 C266.1 231.3 266.0 233.0 265.9 234.7 C265.8 236.3 265.7 238.0 265.6 239.7 C265.5 241.3 265.5 243.0 265.4 244.7 C265.3 246.3 265.3 248.0 265.2 249.7 C265.2 251.3 265.1 253.0 265.1 254.7 C265.0 256.3 265.0 258.0 265.0 259.7 C264.9 261.3 264.9 263.0 264.9 264.7 C264.8 266.3 264.8 268.0 264.8 269.7 C264.8 271.3 264.8 273.0 264.8 274.7 C264.8 276.3 264.8 278.0 264.8 279.7 C264.8 281.3 264.8 283.0 264.9 284.7 C264.9 286.3 265.3 288.0 265.3 289.7 C265.2 291.3 264.9 293.0 264.5 294.7 C264.2 296.3 263.6 298.0 263.2 299.7 C262.8 301.3 262.5 303.0 262.3 304.7 C262.1 306.3 262.0 308.0 261.9 309.7 C261.8 311.3 261.9 313.0 261.8 314.7 C261.8 316.3 261.7 318.0 261.7 319.7 C261.6 321.3 261.5 323.0 261.4 324.7 C261.4 326.3 261.4 328.0 261.4 329.7 C261.5 331.3 261.7 333.0 261.8 334.7 C261.8 336.3 261.9 338.0 262.0 339.7 C262.1 341.3 262.2 343.0 262.2 344.7 C262.3 346.3 262.4 348.0 262.5 349.7 C262.5 351.3 262.6 353.0 262.7 354.7 C262.8 356.3 262.9 358.0 262.9 359.7 C263.0 361.3 263.0 363.0 262.9 364.7 C262.9 366.3 262.7 368.0 262.7 369.7 C262.6 371.3 262.5 373.0 262.4 374.7 C262.4 376.3 262.3 378.0 262.2 379.7 C262.1 381.3 262.0 383.0 262.0 384.7 C261.9 386.3 261.7 388.0 261.6 389.7 C261.6 391.3 261.4 393.0 261.4 394.7 C261.4 396.3 261.5 398.0 261.5 399.7 C261.5 401.3 261.5 403.0 261.4 404.7 C261.4 406.3 261.3 408.0 261.3 409.7 C261.3 411.3 261.4 413.0 261.5 414.7 C261.6 416.3 261.7 418.0 261.8 419.7 C261.9 421.3 262.0 423.0 262.1 424.7 C262.2 426.3 262.4 428.0 262.5 429.7 C262.6 431.3 262.7 433.0 262.8 434.7 C262.9 436.3 262.9 438.0 263.0 439.7 C263.0 441.3 263.0 443.0 262.9 444.7 C262.8 446.3 262.5 448.0 262.4 449.7 C262.3 451.3 262.4 453.0 262.4 454.7 C262.4 456.3 262.4 458.0 262.4 459.7 C262.4 461.3 262.4 463.0 262.4 464.7 C262.4 466.3 262.4 468.8 262.4 469.7" stroke="#c67452" stroke-width="0.7" fill="none" opacity="0.45"/><path d="M270.3 189.6 C270.3 190.4 270.3 192.9 270.3 194.6 C270.3 196.2 270.3 197.9 270.3 199.6 C270.3 201.2 270.3 202.9 270.3 204.6 C270.2 206.2 270.2 207.9 270.1 209.6 C270.0 211.2 269.9 212.9 269.8 214.6 C269.6 216.2 269.5 217.9 269.3 219.6 C269.2 221.2 268.9 222.9 268.7 224.6 C268.5 226.2 268.3 227.9 268.2 229.6 C268.0 231.2 267.9 232.9 267.8 234.6 C267.7 236.2 267.6 237.9 267.5 239.6 C267.4 241.2 267.3 242.9 267.3 244.6 C267.2 246.2 267.1 247.9 267.1 249.6 C267.0 251.2 267.0 252.9 266.9 254.6 C266.9 256.2 266.8 257.9 266.8 259.6 C266.7 261.2 266.7 262.9 266.7 264.6 C266.6 266.2 266.6 267.9 266.6 269.6 C266.6 271.2 266.5 272.9 266.6 274.6 C266.6 276.2 266.6 277.9 266.6 279.6 C266.6 281.2 266.6 282.9 266.7 284.6 C266.7 286.2 267.1 287.9 267.0 289.6 C266.9 291.2 266.6 292.9 266.2 294.6 C265.8 296.2 265.2 297.9 264.8 299.6 C264.4 301.2 264.0 302.9 263.8 304.6 C263.5 306.2 263.4 307.9 263.3 309.6 C263.3 311.2 263.3 312.9 263.2 314.6 C263.2 316.2 263.1 317.9 263.1 319.6 C263.0 321.2 262.9 322.9 262.8 324.6 C262.8 326.2 262.8 327.9 262.9 329.6 C262.9 331.2 263.1 332.9 263.2 334.6 C263.3 336.2 263.4 337.9 263.5 339.6 C263.6 341.2 263.7 342.9 263.7 344.6 C263.8 346.2 263.9 347.9 264.0 349.6 C264.1 351.2 264.2 352.9 264.2 354.6 C264.3 356.2 264.4 357.9 264.5 359.6 C264.5 361.2 264.5 362.9 264.5 364.6 C264.5 366.2 264.3 367.9 264.2 369.6 C264.1 371.2 264.0 372.9 264.0 374.6 C263.9 376.2 263.8 377.9 263.7 379.6 C263.6 381.2 263.5 382.9 263.4 384.6 C263.3 386.2 263.2 387.9 263.1 389.6 C263.0 391.2 262.9 392.9 262.9 394.6 C262.8 396.2 263.0 397.9 263.0 399.6 C263.0 401.2 262.9 402.9 262.9 404.6 C262.9 406.2 262.7 407.9 262.8 409.6 C262.8 411.2 262.9 412.9 263.0 414.6 C263.1 416.2 263.2 417.9 263.3 419.6 C263.4 421.2 263.5 422.9 263.7 424.6 C263.8 426.2 263.9 427.9 264.1 429.6 C264.2 431.2 264.3 432.9 264.4 434.6 C264.5 436.2 264.5 437.9 264.6 439.6 C264.6 441.2 264.6 442.9 264.5 444.6 C264.4 446.2 264.0 447.9 263.9 449.6 C263.8 451.2 263.9 452.9 263.9 454.6 C263.9 456.2 263.9 457.9 263.9 459.6 C263.9 461.2 263.9 462.9 263.9 464.6 C263.9 466.2 263.9 468.7 263.9 469.6" stroke="#be6647" stroke-width="1.3" fill="none" opacity="0.6"/><path d="M273.6 189.4 C273.6 190.2 273.6 192.7 273.6 194.4 C273.6 196.1 273.6 197.7 273.6 199.4 C273.6 201.1 273.7 202.7 273.6 204.4 C273.6 206.1 273.6 207.7 273.5 209.4 C273.4 211.1 273.2 212.7 273.1 214.4 C272.9 216.1 272.8 217.7 272.6 219.4 C272.3 221.1 272.1 222.7 271.8 224.4 C271.6 226.1 271.3 227.7 271.2 229.4 C271.0 231.1 270.9 232.7 270.8 234.4 C270.7 236.1 270.5 237.7 270.4 239.4 C270.3 241.1 270.2 242.7 270.1 244.4 C270.0 246.1 270.0 247.7 269.9 249.4 C269.8 251.1 269.8 252.7 269.7 254.4 C269.6 256.1 269.6 257.7 269.6 259.4 C269.5 261.1 269.5 262.7 269.4 264.4 C269.4 266.1 269.3 267.7 269.3 269.4 C269.3 271.1 269.3 272.7 269.3 274.4 C269.3 276.1 269.3 277.7 269.4 279.4 C269.4 281.1 269.4 282.7 269.4 284.4 C269.5 286.1 269.8 287.7 269.7 289.4 C269.6 291.1 269.2 292.7 268.7 294.4 C268.3 296.1 267.6 297.7 267.2 299.4 C266.7 301.1 266.3 302.7 266.1 304.4 C265.8 306.1 265.7 307.7 265.6 309.4 C265.5 311.1 265.5 312.7 265.4 314.4 C265.4 316.1 265.3 317.7 265.2 319.4 C265.2 321.1 265.0 322.7 265.0 324.4 C265.0 326.1 264.9 327.7 265.0 329.4 C265.1 331.1 265.4 332.7 265.5 334.4 C265.6 336.1 265.7 337.7 265.8 339.4 C265.9 341.1 266.0 342.7 266.1 344.4 C266.2 346.1 266.3 347.7 266.3 349.4 C266.4 351.1 266.5 352.7 266.6 354.4 C266.7 356.1 266.8 357.7 266.8 359.4 C266.9 361.1 266.9 362.7 266.9 364.4 C266.8 366.1 266.7 367.7 266.6 369.4 C266.5 371.1 266.4 372.7 266.3 374.4 C266.2 376.1 266.1 377.7 266.0 379.4 C265.9 381.1 265.8 382.7 265.7 384.4 C265.6 386.1 265.5 387.7 265.4 389.4 C265.3 391.1 265.1 392.7 265.1 394.4 C265.1 396.1 265.2 397.7 265.2 399.4 C265.2 401.1 265.2 402.7 265.1 404.4 C265.1 406.1 265.0 407.7 265.0 409.4 C265.0 411.1 265.2 412.7 265.3 414.4 C265.4 416.1 265.5 417.7 265.6 419.4 C265.8 421.1 265.9 422.7 266.0 424.4 C266.1 426.1 266.3 427.7 266.4 429.4 C266.6 431.1 266.7 432.7 266.8 434.4 C266.9 436.1 267.0 437.7 267.0 439.4 C267.0 441.1 267.1 442.7 267.0 444.4 C266.8 446.1 266.4 447.7 266.3 449.4 C266.1 451.1 266.2 452.7 266.2 454.4 C266.2 456.1 266.2 457.7 266.2 459.4 C266.2 461.1 266.2 462.7 266.2 464.4 C266.2 466.1 266.2 468.6 266.2 469.4" stroke="#96412f" stroke-width="1.8" fill="none" opacity="0.75"/><path d="M275.7 189.3 C275.7 190.1 275.7 192.6 275.7 194.3 C275.7 196.0 275.7 197.6 275.7 199.3 C275.7 201.0 275.7 202.6 275.7 204.3 C275.7 206.0 275.6 207.6 275.5 209.3 C275.4 211.0 275.3 212.6 275.1 214.3 C274.9 216.0 274.8 217.6 274.5 219.3 C274.3 221.0 274.0 222.6 273.7 224.3 C273.5 226.0 273.2 227.6 273.0 229.3 C272.8 231.0 272.7 232.6 272.6 234.3 C272.5 236.0 272.3 237.6 272.2 239.3 C272.1 241.0 272.0 242.6 271.9 244.3 C271.8 246.0 271.7 247.6 271.7 249.3 C271.6 251.0 271.5 252.6 271.4 254.3 C271.4 256.0 271.3 257.6 271.3 259.3 C271.2 261.0 271.2 262.6 271.1 264.3 C271.1 266.0 271.0 267.6 271.0 269.3 C271.0 271.0 271.0 272.6 271.0 274.3 C271.0 276.0 271.0 277.6 271.1 279.3 C271.1 281.0 271.1 282.6 271.1 284.3 C271.2 286.0 271.5 287.6 271.4 289.3 C271.2 291.0 270.8 292.6 270.3 294.3 C269.9 296.0 269.1 297.6 268.7 299.3 C268.2 301.0 267.8 302.6 267.5 304.3 C267.2 306.0 267.1 307.6 266.9 309.3 C266.8 311.0 266.8 312.6 266.8 314.3 C266.7 316.0 266.6 317.6 266.6 319.3 C266.5 321.0 266.3 322.6 266.3 324.3 C266.3 326.0 266.3 327.6 266.4 329.3 C266.5 331.0 266.7 332.6 266.9 334.3 C267.0 336.0 267.1 337.6 267.2 339.3 C267.3 341.0 267.4 342.6 267.5 344.3 C267.6 346.0 267.7 347.6 267.8 349.3 C267.9 351.0 268.0 352.6 268.1 354.3 C268.1 356.0 268.3 357.6 268.3 359.3 C268.4 361.0 268.4 362.6 268.4 364.3 C268.3 366.0 268.1 367.6 268.0 369.3 C267.9 371.0 267.8 372.6 267.7 374.3 C267.7 376.0 267.6 377.6 267.5 379.3 C267.4 381.0 267.3 382.6 267.1 384.3 C267.0 386.0 266.9 387.6 266.8 389.3 C266.7 391.0 266.5 392.6 266.5 394.3 C266.5 396.0 266.6 397.6 266.6 399.3 C266.6 401.0 266.5 402.6 266.5 404.3 C266.5 406.0 266.4 407.6 266.4 409.3 C266.4 411.0 266.6 412.6 266.7 414.3 C266.8 416.0 266.9 417.6 267.1 419.3 C267.2 421.0 267.3 422.6 267.4 424.3 C267.6 426.0 267.8 427.6 267.9 429.3 C268.1 431.0 268.2 432.6 268.3 434.3 C268.4 436.0 268.5 437.6 268.5 439.3 C268.5 441.0 268.6 442.6 268.5 444.3 C268.3 446.0 267.8 447.6 267.7 449.3 C267.6 451.0 267.6 452.6 267.6 454.3 C267.6 456.0 267.6 457.6 267.6 459.3 C267.6 461.0 267.6 462.6 267.6 464.3 C267.6 466.0 267.6 468.5 267.6 469.3" stroke="#cb8160" stroke-width="1.3" fill="none" opacity="0.75"/><path d="M277.2 189.2 C277.2 190.0 277.2 192.5 277.2 194.2 C277.2 195.9 277.2 197.5 277.2 199.2 C277.2 200.9 277.2 202.5 277.2 204.2 C277.1 205.9 277.1 207.5 277.0 209.2 C276.9 210.9 276.7 212.5 276.5 214.2 C276.3 215.9 276.2 217.5 275.9 219.2 C275.7 220.9 275.3 222.5 275.1 224.2 C274.8 225.9 274.5 227.5 274.3 229.2 C274.1 230.9 274.0 232.5 273.9 234.2 C273.7 235.9 273.5 237.5 273.4 239.2 C273.3 240.9 273.2 242.5 273.1 244.2 C273.0 245.9 272.9 247.5 272.9 249.2 C272.8 250.9 272.7 252.5 272.6 254.2 C272.6 255.9 272.5 257.5 272.4 259.2 C272.4 260.9 272.4 262.5 272.3 264.2 C272.3 265.9 272.2 267.5 272.2 269.2 C272.2 270.9 272.1 272.5 272.2 274.2 C272.2 275.9 272.2 277.5 272.2 279.2 C272.3 280.9 272.3 282.5 272.3 284.2 C272.4 285.9 272.7 287.5 272.5 289.2 C272.3 290.9 271.9 292.5 271.4 294.2 C270.9 295.9 270.2 297.5 269.7 299.2 C269.2 300.9 268.7 302.5 268.4 304.2 C268.1 305.9 268.0 307.5 267.9 309.2 C267.8 310.9 267.8 312.5 267.7 314.2 C267.6 315.9 267.6 317.5 267.5 319.2 C267.4 320.9 267.3 322.5 267.2 324.2 C267.2 325.9 267.2 327.5 267.3 329.2 C267.4 330.9 267.7 332.5 267.8 334.2 C268.0 335.9 268.1 337.5 268.2 339.2 C268.3 340.9 268.4 342.5 268.5 344.2 C268.6 345.9 268.7 347.5 268.8 349.2 C268.9 350.9 269.0 352.5 269.1 354.2 C269.1 355.9 269.3 357.5 269.3 359.2 C269.4 360.9 269.4 362.5 269.4 364.2 C269.3 365.9 269.1 367.5 269.0 369.2 C268.9 370.9 268.8 372.5 268.7 374.2 C268.6 375.9 268.5 377.5 268.4 379.2 C268.3 380.9 268.2 382.5 268.1 384.2 C268.0 385.9 267.9 387.5 267.7 389.2 C267.6 390.9 267.5 392.5 267.4 394.2 C267.4 395.9 267.5 397.5 267.5 399.2 C267.5 400.9 267.5 402.5 267.5 404.2 C267.4 405.9 267.3 407.5 267.3 409.2 C267.4 410.9 267.5 412.5 267.7 414.2 C267.8 415.9 267.9 417.5 268.0 419.2 C268.2 420.9 268.3 422.5 268.4 424.2 C268.6 425.9 268.8 427.5 268.9 429.2 C269.1 430.9 269.3 432.5 269.4 434.2 C269.5 435.9 269.5 437.5 269.6 439.2 C269.6 440.9 269.6 442.5 269.5 444.2 C269.3 445.9 268.8 447.5 268.7 449.2 C268.5 450.9 268.6 452.5 268.6 454.2 C268.6 455.9 268.6 457.5 268.6 459.2 C268.6 460.9 268.6 462.5 268.6 464.2 C268.6 465.9 268.6 468.4 268.6 469.2" stroke="#b15a3e" stroke-width="0.7" fill="none" opacity="0.9"/><path d="M280.9 188.9 C280.9 189.8 280.9 192.3 280.9 193.9 C280.9 195.6 280.9 197.3 280.9 198.9 C280.9 200.6 281.0 202.3 280.9 203.9 C280.9 205.6 280.8 207.3 280.7 208.9 C280.6 210.6 280.4 212.3 280.2 213.9 C280.0 215.6 279.8 217.3 279.5 218.9 C279.2 220.6 278.9 222.3 278.6 223.9 C278.2 225.6 277.9 227.3 277.7 228.9 C277.5 230.6 277.4 232.3 277.2 233.9 C277.0 235.6 276.8 237.3 276.7 238.9 C276.5 240.6 276.4 242.3 276.3 243.9 C276.2 245.6 276.1 247.3 276.0 248.9 C275.9 250.6 275.8 252.3 275.8 253.9 C275.7 255.6 275.6 257.3 275.6 258.9 C275.5 260.6 275.5 262.3 275.4 263.9 C275.4 265.6 275.3 267.3 275.3 268.9 C275.2 270.6 275.2 272.3 275.2 273.9 C275.2 275.6 275.3 277.3 275.3 278.9 C275.4 280.6 275.4 282.3 275.4 283.9 C275.4 285.6 275.7 287.3 275.5 288.9 C275.3 290.6 274.8 292.3 274.3 293.9 C273.7 295.6 272.9 297.3 272.4 298.9 C271.8 300.6 271.3 302.3 271.0 303.9 C270.7 305.6 270.5 307.3 270.4 308.9 C270.2 310.6 270.2 312.3 270.2 313.9 C270.1 315.6 270.0 317.3 269.9 318.9 C269.8 320.6 269.6 322.3 269.6 323.9 C269.6 325.6 269.6 327.3 269.7 328.9 C269.8 330.6 270.2 332.3 270.4 333.9 C270.5 335.6 270.6 337.3 270.7 338.9 C270.8 340.6 271.0 342.3 271.1 343.9 C271.2 345.6 271.3 347.3 271.4 348.9 C271.5 350.6 271.6 352.3 271.7 353.9 C271.8 355.6 271.9 357.3 272.0 358.9 C272.0 360.6 272.1 362.3 272.0 363.9 C272.0 365.6 271.8 367.3 271.7 368.9 C271.6 370.6 271.5 372.3 271.4 373.9 C271.3 375.6 271.1 377.3 271.0 378.9 C270.9 380.6 270.8 382.3 270.7 383.9 C270.5 385.6 270.4 387.3 270.3 388.9 C270.2 390.6 270.0 392.3 270.0 393.9 C269.9 395.6 270.0 397.3 270.0 398.9 C270.0 400.6 270.0 402.3 270.0 403.9 C269.9 405.6 269.8 407.3 269.9 408.9 C269.9 410.6 270.1 412.3 270.2 413.9 C270.3 415.6 270.5 417.3 270.6 418.9 C270.8 420.6 270.9 422.3 271.1 423.9 C271.2 425.6 271.4 427.3 271.6 428.9 C271.8 430.6 272.0 432.3 272.1 433.9 C272.2 435.6 272.3 437.3 272.3 438.9 C272.3 440.6 272.4 442.3 272.2 443.9 C272.0 445.6 271.5 447.3 271.3 448.9 C271.1 450.6 271.2 452.3 271.2 453.9 C271.2 455.6 271.2 457.3 271.2 458.9 C271.2 460.6 271.2 462.3 271.2 463.9 C271.2 465.6 271.2 468.1 271.2 468.9" stroke="#c67452" stroke-width="1.8" fill="none" opacity="0.45"/><path d="M282.8 188.8 C282.8 189.6 282.8 192.1 282.8 193.8 C282.8 195.5 282.8 197.1 282.8 198.8 C282.8 200.5 282.9 202.1 282.8 203.8 C282.8 205.5 282.7 207.1 282.6 208.8 C282.5 210.5 282.3 212.1 282.0 213.8 C281.8 215.5 281.6 217.1 281.3 218.8 C281.0 220.5 280.6 222.1 280.3 223.8 C280.0 225.5 279.6 227.1 279.4 228.8 C279.1 230.5 279.0 232.1 278.8 233.8 C278.7 235.5 278.5 237.1 278.3 238.8 C278.1 240.5 278.0 242.1 277.9 243.8 C277.8 245.5 277.7 247.1 277.6 248.8 C277.5 250.5 277.4 252.1 277.3 253.8 C277.3 255.5 277.2 257.1 277.1 258.8 C277.1 260.5 277.0 262.1 277.0 263.8 C276.9 265.5 276.8 267.1 276.8 268.8 C276.8 270.5 276.7 272.1 276.8 273.8 C276.8 275.5 276.8 277.1 276.9 278.8 C276.9 280.5 276.9 282.1 277.0 283.8 C277.0 285.5 277.2 287.1 277.0 288.8 C276.8 290.5 276.2 292.1 275.7 293.8 C275.2 295.5 274.3 297.1 273.7 298.8 C273.2 300.5 272.6 302.1 272.3 303.8 C271.9 305.5 271.8 307.1 271.6 308.8 C271.5 310.5 271.5 312.1 271.4 313.8 C271.3 315.5 271.2 317.1 271.1 318.8 C271.0 320.5 270.9 322.1 270.8 323.8 C270.8 325.5 270.8 327.1 270.9 328.8 C271.1 330.5 271.5 332.1 271.6 333.8 C271.8 335.5 271.9 337.1 272.0 338.8 C272.1 340.5 272.3 342.1 272.4 343.8 C272.5 345.5 272.6 347.1 272.8 348.8 C272.9 350.5 272.9 352.1 273.0 353.8 C273.1 355.5 273.3 357.1 273.3 358.8 C273.4 360.5 273.4 362.1 273.4 363.8 C273.3 365.5 273.1 367.1 273.0 368.8 C272.9 370.5 272.8 372.1 272.7 373.8 C272.6 375.5 272.4 377.1 272.3 378.8 C272.2 380.5 272.1 382.1 272.0 383.8 C271.8 385.5 271.7 387.1 271.5 388.8 C271.4 390.5 271.3 392.1 271.2 393.8 C271.2 395.5 271.3 397.1 271.3 398.8 C271.3 400.5 271.3 402.1 271.2 403.8 C271.2 405.5 271.1 407.1 271.1 408.8 C271.2 410.5 271.3 412.1 271.5 413.8 C271.6 415.5 271.8 417.1 271.9 418.8 C272.1 420.5 272.2 422.1 272.4 423.8 C272.5 425.5 272.7 427.1 272.9 428.8 C273.1 430.5 273.3 432.1 273.4 433.8 C273.6 435.5 273.6 437.1 273.7 438.8 C273.7 440.5 273.8 442.1 273.6 443.8 C273.4 445.5 272.8 447.1 272.6 448.8 C272.4 450.5 272.5 452.1 272.5 453.8 C272.5 455.5 272.5 457.1 272.5 458.8 C272.5 460.5 272.5 462.1 272.5 463.8 C272.5 465.5 272.5 468.0 272.5 468.8" stroke="#c47859" stroke-width="1.8" fill="none" opacity="0.45"/><path d="M285.2 188.6 C285.2 189.4 285.2 191.9 285.2 193.6 C285.2 195.3 285.2 196.9 285.2 198.6 C285.2 200.3 285.2 201.9 285.2 203.6 C285.1 205.3 285.1 206.9 284.9 208.6 C284.8 210.3 284.5 211.9 284.3 213.6 C284.1 215.3 283.9 216.9 283.5 218.6 C283.2 220.3 282.8 221.9 282.4 223.6 C282.1 225.3 281.7 226.9 281.5 228.6 C281.2 230.3 281.1 231.9 280.9 233.6 C280.7 235.3 280.5 236.9 280.3 238.6 C280.1 240.3 280.0 241.9 279.9 243.6 C279.8 245.3 279.7 246.9 279.6 248.6 C279.5 250.3 279.4 251.9 279.3 253.6 C279.2 255.3 279.1 256.9 279.0 258.6 C279.0 260.3 278.9 261.9 278.9 263.6 C278.8 265.3 278.7 266.9 278.7 268.6 C278.7 270.3 278.6 271.9 278.6 273.6 C278.7 275.3 278.7 276.9 278.8 278.6 C278.8 280.3 278.9 281.9 278.9 283.6 C278.9 285.3 279.1 286.9 278.9 288.6 C278.6 290.3 278.0 291.9 277.5 293.6 C276.9 295.3 276.0 296.9 275.4 298.6 C274.8 300.3 274.2 301.9 273.9 303.6 C273.5 305.3 273.3 306.9 273.2 308.6 C273.0 310.3 273.0 311.9 272.9 313.6 C272.8 315.3 272.7 316.9 272.6 318.6 C272.5 320.3 272.3 321.9 272.3 323.6 C272.3 325.3 272.3 326.9 272.4 328.6 C272.6 330.3 273.0 331.9 273.2 333.6 C273.4 335.3 273.5 336.9 273.6 338.6 C273.7 340.3 273.9 341.9 274.0 343.6 C274.1 345.3 274.3 346.9 274.4 348.6 C274.5 350.3 274.6 351.9 274.7 353.6 C274.8 355.3 274.9 356.9 275.0 358.6 C275.0 360.3 275.1 361.9 275.0 363.6 C275.0 365.3 274.7 366.9 274.6 368.6 C274.5 370.3 274.4 371.9 274.3 373.6 C274.2 375.3 274.0 376.9 273.9 378.6 C273.8 380.3 273.7 381.9 273.5 383.6 C273.4 385.3 273.2 386.9 273.1 388.6 C273.0 390.3 272.8 391.9 272.8 393.6 C272.7 395.3 272.8 396.9 272.8 398.6 C272.8 400.3 272.8 401.9 272.8 403.6 C272.7 405.3 272.6 406.9 272.7 408.6 C272.7 410.3 272.9 411.9 273.0 413.6 C273.2 415.3 273.4 416.9 273.5 418.6 C273.7 420.3 273.8 421.9 274.0 423.6 C274.2 425.3 274.4 426.9 274.6 428.6 C274.7 430.3 275.0 431.9 275.1 433.6 C275.2 435.3 275.3 436.9 275.4 438.6 C275.4 440.3 275.4 441.9 275.3 443.6 C275.1 445.3 274.4 446.9 274.2 448.6 C274.0 450.3 274.1 451.9 274.1 453.6 C274.0 455.3 274.1 456.9 274.1 458.6 C274.1 460.3 274.1 461.9 274.1 463.6 C274.1 465.3 274.1 467.8 274.1 468.6" stroke="#96412f" stroke-width="0.7" fill="none" opacity="0.45"/><path d="M288.0 188.4 C288.0 189.2 288.0 191.7 288.0 193.4 C288.0 195.0 288.0 196.7 288.0 198.4 C288.0 200.0 288.1 201.7 288.0 203.4 C288.0 205.0 287.9 206.7 287.8 208.4 C287.6 210.0 287.3 211.7 287.1 213.4 C286.8 215.0 286.6 216.7 286.3 218.4 C285.9 220.0 285.4 221.7 285.1 223.4 C284.7 225.0 284.3 226.7 284.0 228.4 C283.7 230.0 283.6 231.7 283.4 233.4 C283.2 235.0 282.9 236.7 282.8 238.4 C282.6 240.0 282.4 241.7 282.3 243.4 C282.2 245.0 282.1 246.7 282.0 248.4 C281.9 250.0 281.7 251.7 281.6 253.4 C281.5 255.0 281.5 256.7 281.4 258.4 C281.3 260.0 281.3 261.7 281.2 263.4 C281.1 265.0 281.0 266.7 281.0 268.4 C281.0 270.0 281.0 271.7 281.0 273.4 C281.0 275.0 281.0 276.7 281.1 278.4 C281.1 280.0 281.2 281.7 281.2 283.4 C281.2 285.0 281.4 286.7 281.1 288.4 C280.9 290.0 280.2 291.7 279.6 293.4 C279.0 295.0 278.1 296.7 277.4 298.4 C276.8 300.0 276.2 301.7 275.8 303.4 C275.4 305.0 275.2 306.7 275.1 308.4 C274.9 310.0 274.8 311.7 274.7 313.4 C274.6 315.0 274.5 316.7 274.4 318.4 C274.3 320.0 274.1 321.7 274.1 323.4 C274.1 325.0 274.1 326.7 274.3 328.4 C274.4 330.0 274.9 331.7 275.1 333.4 C275.3 335.0 275.4 336.7 275.5 338.4 C275.7 340.0 275.8 341.7 275.9 343.4 C276.1 345.0 276.2 346.7 276.4 348.4 C276.5 350.0 276.6 351.7 276.7 353.4 C276.8 355.0 276.9 356.7 277.0 358.4 C277.0 360.0 277.1 361.7 277.0 363.4 C277.0 365.0 276.8 366.7 276.6 368.4 C276.5 370.0 276.4 371.7 276.3 373.4 C276.1 375.0 276.0 376.7 275.9 378.4 C275.7 380.0 275.6 381.7 275.5 383.4 C275.3 385.0 275.1 386.7 275.0 388.4 C274.9 390.0 274.7 391.7 274.6 393.4 C274.6 395.0 274.7 396.7 274.7 398.4 C274.7 400.0 274.7 401.7 274.7 403.4 C274.6 405.0 274.5 406.7 274.6 408.4 C274.6 410.0 274.8 411.7 275.0 413.4 C275.1 415.0 275.3 416.7 275.5 418.4 C275.6 420.0 275.8 421.7 276.0 423.4 C276.1 425.0 276.4 426.7 276.6 428.4 C276.8 430.0 277.0 431.7 277.1 433.4 C277.3 435.0 277.4 436.7 277.4 438.4 C277.5 440.0 277.5 441.7 277.3 443.4 C277.1 445.0 276.4 446.7 276.2 448.4 C276.0 450.0 276.0 451.7 276.0 453.4 C276.0 455.0 276.0 456.7 276.0 458.4 C276.0 460.0 276.0 461.7 276.0 463.4 C276.0 465.0 276.0 467.5 276.0 468.4" stroke="#c47859" stroke-width="1.3" fill="none" opacity="0.9"/><path d="M290.2 188.1 C290.2 189.0 290.2 191.5 290.2 193.1 C290.2 194.8 290.2 196.5 290.2 198.1 C290.2 199.8 290.2 201.5 290.2 203.1 C290.1 204.8 290.0 206.5 289.9 208.1 C289.7 209.8 289.5 211.5 289.2 213.1 C288.9 214.8 288.7 216.5 288.3 218.1 C288.0 219.8 287.5 221.5 287.1 223.1 C286.7 224.8 286.2 226.5 285.9 228.1 C285.6 229.8 285.5 231.5 285.3 233.1 C285.1 234.8 284.8 236.5 284.6 238.1 C284.4 239.8 284.3 241.5 284.1 243.1 C284.0 244.8 283.9 246.5 283.8 248.1 C283.7 249.8 283.5 251.5 283.4 253.1 C283.3 254.8 283.2 256.5 283.2 258.1 C283.1 259.8 283.0 261.5 283.0 263.1 C282.9 264.8 282.8 266.5 282.8 268.1 C282.7 269.8 282.7 271.5 282.7 273.1 C282.7 274.8 282.8 276.5 282.8 278.1 C282.9 279.8 283.0 281.5 283.0 283.1 C283.0 284.8 283.1 286.5 282.8 288.1 C282.6 289.8 281.9 291.5 281.2 293.1 C280.6 294.8 279.6 296.5 279.0 298.1 C278.3 299.8 277.7 301.5 277.3 303.1 C276.8 304.8 276.7 306.5 276.5 308.1 C276.3 309.8 276.2 311.5 276.1 313.1 C276.0 314.8 275.9 316.5 275.8 318.1 C275.7 319.8 275.5 321.5 275.5 323.1 C275.4 324.8 275.5 326.5 275.6 328.1 C275.8 329.8 276.3 331.5 276.5 333.1 C276.8 334.8 276.8 336.5 277.0 338.1 C277.1 339.8 277.3 341.5 277.4 343.1 C277.6 344.8 277.7 346.5 277.9 348.1 C278.0 349.8 278.1 351.5 278.2 353.1 C278.3 354.8 278.4 356.5 278.5 358.1 C278.6 359.8 278.6 361.5 278.6 363.1 C278.5 364.8 278.3 366.5 278.1 368.1 C278.0 369.8 277.9 371.5 277.7 373.1 C277.6 374.8 277.5 376.5 277.3 378.1 C277.2 379.8 277.1 381.5 276.9 383.1 C276.8 384.8 276.6 386.5 276.5 388.1 C276.3 389.8 276.1 391.5 276.1 393.1 C276.0 394.8 276.1 396.5 276.1 398.1 C276.1 399.8 276.1 401.5 276.1 403.1 C276.1 404.8 276.0 406.5 276.0 408.1 C276.1 409.8 276.3 411.5 276.4 413.1 C276.6 414.8 276.8 416.5 276.9 418.1 C277.1 419.8 277.3 421.5 277.5 423.1 C277.6 424.8 277.9 426.5 278.1 428.1 C278.3 429.8 278.5 431.5 278.7 433.1 C278.8 434.8 279.0 436.5 279.0 438.1 C279.0 439.8 279.1 441.5 278.9 443.1 C278.6 444.8 277.9 446.5 277.7 448.1 C277.4 449.8 277.5 451.5 277.5 453.1 C277.5 454.8 277.5 456.5 277.5 458.1 C277.5 459.8 277.5 461.5 277.5 463.1 C277.5 464.8 277.5 467.3 277.5 468.1" stroke="#9b4734" stroke-width="1.8" fill="none" opacity="0.9"/><path d="M291.7 188.0 C291.7 188.8 291.7 191.3 291.7 193.0 C291.7 194.6 291.7 196.3 291.7 198.0 C291.7 199.6 291.7 201.3 291.7 203.0 C291.6 204.6 291.6 206.3 291.4 208.0 C291.2 209.6 291.0 211.3 290.7 213.0 C290.4 214.6 290.1 216.3 289.8 218.0 C289.4 219.6 288.9 221.3 288.5 223.0 C288.1 224.6 287.6 226.3 287.3 228.0 C287.0 229.6 286.8 231.3 286.6 233.0 C286.4 234.6 286.1 236.3 285.9 238.0 C285.7 239.6 285.6 241.3 285.4 243.0 C285.3 244.6 285.2 246.3 285.1 248.0 C284.9 249.6 284.8 251.3 284.7 253.0 C284.6 254.6 284.5 256.3 284.4 258.0 C284.3 259.6 284.3 261.3 284.2 263.0 C284.1 264.6 284.0 266.3 284.0 268.0 C284.0 269.6 283.9 271.3 284.0 273.0 C284.0 274.6 284.0 276.3 284.1 278.0 C284.1 279.6 284.2 281.3 284.2 283.0 C284.2 284.6 284.4 286.3 284.1 288.0 C283.8 289.6 283.1 291.3 282.4 293.0 C281.7 294.6 280.7 296.3 280.1 298.0 C279.4 299.6 278.7 301.3 278.3 303.0 C277.9 304.6 277.7 306.3 277.5 308.0 C277.3 309.6 277.2 311.3 277.1 313.0 C277.0 314.6 276.9 316.3 276.8 318.0 C276.7 319.6 276.5 321.3 276.4 323.0 C276.4 324.6 276.4 326.3 276.6 328.0 C276.8 329.6 277.3 331.3 277.6 333.0 C277.8 334.6 277.9 336.3 278.0 338.0 C278.2 339.6 278.3 341.3 278.5 343.0 C278.6 344.6 278.8 346.3 278.9 348.0 C279.1 349.6 279.1 351.3 279.2 353.0 C279.3 354.6 279.5 356.3 279.6 358.0 C279.6 359.6 279.7 361.3 279.6 363.0 C279.6 364.6 279.3 366.3 279.2 368.0 C279.1 369.6 278.9 371.3 278.8 373.0 C278.7 374.6 278.5 376.3 278.4 378.0 C278.2 379.6 278.1 381.3 277.9 383.0 C277.8 384.6 277.6 386.3 277.5 388.0 C277.3 389.6 277.1 391.3 277.1 393.0 C277.0 394.6 277.1 396.3 277.2 398.0 C277.2 399.6 277.1 401.3 277.1 403.0 C277.1 404.6 277.0 406.3 277.0 408.0 C277.1 409.6 277.3 411.3 277.4 413.0 C277.6 414.6 277.8 416.3 278.0 418.0 C278.2 419.6 278.3 421.3 278.5 423.0 C278.7 424.6 279.0 426.3 279.2 428.0 C279.4 429.6 279.6 431.3 279.8 433.0 C279.9 434.6 280.1 436.3 280.1 438.0 C280.1 439.6 280.2 441.3 280.0 443.0 C279.7 444.6 279.0 446.3 278.7 448.0 C278.5 449.6 278.6 451.3 278.5 453.0 C278.5 454.6 278.5 456.3 278.5 458.0 C278.5 459.6 278.5 461.3 278.5 463.0 C278.5 464.6 278.5 467.1 278.5 468.0" stroke="#cd8866" stroke-width="0.7" fill="none" opacity="0.45"/><path d="M293.6 187.8 C293.6 188.6 293.6 191.1 293.6 192.8 C293.6 194.4 293.6 196.1 293.6 197.8 C293.6 199.4 293.7 201.1 293.6 202.8 C293.6 204.4 293.5 206.1 293.3 207.8 C293.1 209.4 292.9 211.1 292.6 212.8 C292.3 214.4 292.0 216.1 291.6 217.8 C291.2 219.4 290.7 221.1 290.2 222.8 C289.8 224.4 289.4 226.1 289.0 227.8 C288.7 229.4 288.5 231.1 288.3 232.8 C288.1 234.4 287.8 236.1 287.6 237.8 C287.4 239.4 287.2 241.1 287.1 242.8 C286.9 244.4 286.8 246.1 286.7 247.8 C286.6 249.4 286.4 251.1 286.3 252.8 C286.2 254.4 286.1 256.1 286.0 257.8 C285.9 259.4 285.9 261.1 285.8 262.8 C285.7 264.4 285.6 266.1 285.6 267.8 C285.5 269.4 285.5 271.1 285.5 272.8 C285.5 274.4 285.6 276.1 285.7 277.8 C285.7 279.4 285.8 281.1 285.8 282.8 C285.8 284.4 285.9 286.1 285.6 287.8 C285.3 289.4 284.6 291.1 283.9 292.8 C283.2 294.4 282.1 296.1 281.4 297.8 C280.7 299.4 280.1 301.1 279.6 302.8 C279.2 304.4 279.0 306.1 278.8 307.8 C278.6 309.4 278.5 311.1 278.4 312.8 C278.2 314.4 278.1 316.1 278.0 317.8 C277.9 319.4 277.7 321.1 277.7 322.8 C277.6 324.4 277.7 326.1 277.9 327.8 C278.1 329.4 278.6 331.1 278.8 332.8 C279.1 334.4 279.2 336.1 279.3 337.8 C279.5 339.4 279.6 341.1 279.8 342.8 C280.0 344.4 280.1 346.1 280.3 347.8 C280.4 349.4 280.5 351.1 280.6 352.8 C280.7 354.4 280.9 356.1 280.9 357.8 C281.0 359.4 281.1 361.1 281.0 362.8 C280.9 364.4 280.7 366.1 280.5 367.8 C280.4 369.4 280.3 371.1 280.1 372.8 C280.0 374.4 279.9 376.1 279.7 377.8 C279.6 379.4 279.4 381.1 279.3 382.8 C279.1 384.4 278.9 386.1 278.8 387.8 C278.6 389.4 278.4 391.1 278.4 392.8 C278.3 394.4 278.4 396.1 278.4 397.8 C278.4 399.4 278.4 401.1 278.4 402.8 C278.4 404.4 278.3 406.1 278.3 407.8 C278.4 409.4 278.6 411.1 278.7 412.8 C278.9 414.4 279.1 416.1 279.3 417.8 C279.5 419.4 279.6 421.1 279.9 422.8 C280.1 424.4 280.3 426.1 280.5 427.8 C280.7 429.4 281.0 431.1 281.2 432.8 C281.3 434.4 281.5 436.1 281.5 437.8 C281.5 439.4 281.6 441.1 281.4 442.8 C281.1 444.4 280.3 446.1 280.1 447.8 C279.8 449.4 279.9 451.1 279.8 452.8 C279.8 454.4 279.8 456.1 279.8 457.8 C279.8 459.4 279.8 461.1 279.8 462.8 C279.8 464.4 279.8 466.9 279.8 467.8" stroke="#96412f" stroke-width="1.8" fill="none" opacity="0.45"/><path d="M295.6 187.5 C295.6 188.3 295.6 190.8 295.6 192.5 C295.6 194.2 295.6 195.8 295.6 197.5 C295.6 199.2 295.7 200.8 295.6 202.5 C295.6 204.2 295.5 205.8 295.3 207.5 C295.1 209.2 294.8 210.8 294.5 212.5 C294.2 214.2 293.9 215.8 293.5 217.5 C293.1 219.2 292.5 220.8 292.1 222.5 C291.6 224.2 291.1 225.8 290.8 227.5 C290.5 229.2 290.3 230.8 290.0 232.5 C289.8 234.2 289.5 235.8 289.3 237.5 C289.1 239.2 288.9 240.8 288.8 242.5 C288.6 244.2 288.5 245.8 288.3 247.5 C288.2 249.2 288.1 250.8 287.9 252.5 C287.8 254.2 287.7 255.8 287.6 257.5 C287.5 259.2 287.5 260.8 287.4 262.5 C287.3 264.2 287.2 265.8 287.2 267.5 C287.1 269.2 287.1 270.8 287.1 272.5 C287.1 274.2 287.2 275.8 287.3 277.5 C287.3 279.2 287.4 280.8 287.4 282.5 C287.4 284.2 287.5 285.8 287.2 287.5 C286.8 289.2 286.1 290.8 285.4 292.5 C284.6 294.2 283.6 295.8 282.8 297.5 C282.1 299.2 281.4 300.8 281.0 302.5 C280.5 304.2 280.3 305.8 280.1 307.5 C279.9 309.2 279.8 310.8 279.6 312.5 C279.5 314.2 279.4 315.8 279.3 317.5 C279.1 319.2 278.9 320.8 278.9 322.5 C278.9 324.2 278.9 325.8 279.1 327.5 C279.3 329.2 279.9 330.8 280.2 332.5 C280.4 334.2 280.5 335.8 280.7 337.5 C280.8 339.2 281.0 340.8 281.2 342.5 C281.3 344.2 281.5 345.8 281.6 347.5 C281.8 349.2 281.9 350.8 282.0 352.5 C282.1 354.2 282.3 355.8 282.3 357.5 C282.4 359.2 282.5 360.8 282.4 362.5 C282.3 364.2 282.1 365.8 281.9 367.5 C281.8 369.2 281.7 370.8 281.5 372.5 C281.4 374.2 281.2 375.8 281.1 377.5 C280.9 379.2 280.8 380.8 280.6 382.5 C280.4 384.2 280.2 385.8 280.1 387.5 C279.9 389.2 279.7 390.8 279.7 392.5 C279.6 394.2 279.7 395.8 279.7 397.5 C279.7 399.2 279.7 400.8 279.7 402.5 C279.7 404.2 279.6 405.8 279.6 407.5 C279.7 409.2 279.9 410.8 280.1 412.5 C280.2 414.2 280.5 415.8 280.6 417.5 C280.8 419.2 281.0 420.8 281.2 422.5 C281.4 424.2 281.7 425.8 281.9 427.5 C282.2 429.2 282.4 430.8 282.6 432.5 C282.8 434.2 282.9 435.8 282.9 437.5 C283.0 439.2 283.0 440.8 282.8 442.5 C282.5 444.2 281.7 445.8 281.4 447.5 C281.2 449.2 281.2 450.8 281.2 452.5 C281.2 454.2 281.2 455.8 281.2 457.5 C281.2 459.2 281.2 460.8 281.2 462.5 C281.2 464.2 281.2 466.7 281.2 467.5" stroke="#96412f" stroke-width="1.8" fill="none" opacity="0.9"/><path d="M297.7 187.2 C297.7 188.1 297.7 190.6 297.7 192.2 C297.7 193.9 297.7 195.6 297.7 197.2 C297.7 198.9 297.7 200.6 297.7 202.2 C297.6 203.9 297.5 205.6 297.3 207.2 C297.1 208.9 296.8 210.6 296.5 212.2 C296.2 213.9 295.9 215.6 295.5 217.2 C295.0 218.9 294.4 220.6 294.0 222.2 C293.5 223.9 293.0 225.6 292.6 227.2 C292.3 228.9 292.1 230.6 291.8 232.2 C291.6 233.9 291.3 235.6 291.1 237.2 C290.8 238.9 290.7 240.6 290.5 242.2 C290.3 243.9 290.2 245.6 290.1 247.2 C289.9 248.9 289.8 250.6 289.6 252.2 C289.5 253.9 289.4 255.6 289.3 257.2 C289.2 258.9 289.2 260.6 289.1 262.2 C289.0 263.9 288.9 265.6 288.9 267.2 C288.8 268.9 288.8 270.6 288.8 272.2 C288.8 273.9 288.9 275.6 289.0 277.2 C289.0 278.9 289.1 280.6 289.1 282.2 C289.1 283.9 289.2 285.6 288.8 287.2 C288.4 288.9 287.7 290.6 286.9 292.2 C286.2 293.9 285.1 295.6 284.3 297.2 C283.6 298.9 282.8 300.6 282.3 302.2 C281.9 303.9 281.7 305.6 281.4 307.2 C281.2 308.9 281.1 310.6 281.0 312.2 C280.8 313.9 280.7 315.6 280.6 317.2 C280.5 318.9 280.3 320.6 280.2 322.2 C280.2 323.9 280.2 325.6 280.5 327.2 C280.7 328.9 281.3 330.6 281.5 332.2 C281.8 333.9 281.9 335.6 282.1 337.2 C282.2 338.9 282.4 340.6 282.6 342.2 C282.7 343.9 282.9 345.6 283.1 347.2 C283.2 348.9 283.3 350.6 283.4 352.2 C283.5 353.9 283.7 355.6 283.8 357.2 C283.8 358.9 283.9 360.6 283.8 362.2 C283.8 363.9 283.5 365.6 283.4 367.2 C283.2 368.9 283.1 370.6 282.9 372.2 C282.8 373.9 282.6 375.6 282.5 377.2 C282.3 378.9 282.2 380.6 282.0 382.2 C281.8 383.9 281.6 385.6 281.5 387.2 C281.3 388.9 281.1 390.6 281.1 392.2 C281.0 393.9 281.1 395.6 281.1 397.2 C281.1 398.9 281.1 400.6 281.1 402.2 C281.0 403.9 280.9 405.6 281.0 407.2 C281.1 408.9 281.3 410.6 281.5 412.2 C281.6 413.9 281.9 415.6 282.1 417.2 C282.3 418.9 282.4 420.6 282.6 422.2 C282.9 423.9 283.1 425.6 283.4 427.2 C283.6 428.9 283.9 430.6 284.1 432.2 C284.2 433.9 284.4 435.6 284.4 437.2 C284.4 438.9 284.5 440.6 284.3 442.2 C284.0 443.9 283.1 445.6 282.8 447.2 C282.6 448.9 282.6 450.6 282.6 452.2 C282.6 453.9 282.6 455.6 282.6 457.2 C282.6 458.9 282.6 460.6 282.6 462.2 C282.6 463.9 282.6 466.4 282.6 467.2" stroke="#c67452" stroke-width="1.3" fill="none" opacity="0.75"/><path d="M299.5 187.0 C299.5 187.8 299.5 190.3 299.5 192.0 C299.5 193.7 299.5 195.3 299.5 197.0 C299.5 198.7 299.5 200.3 299.5 202.0 C299.4 203.7 299.3 205.3 299.1 207.0 C298.9 208.7 298.6 210.3 298.3 212.0 C298.0 213.7 297.6 215.3 297.2 217.0 C296.8 218.7 296.1 220.3 295.6 222.0 C295.2 223.7 294.6 225.3 294.3 227.0 C293.9 228.7 293.7 230.3 293.4 232.0 C293.2 233.7 292.8 235.3 292.6 237.0 C292.4 238.7 292.2 240.3 292.0 242.0 C291.9 243.7 291.7 245.3 291.6 247.0 C291.5 248.7 291.3 250.3 291.2 252.0 C291.0 253.7 290.9 255.3 290.8 257.0 C290.7 258.7 290.7 260.3 290.6 262.0 C290.5 263.7 290.4 265.3 290.3 267.0 C290.3 268.7 290.3 270.3 290.3 272.0 C290.3 273.7 290.4 275.3 290.4 277.0 C290.5 278.7 290.6 280.3 290.6 282.0 C290.6 283.7 290.6 285.3 290.3 287.0 C289.9 288.7 289.1 290.3 288.3 292.0 C287.5 293.7 286.4 295.3 285.6 297.0 C284.8 298.7 284.1 300.3 283.6 302.0 C283.1 303.7 282.9 305.3 282.6 307.0 C282.4 308.7 282.3 310.3 282.2 312.0 C282.0 313.7 281.9 315.3 281.7 317.0 C281.6 318.7 281.4 320.3 281.4 322.0 C281.4 323.7 281.4 325.3 281.6 327.0 C281.9 328.7 282.5 330.3 282.8 332.0 C283.0 333.7 283.1 335.3 283.3 337.0 C283.5 338.7 283.7 340.3 283.8 342.0 C284.0 343.7 284.2 345.3 284.3 347.0 C284.5 348.7 284.6 350.3 284.7 352.0 C284.8 353.7 285.0 355.3 285.1 357.0 C285.1 358.7 285.2 360.3 285.1 362.0 C285.1 363.7 284.8 365.3 284.6 367.0 C284.5 368.7 284.4 370.3 284.2 372.0 C284.0 373.7 283.9 375.3 283.7 377.0 C283.6 378.7 283.4 380.3 283.2 382.0 C283.0 383.7 282.9 385.3 282.7 387.0 C282.5 388.7 282.3 390.3 282.3 392.0 C282.2 393.7 282.3 395.3 282.3 397.0 C282.3 398.7 282.3 400.3 282.3 402.0 C282.3 403.7 282.1 405.3 282.2 407.0 C282.3 408.7 282.5 410.3 282.7 412.0 C282.9 413.7 283.1 415.3 283.3 417.0 C283.5 418.7 283.7 420.3 283.9 422.0 C284.1 423.7 284.4 425.3 284.7 427.0 C284.9 428.7 285.2 430.3 285.4 432.0 C285.6 433.7 285.7 435.3 285.7 437.0 C285.8 438.7 285.8 440.3 285.6 442.0 C285.3 443.7 284.4 445.3 284.1 447.0 C283.8 448.7 283.9 450.3 283.8 452.0 C283.8 453.7 283.8 455.3 283.8 457.0 C283.8 458.7 283.8 460.3 283.8 462.0 C283.8 463.7 283.8 466.2 283.8 467.0" stroke="#9b4734" stroke-width="1.0" fill="none" opacity="0.6"/><path d="M302.1 186.6 C302.1 187.4 302.1 189.9 302.1 191.6 C302.1 193.2 302.1 194.9 302.1 196.6 C302.1 198.2 302.2 199.9 302.1 201.6 C302.0 203.2 302.0 204.9 301.7 206.6 C301.5 208.2 301.2 209.9 300.8 211.6 C300.5 213.2 300.2 214.9 299.7 216.6 C299.2 218.2 298.6 219.9 298.1 221.6 C297.5 223.2 297.0 224.9 296.6 226.6 C296.2 228.2 296.0 229.9 295.7 231.6 C295.4 233.2 295.1 234.9 294.9 236.6 C294.6 238.2 294.4 239.9 294.3 241.6 C294.1 243.2 294.0 244.9 293.8 246.6 C293.6 248.2 293.5 249.9 293.3 251.6 C293.2 253.2 293.1 254.9 293.0 256.6 C292.9 258.2 292.8 259.9 292.7 261.6 C292.6 263.2 292.5 264.9 292.5 266.6 C292.4 268.2 292.4 269.9 292.4 271.6 C292.4 273.2 292.5 274.9 292.6 276.6 C292.6 278.2 292.8 279.9 292.7 281.6 C292.7 283.2 292.7 284.9 292.3 286.6 C291.9 288.2 291.1 289.9 290.3 291.6 C289.5 293.2 288.3 294.9 287.5 296.6 C286.7 298.2 285.9 299.9 285.4 301.6 C284.8 303.2 284.6 304.9 284.4 306.6 C284.1 308.2 284.0 309.9 283.8 311.6 C283.7 313.2 283.5 314.9 283.4 316.6 C283.3 318.2 283.1 319.9 283.0 321.6 C283.0 323.2 283.1 324.9 283.3 326.6 C283.6 328.2 284.2 329.9 284.5 331.6 C284.8 333.2 284.9 334.9 285.1 336.6 C285.3 338.2 285.4 339.9 285.6 341.6 C285.8 343.2 286.0 344.9 286.2 346.6 C286.3 348.2 286.4 349.9 286.5 351.6 C286.7 353.2 286.8 354.9 286.9 356.6 C287.0 358.2 287.1 359.9 287.0 361.6 C286.9 363.2 286.6 364.9 286.5 366.6 C286.3 368.2 286.2 369.9 286.0 371.6 C285.9 373.2 285.7 374.9 285.5 376.6 C285.3 378.2 285.2 379.9 285.0 381.6 C284.8 383.2 284.6 384.9 284.4 386.6 C284.3 388.2 284.1 389.9 284.0 391.6 C283.9 393.2 284.0 394.9 284.0 396.6 C284.0 398.2 284.0 399.9 284.0 401.6 C284.0 403.2 283.9 404.9 284.0 406.6 C284.0 408.2 284.3 409.9 284.4 411.6 C284.6 413.2 284.9 414.9 285.1 416.6 C285.3 418.2 285.5 419.9 285.7 421.6 C286.0 423.2 286.2 424.9 286.5 426.6 C286.8 428.2 287.1 429.9 287.3 431.6 C287.4 433.2 287.6 434.9 287.6 436.6 C287.7 438.2 287.7 439.9 287.5 441.6 C287.2 443.2 286.2 444.9 285.9 446.6 C285.6 448.2 285.7 449.9 285.6 451.6 C285.6 453.2 285.6 454.9 285.6 456.6 C285.6 458.2 285.6 459.9 285.6 461.6 C285.6 463.2 285.6 465.7 285.6 466.6" stroke="#8e3d2c" stroke-width="1.8" fill="none" opacity="0.9"/><path d="M304.1 186.3 C304.1 187.1 304.1 189.6 304.1 191.3 C304.1 192.9 304.1 194.6 304.1 196.3 C304.1 197.9 304.1 199.6 304.1 201.3 C304.0 202.9 303.9 204.6 303.7 206.3 C303.5 207.9 303.1 209.6 302.7 211.3 C302.4 212.9 302.0 214.6 301.6 216.3 C301.1 217.9 300.4 219.6 299.9 221.3 C299.3 222.9 298.8 224.6 298.4 226.3 C298.0 227.9 297.8 229.6 297.4 231.3 C297.1 232.9 296.8 234.6 296.5 236.3 C296.3 237.9 296.1 239.6 295.9 241.3 C295.7 242.9 295.6 244.6 295.4 246.3 C295.3 247.9 295.1 249.6 294.9 251.3 C294.8 252.9 294.7 254.6 294.6 256.3 C294.5 257.9 294.4 259.6 294.3 261.3 C294.2 262.9 294.1 264.6 294.1 266.3 C294.0 267.9 294.0 269.6 294.0 271.3 C294.0 272.9 294.1 274.6 294.2 276.3 C294.2 277.9 294.4 279.6 294.3 281.3 C294.3 282.9 294.3 284.6 293.9 286.3 C293.5 287.9 292.6 289.6 291.8 291.3 C290.9 292.9 289.7 294.6 288.9 296.3 C288.0 297.9 287.2 299.6 286.7 301.3 C286.1 302.9 285.9 304.6 285.7 306.3 C285.4 307.9 285.3 309.6 285.1 311.3 C284.9 312.9 284.8 314.6 284.7 316.3 C284.5 317.9 284.3 319.6 284.3 321.3 C284.3 322.9 284.3 324.6 284.6 326.3 C284.8 327.9 285.5 329.6 285.8 331.3 C286.1 332.9 286.2 334.6 286.4 336.3 C286.6 337.9 286.8 339.6 287.0 341.3 C287.2 342.9 287.4 344.6 287.5 346.3 C287.7 347.9 287.8 349.6 287.9 351.3 C288.0 352.9 288.2 354.6 288.3 356.3 C288.3 357.9 288.4 359.6 288.4 361.3 C288.3 362.9 288.0 364.6 287.8 366.3 C287.7 367.9 287.5 369.6 287.4 371.3 C287.2 372.9 287.0 374.6 286.9 376.3 C286.7 377.9 286.5 379.6 286.3 381.3 C286.1 382.9 285.9 384.6 285.8 386.3 C285.6 387.9 285.4 389.6 285.3 391.3 C285.2 392.9 285.3 394.6 285.3 396.3 C285.3 397.9 285.3 399.6 285.3 401.3 C285.3 402.9 285.2 404.6 285.3 406.3 C285.3 407.9 285.6 409.6 285.8 411.3 C285.9 412.9 286.2 414.6 286.4 416.3 C286.6 417.9 286.8 419.6 287.1 421.3 C287.3 422.9 287.6 424.6 287.9 426.3 C288.1 427.9 288.5 429.6 288.7 431.3 C288.9 432.9 289.0 434.6 289.0 436.3 C289.1 437.9 289.2 439.6 288.9 441.3 C288.6 442.9 287.6 444.6 287.3 446.3 C286.9 447.9 287.0 449.6 287.0 451.3 C286.9 452.9 287.0 454.6 287.0 456.3 C287.0 457.9 287.0 459.6 287.0 461.3 C287.0 462.9 287.0 465.4 287.0 466.3" stroke="#8e3d2c" stroke-width="1.8" fill="none" opacity="0.75"/><path d="M305.0 186.1 C305.0 186.9 305.0 189.4 305.0 191.1 C305.0 192.7 305.0 194.4 305.0 196.1 C305.0 197.7 305.1 199.4 305.0 201.1 C305.0 202.7 304.9 204.4 304.6 206.1 C304.4 207.7 304.0 209.4 303.7 211.1 C303.3 212.7 303.0 214.4 302.5 216.1 C302.0 217.7 301.3 219.4 300.7 221.1 C300.2 222.7 299.6 224.4 299.2 226.1 C298.8 227.7 298.6 229.4 298.3 231.1 C298.0 232.7 297.6 234.4 297.4 236.1 C297.1 237.7 296.9 239.4 296.7 241.1 C296.5 242.7 296.4 244.4 296.2 246.1 C296.1 247.7 295.9 249.4 295.7 251.1 C295.6 252.7 295.5 254.4 295.4 256.1 C295.3 257.7 295.2 259.4 295.1 261.1 C295.0 262.7 294.9 264.4 294.8 266.1 C294.8 267.7 294.8 269.4 294.8 271.1 C294.8 272.7 294.9 274.4 294.9 276.1 C295.0 277.7 295.2 279.4 295.1 281.1 C295.1 282.7 295.1 284.4 294.6 286.1 C294.2 287.7 293.3 289.4 292.5 291.1 C291.6 292.7 290.4 294.4 289.6 296.1 C288.7 297.7 287.9 299.4 287.3 301.1 C286.8 302.7 286.6 304.4 286.3 306.1 C286.0 307.7 285.9 309.4 285.7 311.1 C285.6 312.7 285.4 314.4 285.3 316.1 C285.1 317.7 284.9 319.4 284.9 321.1 C284.9 322.7 284.9 324.4 285.2 326.1 C285.4 327.7 286.1 329.4 286.5 331.1 C286.8 332.7 286.8 334.4 287.0 336.1 C287.2 337.7 287.4 339.4 287.6 341.1 C287.8 342.7 288.0 344.4 288.2 346.1 C288.4 347.7 288.5 349.4 288.6 351.1 C288.7 352.7 288.9 354.4 288.9 356.1 C289.0 357.7 289.1 359.4 289.0 361.1 C289.0 362.7 288.7 364.4 288.5 366.1 C288.4 367.7 288.2 369.4 288.0 371.1 C287.9 372.7 287.7 374.4 287.5 376.1 C287.3 377.7 287.1 379.4 287.0 381.1 C286.8 382.7 286.6 384.4 286.4 386.1 C286.2 387.7 286.0 389.4 285.9 391.1 C285.9 392.7 286.0 394.4 286.0 396.1 C286.0 397.7 286.0 399.4 285.9 401.1 C285.9 402.7 285.8 404.4 285.9 406.1 C286.0 407.7 286.2 409.4 286.4 411.1 C286.6 412.7 286.8 414.4 287.1 416.1 C287.3 417.7 287.5 419.4 287.7 421.1 C288.0 422.7 288.3 424.4 288.6 426.1 C288.8 427.7 289.2 429.4 289.3 431.1 C289.5 432.7 289.7 434.4 289.7 436.1 C289.8 437.7 289.9 439.4 289.6 441.1 C289.3 442.7 288.2 444.4 287.9 446.1 C287.6 447.7 287.7 449.4 287.6 451.1 C287.6 452.7 287.6 454.4 287.6 456.1 C287.6 457.7 287.6 459.4 287.6 461.1 C287.6 462.7 287.6 465.2 287.6 466.1" stroke="#c47859" stroke-width="1.0" fill="none" opacity="0.6"/><path d="M306.9 185.7 C306.9 186.6 306.9 189.1 306.9 190.7 C306.9 192.4 306.9 194.1 306.9 195.7 C306.9 197.4 307.0 199.1 306.9 200.7 C306.8 202.4 306.7 204.1 306.5 205.7 C306.3 207.4 305.9 209.1 305.5 210.7 C305.1 212.4 304.8 214.1 304.3 215.7 C303.8 217.4 303.0 219.1 302.5 220.7 C301.9 222.4 301.3 224.1 300.9 225.7 C300.5 227.4 300.2 229.1 299.9 230.7 C299.6 232.4 299.2 234.1 299.0 235.7 C298.7 237.4 298.5 239.1 298.3 240.7 C298.1 242.4 298.0 244.1 297.8 245.7 C297.6 247.4 297.4 249.1 297.3 250.7 C297.1 252.4 297.0 254.1 296.9 255.7 C296.8 257.4 296.7 259.1 296.6 260.7 C296.5 262.4 296.4 264.1 296.4 265.7 C296.3 267.4 296.3 269.1 296.3 270.7 C296.3 272.4 296.4 274.1 296.5 275.7 C296.5 277.4 296.7 279.1 296.7 280.7 C296.6 282.4 296.6 284.1 296.1 285.7 C295.7 287.4 294.8 289.1 293.9 290.7 C293.0 292.4 291.8 294.1 290.9 295.7 C290.0 297.4 289.2 299.1 288.6 300.7 C288.0 302.4 287.8 304.1 287.5 305.7 C287.3 307.4 287.1 309.1 286.9 310.7 C286.8 312.4 286.6 314.1 286.5 315.7 C286.3 317.4 286.1 319.1 286.1 320.7 C286.1 322.4 286.1 324.1 286.4 325.7 C286.6 327.4 287.4 329.1 287.7 330.7 C288.0 332.4 288.1 334.1 288.3 335.7 C288.5 337.4 288.7 339.1 288.9 340.7 C289.1 342.4 289.3 344.1 289.5 345.7 C289.7 347.4 289.8 349.1 289.9 350.7 C290.0 352.4 290.2 354.1 290.3 355.7 C290.3 357.4 290.4 359.1 290.4 360.7 C290.3 362.4 290.0 364.1 289.8 365.7 C289.7 367.4 289.5 369.1 289.3 370.7 C289.1 372.4 289.0 374.1 288.8 375.7 C288.6 377.4 288.4 379.1 288.2 380.7 C288.0 382.4 287.8 384.1 287.6 385.7 C287.5 387.4 287.2 389.1 287.2 390.7 C287.1 392.4 287.2 394.1 287.2 395.7 C287.2 397.4 287.2 399.1 287.2 400.7 C287.2 402.4 287.1 404.1 287.1 405.7 C287.2 407.4 287.5 409.1 287.7 410.7 C287.9 412.4 288.1 414.1 288.3 415.7 C288.6 417.4 288.8 419.1 289.0 420.7 C289.3 422.4 289.6 424.1 289.9 425.7 C290.1 427.4 290.5 429.1 290.7 430.7 C290.9 432.4 291.1 434.1 291.1 435.7 C291.1 437.4 291.2 439.1 290.9 440.7 C290.6 442.4 289.5 444.1 289.2 445.7 C288.9 447.4 288.9 449.1 288.9 450.7 C288.8 452.4 288.9 454.1 288.9 455.7 C288.9 457.4 288.9 459.1 288.9 460.7 C288.9 462.4 288.9 464.9 288.9 465.7" stroke="#9b4734" stroke-width="1.3" fill="none" opacity="0.6"/><path d="M308.2 185.4 C308.2 186.3 308.2 188.8 308.2 190.4 C308.2 192.1 308.2 193.8 308.2 195.4 C308.2 197.1 308.3 198.8 308.2 200.4 C308.2 202.1 308.1 203.8 307.8 205.4 C307.6 207.1 307.2 208.8 306.8 210.4 C306.4 212.1 306.0 213.8 305.5 215.4 C305.0 217.1 304.3 218.8 303.7 220.4 C303.1 222.1 302.5 223.8 302.1 225.4 C301.6 227.1 301.4 228.8 301.1 230.4 C300.8 232.1 300.4 233.8 300.1 235.4 C299.9 237.1 299.7 238.8 299.5 240.4 C299.3 242.1 299.1 243.8 298.9 245.4 C298.8 247.1 298.6 248.8 298.4 250.4 C298.3 252.1 298.1 253.8 298.0 255.4 C297.9 257.1 297.8 258.8 297.7 260.4 C297.6 262.1 297.5 263.8 297.4 265.4 C297.4 267.1 297.4 268.8 297.4 270.4 C297.4 272.1 297.5 273.8 297.6 275.4 C297.6 277.1 297.8 278.8 297.7 280.4 C297.7 282.1 297.7 283.8 297.2 285.4 C296.7 287.1 295.8 288.8 294.9 290.4 C294.0 292.1 292.7 293.8 291.8 295.4 C290.9 297.1 290.1 298.8 289.5 300.4 C288.9 302.1 288.7 303.8 288.4 305.4 C288.1 307.1 288.0 308.8 287.8 310.4 C287.6 312.1 287.5 313.8 287.3 315.4 C287.2 317.1 286.9 318.8 286.9 320.4 C286.9 322.1 287.0 323.8 287.2 325.4 C287.5 327.1 288.3 328.8 288.6 330.4 C288.9 332.1 289.0 333.8 289.2 335.4 C289.4 337.1 289.6 338.8 289.8 340.4 C290.0 342.1 290.3 343.8 290.4 345.4 C290.6 347.1 290.7 348.8 290.8 350.4 C290.9 352.1 291.1 353.8 291.2 355.4 C291.3 357.1 291.4 358.8 291.3 360.4 C291.2 362.1 290.9 363.8 290.8 365.4 C290.6 367.1 290.4 368.8 290.2 370.4 C290.1 372.1 289.9 373.8 289.7 375.4 C289.5 377.1 289.3 378.8 289.1 380.4 C288.9 382.1 288.7 383.8 288.5 385.4 C288.4 387.1 288.1 388.8 288.1 390.4 C288.0 392.1 288.1 393.8 288.1 395.4 C288.1 397.1 288.1 398.8 288.1 400.4 C288.1 402.1 287.9 403.8 288.0 405.4 C288.1 407.1 288.4 408.8 288.6 410.4 C288.8 412.1 289.0 413.8 289.3 415.4 C289.5 417.1 289.7 418.8 290.0 420.4 C290.2 422.1 290.5 423.8 290.8 425.4 C291.1 427.1 291.4 428.8 291.6 430.4 C291.9 432.1 292.0 433.8 292.1 435.4 C292.1 437.1 292.2 438.8 291.9 440.4 C291.5 442.1 290.5 443.8 290.1 445.4 C289.8 447.1 289.9 448.8 289.8 450.4 C289.8 452.1 289.8 453.8 289.8 455.4 C289.8 457.1 289.8 458.8 289.8 460.4 C289.8 462.1 289.8 464.6 289.8 465.4" stroke="#b15a3e" stroke-width="1.3" fill="none" opacity="0.45"/><path d="M310.3 185.0 C310.3 185.8 310.3 188.3 310.3 190.0 C310.3 191.6 310.3 193.3 310.3 195.0 C310.3 196.6 310.4 198.3 310.3 200.0 C310.2 201.6 310.1 203.3 309.9 205.0 C309.6 206.6 309.2 208.3 308.8 210.0 C308.4 211.6 308.0 213.3 307.5 215.0 C307.0 216.6 306.2 218.3 305.6 220.0 C305.0 221.6 304.4 223.3 303.9 225.0 C303.5 226.6 303.2 228.3 302.9 230.0 C302.6 231.6 302.2 233.3 301.9 235.0 C301.6 236.6 301.4 238.3 301.2 240.0 C301.0 241.6 300.8 243.3 300.7 245.0 C300.5 246.6 300.3 248.3 300.1 250.0 C300.0 251.6 299.8 253.3 299.7 255.0 C299.6 256.6 299.5 258.3 299.4 260.0 C299.3 261.6 299.2 263.3 299.1 265.0 C299.0 266.6 299.0 268.3 299.0 270.0 C299.1 271.6 299.2 273.3 299.2 275.0 C299.3 276.6 299.5 278.3 299.4 280.0 C299.4 281.6 299.3 283.3 298.8 285.0 C298.3 286.6 297.4 288.3 296.5 290.0 C295.5 291.6 294.2 293.3 293.3 295.0 C292.4 296.6 291.5 298.3 290.9 300.0 C290.3 301.6 290.1 303.3 289.8 305.0 C289.5 306.6 289.3 308.3 289.1 310.0 C288.9 311.6 288.8 313.3 288.6 315.0 C288.5 316.6 288.2 318.3 288.2 320.0 C288.2 321.6 288.3 323.3 288.6 325.0 C288.8 326.6 289.6 328.3 290.0 330.0 C290.3 331.6 290.4 333.3 290.6 335.0 C290.8 336.6 291.0 338.3 291.2 340.0 C291.5 341.6 291.7 343.3 291.9 345.0 C292.0 346.6 292.1 348.3 292.3 350.0 C292.4 351.6 292.6 353.3 292.7 355.0 C292.7 356.6 292.8 358.3 292.8 360.0 C292.7 361.6 292.4 363.3 292.2 365.0 C292.0 366.6 291.9 368.3 291.7 370.0 C291.5 371.6 291.3 373.3 291.1 375.0 C290.9 376.6 290.7 378.3 290.5 380.0 C290.3 381.6 290.1 383.3 289.9 385.0 C289.7 386.6 289.5 388.3 289.4 390.0 C289.3 391.6 289.4 393.3 289.4 395.0 C289.4 396.6 289.4 398.3 289.4 400.0 C289.4 401.6 289.3 403.3 289.4 405.0 C289.5 406.6 289.7 408.3 289.9 410.0 C290.2 411.6 290.4 413.3 290.7 415.0 C290.9 416.6 291.1 418.3 291.4 420.0 C291.7 421.6 292.0 423.3 292.3 425.0 C292.6 426.6 292.9 428.3 293.1 430.0 C293.3 431.6 293.5 433.3 293.6 435.0 C293.6 436.6 293.7 438.3 293.3 440.0 C293.0 441.6 291.9 443.3 291.6 445.0 C291.2 446.6 291.3 448.3 291.2 450.0 C291.2 451.6 291.2 453.3 291.2 455.0 C291.2 456.6 291.2 458.3 291.2 460.0 C291.2 461.6 291.2 464.1 291.2 465.0" stroke="#be6647" stroke-width="1.0" fill="none" opacity="0.45"/><path d="M311.5 184.7 C311.5 185.5 311.5 188.0 311.5 189.7 C311.5 191.4 311.5 193.0 311.5 194.7 C311.5 196.4 311.5 198.0 311.5 199.7 C311.4 201.4 311.3 203.0 311.0 204.7 C310.8 206.4 310.4 208.0 310.0 209.7 C309.6 211.4 309.2 213.0 308.6 214.7 C308.1 216.4 307.3 218.0 306.7 219.7 C306.1 221.4 305.4 223.0 305.0 224.7 C304.5 226.4 304.3 228.0 303.9 229.7 C303.6 231.4 303.2 233.0 302.9 234.7 C302.6 236.4 302.4 238.0 302.2 239.7 C302.0 241.4 301.8 243.0 301.6 244.7 C301.5 246.4 301.2 248.0 301.1 249.7 C300.9 251.4 300.8 253.0 300.7 254.7 C300.6 256.4 300.5 258.0 300.4 259.7 C300.3 261.4 300.1 263.0 300.1 264.7 C300.0 266.4 300.0 268.0 300.0 269.7 C300.0 271.4 300.1 273.0 300.2 274.7 C300.3 276.4 300.5 278.0 300.4 279.7 C300.3 281.4 300.3 283.0 299.8 284.7 C299.3 286.4 298.3 288.0 297.4 289.7 C296.4 291.4 295.1 293.0 294.1 294.7 C293.2 296.4 292.3 298.0 291.7 299.7 C291.1 301.4 290.8 303.0 290.5 304.7 C290.2 306.4 290.1 308.0 289.9 309.7 C289.7 311.4 289.5 313.0 289.4 314.7 C289.2 316.4 289.0 318.0 289.0 319.7 C289.0 321.4 289.0 323.0 289.3 324.7 C289.6 326.4 290.4 328.0 290.8 329.7 C291.1 331.4 291.2 333.0 291.4 334.7 C291.6 336.4 291.8 338.0 292.0 339.7 C292.3 341.4 292.5 343.0 292.7 344.7 C292.9 346.4 292.9 348.0 293.1 349.7 C293.2 351.4 293.4 353.0 293.5 354.7 C293.6 356.4 293.7 358.0 293.6 359.7 C293.5 361.4 293.2 363.0 293.0 364.7 C292.8 366.4 292.7 368.0 292.5 369.7 C292.3 371.4 292.1 373.0 291.9 374.7 C291.7 376.4 291.5 378.0 291.3 379.7 C291.1 381.4 290.9 383.0 290.7 384.7 C290.5 386.4 290.3 388.0 290.2 389.7 C290.1 391.4 290.2 393.0 290.2 394.7 C290.2 396.4 290.2 398.0 290.2 399.7 C290.2 401.4 290.1 403.0 290.2 404.7 C290.3 406.4 290.5 408.0 290.7 409.7 C290.9 411.4 291.2 413.0 291.5 414.7 C291.7 416.4 291.9 418.0 292.2 419.7 C292.5 421.4 292.8 423.0 293.1 424.7 C293.4 426.4 293.7 428.0 294.0 429.7 C294.2 431.4 294.4 433.0 294.4 434.7 C294.4 436.4 294.5 438.0 294.2 439.7 C293.9 441.4 292.7 443.0 292.4 444.7 C292.0 446.4 292.1 448.0 292.0 449.7 C292.0 451.4 292.0 453.0 292.0 454.7 C292.0 456.4 292.0 458.0 292.0 459.7 C292.0 461.4 292.0 463.9 292.0 464.7" stroke="#be6647" stroke-width="1.0" fill="none" opacity="0.9"/><path d="M312.7 184.3 C312.7 185.2 312.7 187.7 312.7 189.3 C312.7 191.0 312.7 192.7 312.7 194.3 C312.7 196.0 312.8 197.7 312.7 199.3 C312.7 201.0 312.5 202.7 312.3 204.3 C312.0 206.0 311.6 207.7 311.2 209.3 C310.8 211.0 310.4 212.7 309.8 214.3 C309.3 216.0 308.5 217.7 307.9 219.3 C307.2 221.0 306.6 222.7 306.1 224.3 C305.6 226.0 305.4 227.7 305.1 229.3 C304.7 231.0 304.3 232.7 304.0 234.3 C303.7 236.0 303.5 237.7 303.3 239.3 C303.1 241.0 302.9 242.7 302.7 244.3 C302.5 246.0 302.3 247.7 302.1 249.3 C302.0 251.0 301.8 252.7 301.7 254.3 C301.6 256.0 301.5 257.7 301.4 259.3 C301.3 261.0 301.2 262.7 301.1 264.3 C301.0 266.0 301.0 267.7 301.0 269.3 C301.0 271.0 301.2 272.7 301.2 274.3 C301.3 276.0 301.5 277.7 301.4 279.3 C301.4 281.0 301.3 282.7 300.8 284.3 C300.3 286.0 299.3 287.7 298.3 289.3 C297.4 291.0 296.0 292.7 295.1 294.3 C294.1 296.0 293.2 297.7 292.6 299.3 C291.9 301.0 291.7 302.7 291.4 304.3 C291.1 306.0 290.9 307.7 290.7 309.3 C290.5 311.0 290.4 312.7 290.2 314.3 C290.0 316.0 289.8 317.7 289.8 319.3 C289.8 321.0 289.8 322.7 290.1 324.3 C290.4 326.0 291.3 327.7 291.6 329.3 C292.0 331.0 292.0 332.7 292.3 334.3 C292.5 336.0 292.7 337.7 292.9 339.3 C293.1 341.0 293.4 342.7 293.6 344.3 C293.7 346.0 293.8 347.7 294.0 349.3 C294.1 351.0 294.3 352.7 294.4 354.3 C294.5 356.0 294.6 357.7 294.5 359.3 C294.4 361.0 294.1 362.7 293.9 364.3 C293.7 366.0 293.6 367.7 293.4 369.3 C293.2 371.0 293.0 372.7 292.8 374.3 C292.6 376.0 292.4 377.7 292.2 379.3 C292.0 381.0 291.8 382.7 291.6 384.3 C291.4 386.0 291.1 387.7 291.0 389.3 C291.0 391.0 291.1 392.7 291.1 394.3 C291.1 396.0 291.1 397.7 291.1 399.3 C291.0 401.0 290.9 402.7 291.0 404.3 C291.1 406.0 291.4 407.7 291.6 409.3 C291.8 411.0 292.1 412.7 292.3 414.3 C292.6 416.0 292.8 417.7 293.1 419.3 C293.4 421.0 293.7 422.7 294.0 424.3 C294.3 426.0 294.7 427.7 294.9 429.3 C295.1 431.0 295.3 432.7 295.3 434.3 C295.4 436.0 295.5 437.7 295.1 439.3 C294.8 441.0 293.6 442.7 293.2 444.3 C292.9 446.0 292.9 447.7 292.9 449.3 C292.8 451.0 292.9 452.7 292.9 454.3 C292.9 456.0 292.9 457.7 292.9 459.3 C292.9 461.0 292.9 463.5 292.9 464.3" stroke="#cd8866" stroke-width="1.8" fill="none" opacity="0.75"/><path d="M314.2 183.9 C314.2 184.7 314.2 187.2 314.2 188.9 C314.2 190.6 314.2 192.2 314.2 193.9 C314.2 195.6 314.3 197.2 314.2 198.9 C314.2 200.6 314.0 202.2 313.8 203.9 C313.5 205.6 313.1 207.2 312.7 208.9 C312.2 210.6 311.8 212.2 311.3 213.9 C310.7 215.6 309.9 217.2 309.2 218.9 C308.6 220.6 307.9 222.2 307.4 223.9 C307.0 225.6 306.7 227.2 306.4 228.9 C306.0 230.6 305.6 232.2 305.3 233.9 C305.0 235.6 304.8 237.2 304.5 238.9 C304.3 240.6 304.2 242.2 304.0 243.9 C303.8 245.6 303.6 247.2 303.4 248.9 C303.2 250.6 303.1 252.2 303.0 253.9 C302.8 255.6 302.7 257.2 302.6 258.9 C302.5 260.6 302.4 262.2 302.3 263.9 C302.3 265.6 302.2 267.2 302.2 268.9 C302.3 270.6 302.4 272.2 302.5 273.9 C302.5 275.6 302.7 277.2 302.7 278.9 C302.6 280.6 302.5 282.2 302.0 283.9 C301.4 285.6 300.4 287.2 299.5 288.9 C298.5 290.6 297.1 292.2 296.1 293.9 C295.2 295.6 294.2 297.2 293.6 298.9 C293.0 300.6 292.7 302.2 292.4 303.9 C292.1 305.6 291.9 307.2 291.7 308.9 C291.5 310.6 291.3 312.2 291.2 313.9 C291.0 315.6 290.8 317.2 290.7 318.9 C290.7 320.6 290.8 322.2 291.1 323.9 C291.4 325.6 292.2 327.2 292.6 328.9 C293.0 330.6 293.1 332.2 293.3 333.9 C293.5 335.6 293.7 337.2 294.0 338.9 C294.2 340.6 294.4 342.2 294.6 343.9 C294.8 345.6 294.9 347.2 295.0 348.9 C295.2 350.6 295.4 352.2 295.4 353.9 C295.5 355.6 295.6 357.2 295.5 358.9 C295.5 360.6 295.2 362.2 295.0 363.9 C294.8 365.6 294.6 367.2 294.4 368.9 C294.2 370.6 294.0 372.2 293.8 373.9 C293.6 375.6 293.4 377.2 293.2 378.9 C293.0 380.6 292.8 382.2 292.6 383.9 C292.4 385.6 292.1 387.2 292.0 388.9 C292.0 390.6 292.1 392.2 292.1 393.9 C292.1 395.6 292.1 397.2 292.1 398.9 C292.0 400.6 291.9 402.2 292.0 403.9 C292.1 405.6 292.4 407.2 292.6 408.9 C292.8 410.6 293.1 412.2 293.4 413.9 C293.6 415.6 293.8 417.2 294.1 418.9 C294.4 420.6 294.7 422.2 295.0 423.9 C295.4 425.6 295.7 427.2 296.0 428.9 C296.2 430.6 296.4 432.2 296.4 433.9 C296.5 435.6 296.6 437.2 296.2 438.9 C295.8 440.6 294.7 442.2 294.3 443.9 C293.9 445.6 294.0 447.2 293.9 448.9 C293.8 450.6 293.9 452.2 293.9 453.9 C293.9 455.6 293.9 457.2 293.9 458.9 C293.9 460.6 293.9 463.1 293.9 463.9" stroke="#9b4734" stroke-width="1.8" fill="none" opacity="0.75"/><path d="M314.9 183.7 C314.9 184.5 314.9 187.0 314.9 188.7 C314.9 190.4 314.9 192.0 314.9 193.7 C314.9 195.4 315.0 197.0 314.9 198.7 C314.8 200.4 314.7 202.0 314.5 203.7 C314.2 205.4 313.8 207.0 313.3 208.7 C312.9 210.4 312.5 212.0 311.9 213.7 C311.3 215.4 310.5 217.0 309.9 218.7 C309.2 220.4 308.5 222.0 308.1 223.7 C307.6 225.4 307.3 227.0 307.0 228.7 C306.6 230.4 306.2 232.0 305.9 233.7 C305.6 235.4 305.3 237.0 305.1 238.7 C304.9 240.4 304.7 242.0 304.5 243.7 C304.3 245.4 304.1 247.0 304.0 248.7 C303.8 250.4 303.6 252.0 303.5 253.7 C303.4 255.4 303.3 257.0 303.2 258.7 C303.1 260.4 302.9 262.0 302.9 263.7 C302.8 265.4 302.8 267.0 302.8 268.7 C302.8 270.4 302.9 272.0 303.0 273.7 C303.1 275.4 303.3 277.0 303.2 278.7 C303.1 280.4 303.1 282.0 302.5 283.7 C302.0 285.4 301.0 287.0 300.0 288.7 C299.0 290.4 297.6 292.0 296.6 293.7 C295.6 295.4 294.7 297.0 294.0 298.7 C293.4 300.4 293.2 302.0 292.8 303.7 C292.5 305.4 292.3 307.0 292.1 308.7 C291.9 310.4 291.8 312.0 291.6 313.7 C291.4 315.4 291.2 317.0 291.2 318.7 C291.2 320.4 291.2 322.0 291.5 323.7 C291.8 325.4 292.7 327.0 293.1 328.7 C293.4 330.4 293.5 332.0 293.7 333.7 C294.0 335.4 294.2 337.0 294.4 338.7 C294.7 340.4 294.9 342.0 295.1 343.7 C295.3 345.4 295.4 347.0 295.5 348.7 C295.6 350.4 295.8 352.0 295.9 353.7 C296.0 355.4 296.1 357.0 296.0 358.7 C295.9 360.4 295.6 362.0 295.4 363.7 C295.3 365.4 295.1 367.0 294.9 368.7 C294.7 370.4 294.5 372.0 294.3 373.7 C294.1 375.4 293.9 377.0 293.7 378.7 C293.4 380.4 293.2 382.0 293.0 383.7 C292.8 385.4 292.6 387.0 292.5 388.7 C292.4 390.4 292.5 392.0 292.5 393.7 C292.5 395.4 292.5 397.0 292.5 398.7 C292.5 400.4 292.4 402.0 292.5 403.7 C292.6 405.4 292.8 407.0 293.1 408.7 C293.3 410.4 293.6 412.0 293.8 413.7 C294.1 415.4 294.3 417.0 294.6 418.7 C294.9 420.4 295.2 422.0 295.5 423.7 C295.8 425.4 296.2 427.0 296.5 428.7 C296.7 430.4 296.9 432.0 296.9 433.7 C297.0 435.4 297.0 437.0 296.7 438.7 C296.3 440.4 295.1 442.0 294.8 443.7 C294.4 445.4 294.4 447.0 294.4 448.7 C294.3 450.4 294.4 452.0 294.4 453.7 C294.4 455.4 294.4 457.0 294.4 458.7 C294.4 460.4 294.4 462.9 294.4 463.7" stroke="#c67452" stroke-width="1.3" fill="none" opacity="0.45"/><path d="M316.4 183.2 C316.4 184.0 316.4 186.5 316.4 188.2 C316.4 189.8 316.4 191.5 316.4 193.2 C316.4 194.8 316.5 196.5 316.4 198.2 C316.3 199.8 316.2 201.5 315.9 203.2 C315.7 204.8 315.2 206.5 314.8 208.2 C314.3 209.8 313.9 211.5 313.3 213.2 C312.7 214.8 311.9 216.5 311.2 218.2 C310.6 219.8 309.9 221.5 309.4 223.2 C308.9 224.8 308.6 226.5 308.3 228.2 C307.9 229.8 307.5 231.5 307.2 233.2 C306.8 234.8 306.6 236.5 306.4 238.2 C306.2 239.8 306.0 241.5 305.8 243.2 C305.6 244.8 305.4 246.5 305.2 248.2 C305.0 249.8 304.9 251.5 304.7 253.2 C304.6 254.8 304.5 256.5 304.4 258.2 C304.3 259.8 304.2 261.5 304.1 263.2 C304.0 264.8 304.0 266.5 304.0 268.2 C304.0 269.8 304.2 271.5 304.2 273.2 C304.3 274.8 304.5 276.5 304.4 278.2 C304.4 279.8 304.3 281.5 303.7 283.2 C303.1 284.8 302.1 286.5 301.1 288.2 C300.1 289.8 298.7 291.5 297.7 293.2 C296.7 294.8 295.7 296.5 295.0 298.2 C294.4 299.8 294.1 301.5 293.8 303.2 C293.5 304.8 293.3 306.5 293.1 308.2 C292.9 309.8 292.7 311.5 292.5 313.2 C292.4 314.8 292.1 316.5 292.1 318.2 C292.1 319.8 292.2 321.5 292.5 323.2 C292.8 324.8 293.7 326.5 294.1 328.2 C294.4 329.8 294.5 331.5 294.8 333.2 C295.0 334.8 295.2 336.5 295.4 338.2 C295.7 339.8 295.9 341.5 296.1 343.2 C296.3 344.8 296.4 346.5 296.5 348.2 C296.7 349.8 296.9 351.5 297.0 353.2 C297.1 354.8 297.2 356.5 297.1 358.2 C297.0 359.8 296.7 361.5 296.5 363.2 C296.3 364.8 296.1 366.5 295.9 368.2 C295.7 369.8 295.5 371.5 295.3 373.2 C295.1 374.8 294.9 376.5 294.7 378.2 C294.4 379.8 294.2 381.5 294.0 383.2 C293.8 384.8 293.6 386.5 293.5 388.2 C293.4 389.8 293.5 391.5 293.5 393.2 C293.5 394.8 293.5 396.5 293.5 398.2 C293.5 399.8 293.4 401.5 293.5 403.2 C293.6 404.8 293.8 406.5 294.1 408.2 C294.3 409.8 294.6 411.5 294.8 413.2 C295.1 414.8 295.3 416.5 295.6 418.2 C295.9 419.8 296.3 421.5 296.6 423.2 C296.9 424.8 297.3 426.5 297.5 428.2 C297.8 429.8 298.0 431.5 298.0 433.2 C298.0 434.8 298.1 436.5 297.8 438.2 C297.4 439.8 296.2 441.5 295.8 443.2 C295.4 444.8 295.5 446.5 295.4 448.2 C295.3 449.8 295.4 451.5 295.4 453.2 C295.4 454.8 295.4 456.5 295.4 458.2 C295.4 459.8 295.4 462.3 295.4 463.2" stroke="#be6647" stroke-width="2.4" fill="none" opacity="0.75"/><path d="M317.1 182.9 C317.1 183.7 317.1 186.2 317.1 187.9 C317.1 189.5 317.1 191.2 317.1 192.9 C317.1 194.5 317.2 196.2 317.1 197.9 C317.1 199.5 317.0 201.2 316.7 202.9 C316.4 204.5 315.9 206.2 315.5 207.9 C315.1 209.5 314.6 211.2 314.0 212.9 C313.4 214.5 312.6 216.2 311.9 217.9 C311.3 219.5 310.5 221.2 310.0 222.9 C309.5 224.5 309.3 226.2 308.9 227.9 C308.5 229.5 308.1 231.2 307.8 232.9 C307.5 234.5 307.2 236.2 307.0 237.9 C306.8 239.5 306.6 241.2 306.4 242.9 C306.2 244.5 306.0 246.2 305.8 247.9 C305.6 249.5 305.5 251.2 305.4 252.9 C305.2 254.5 305.1 256.2 305.0 257.9 C304.9 259.5 304.8 261.2 304.7 262.9 C304.6 264.5 304.6 266.2 304.6 267.9 C304.6 269.5 304.8 271.2 304.8 272.9 C304.9 274.5 305.1 276.2 305.0 277.9 C305.0 279.5 304.9 281.2 304.3 282.9 C303.7 284.5 302.7 286.2 301.7 287.9 C300.6 289.5 299.2 291.2 298.2 292.9 C297.2 294.5 296.2 296.2 295.5 297.9 C294.9 299.5 294.6 301.2 294.3 302.9 C294.0 304.5 293.8 306.2 293.6 307.9 C293.4 309.5 293.2 311.2 293.0 312.9 C292.9 314.5 292.6 316.2 292.6 317.9 C292.6 319.5 292.6 321.2 293.0 322.9 C293.3 324.5 294.2 326.2 294.6 327.9 C294.9 329.5 295.0 331.2 295.3 332.9 C295.5 334.5 295.7 336.2 296.0 337.9 C296.2 339.5 296.5 341.2 296.6 342.9 C296.8 344.5 296.9 346.2 297.1 347.9 C297.2 349.5 297.4 351.2 297.5 352.9 C297.6 354.5 297.7 356.2 297.6 357.9 C297.5 359.5 297.2 361.2 297.0 362.9 C296.8 364.5 296.6 366.2 296.4 367.9 C296.2 369.5 296.0 371.2 295.8 372.9 C295.6 374.5 295.4 376.2 295.2 377.9 C294.9 379.5 294.7 381.2 294.5 382.9 C294.3 384.5 294.1 386.2 294.0 387.9 C293.9 389.5 294.0 391.2 294.0 392.9 C294.0 394.5 294.0 396.2 294.0 397.9 C294.0 399.5 293.9 401.2 294.0 402.9 C294.1 404.5 294.3 406.2 294.6 407.9 C294.8 409.5 295.1 411.2 295.4 412.9 C295.6 414.5 295.9 416.2 296.1 417.9 C296.4 419.5 296.8 421.2 297.1 422.9 C297.4 424.5 297.8 426.2 298.0 427.9 C298.3 429.5 298.5 431.2 298.5 432.9 C298.6 434.5 298.7 436.2 298.3 437.9 C297.9 439.5 296.7 441.2 296.3 442.9 C295.9 444.5 296.0 446.2 295.9 447.9 C295.8 449.5 295.9 451.2 295.9 452.9 C295.9 454.5 295.9 456.2 295.9 457.9 C295.9 459.5 295.9 462.0 295.9 462.9" stroke="#9b4734" stroke-width="0.7" fill="none" opacity="0.6"/><path d="M318.1 182.5 C318.1 183.3 318.1 185.8 318.1 187.5 C318.1 189.1 318.1 190.8 318.1 192.5 C318.1 194.1 318.2 195.8 318.1 197.5 C318.0 199.1 317.9 200.8 317.6 202.5 C317.3 204.1 316.9 205.8 316.4 207.5 C316.0 209.1 315.5 210.8 314.9 212.5 C314.3 214.1 313.5 215.8 312.8 217.5 C312.1 219.1 311.4 220.8 310.9 222.5 C310.4 224.1 310.1 225.8 309.7 227.5 C309.4 229.1 308.9 230.8 308.6 232.5 C308.3 234.1 308.0 235.8 307.8 237.5 C307.6 239.1 307.4 240.8 307.2 242.5 C307.0 244.1 306.8 245.8 306.6 247.5 C306.4 249.1 306.3 250.8 306.1 252.5 C306.0 254.1 305.9 255.8 305.8 257.5 C305.7 259.1 305.5 260.8 305.5 262.5 C305.4 264.1 305.4 265.8 305.4 267.5 C305.4 269.1 305.5 270.8 305.6 272.5 C305.7 274.1 305.9 275.8 305.8 277.5 C305.7 279.1 305.6 280.8 305.0 282.5 C304.5 284.1 303.4 285.8 302.4 287.5 C301.3 289.1 299.9 290.8 298.9 292.5 C297.8 294.1 296.8 295.8 296.2 297.5 C295.5 299.1 295.3 300.8 294.9 302.5 C294.6 304.1 294.4 305.8 294.2 307.5 C294.0 309.1 293.8 310.8 293.6 312.5 C293.5 314.1 293.2 315.8 293.2 317.5 C293.2 319.1 293.2 320.8 293.6 322.5 C293.9 324.1 294.8 325.8 295.2 327.5 C295.6 329.1 295.7 330.8 295.9 332.5 C296.1 334.1 296.4 335.8 296.6 337.5 C296.8 339.1 297.1 340.8 297.3 342.5 C297.5 344.1 297.6 345.8 297.7 347.5 C297.9 349.1 298.1 350.8 298.1 352.5 C298.2 354.1 298.3 355.8 298.3 357.5 C298.2 359.1 297.9 360.8 297.7 362.5 C297.5 364.1 297.3 365.8 297.1 367.5 C296.9 369.1 296.7 370.8 296.4 372.5 C296.2 374.1 296.0 375.8 295.8 377.5 C295.6 379.1 295.3 380.8 295.1 382.5 C294.9 384.1 294.7 385.8 294.6 387.5 C294.5 389.1 294.6 390.8 294.6 392.5 C294.6 394.1 294.6 395.8 294.6 397.5 C294.6 399.1 294.5 400.8 294.6 402.5 C294.7 404.1 295.0 405.8 295.2 407.5 C295.4 409.1 295.7 410.8 296.0 412.5 C296.3 414.1 296.5 415.8 296.8 417.5 C297.1 419.1 297.4 420.8 297.8 422.5 C298.1 424.1 298.5 425.8 298.7 427.5 C299.0 429.1 299.2 430.8 299.2 432.5 C299.3 434.1 299.3 435.8 299.0 437.5 C298.6 439.1 297.3 440.8 296.9 442.5 C296.5 444.1 296.6 445.8 296.5 447.5 C296.5 449.1 296.5 450.8 296.5 452.5 C296.5 454.1 296.5 455.8 296.5 457.5 C296.5 459.1 296.5 461.6 296.5 462.5" stroke="#a14b36" stroke-width="0.7" fill="none" opacity="0.75"/><path d="M318.8 182.1 C318.8 182.9 318.8 185.4 318.8 187.1 C318.8 188.8 318.8 190.4 318.8 192.1 C318.8 193.8 318.9 195.4 318.8 197.1 C318.7 198.8 318.6 200.4 318.3 202.1 C318.0 203.8 317.6 205.4 317.1 207.1 C316.7 208.8 316.2 210.4 315.6 212.1 C315.0 213.8 314.1 215.4 313.4 217.1 C312.8 218.8 312.0 220.4 311.5 222.1 C311.0 223.8 310.7 225.4 310.4 227.1 C310.0 228.8 309.5 230.4 309.2 232.1 C308.9 233.8 308.6 235.4 308.4 237.1 C308.2 238.8 308.0 240.4 307.8 242.1 C307.6 243.8 307.4 245.4 307.2 247.1 C307.0 248.8 306.8 250.4 306.7 252.1 C306.6 253.8 306.5 255.4 306.4 257.1 C306.3 258.8 306.1 260.4 306.0 262.1 C306.0 263.8 305.9 265.4 305.9 267.1 C306.0 268.8 306.1 270.4 306.2 272.1 C306.2 273.8 306.5 275.4 306.4 277.1 C306.3 278.8 306.2 280.4 305.6 282.1 C305.0 283.8 303.9 285.4 302.9 287.1 C301.9 288.8 300.4 290.4 299.4 292.1 C298.3 293.8 297.3 295.4 296.7 297.1 C296.0 298.8 295.7 300.4 295.4 302.1 C295.1 303.8 294.9 305.4 294.6 307.1 C294.4 308.8 294.2 310.4 294.1 312.1 C293.9 313.8 293.6 315.4 293.6 317.1 C293.6 318.8 293.7 320.4 294.0 322.1 C294.4 323.8 295.3 325.4 295.7 327.1 C296.1 328.8 296.1 330.4 296.4 332.1 C296.6 333.8 296.9 335.4 297.1 337.1 C297.3 338.8 297.6 340.4 297.8 342.1 C298.0 343.8 298.1 345.4 298.2 347.1 C298.4 348.8 298.6 350.4 298.6 352.1 C298.7 353.8 298.8 355.4 298.8 357.1 C298.7 358.8 298.4 360.4 298.2 362.1 C298.0 363.8 297.8 365.4 297.6 367.1 C297.4 368.8 297.1 370.4 296.9 372.1 C296.7 373.8 296.5 375.4 296.3 377.1 C296.1 378.8 295.8 380.4 295.6 382.1 C295.4 383.8 295.2 385.4 295.1 387.1 C295.0 388.8 295.1 390.4 295.1 392.1 C295.1 393.8 295.1 395.4 295.1 397.1 C295.1 398.8 295.0 400.4 295.1 402.1 C295.2 403.8 295.4 405.4 295.7 407.1 C295.9 408.8 296.2 410.4 296.5 412.1 C296.7 413.8 297.0 415.4 297.3 417.1 C297.6 418.8 297.9 420.4 298.3 422.1 C298.6 423.8 299.0 425.4 299.2 427.1 C299.5 428.8 299.7 430.4 299.7 432.1 C299.8 433.8 299.9 435.4 299.5 437.1 C299.1 438.8 297.8 440.4 297.4 442.1 C297.0 443.8 297.1 445.4 297.0 447.1 C297.0 448.8 297.0 450.4 297.0 452.1 C297.0 453.8 297.0 455.4 297.0 457.1 C297.0 458.8 297.0 461.3 297.0 462.1" stroke="#cb8160" stroke-width="0.7" fill="none" opacity="0.45"/><path d="M319.6 181.7 C319.6 182.5 319.6 185.0 319.6 186.7 C319.6 188.3 319.6 190.0 319.6 191.7 C319.6 193.3 319.7 195.0 319.6 196.7 C319.5 198.3 319.4 200.0 319.1 201.7 C318.8 203.3 318.3 205.0 317.9 206.7 C317.4 208.3 317.0 210.0 316.4 211.7 C315.7 213.3 314.9 215.0 314.2 216.7 C313.5 218.3 312.7 220.0 312.2 221.7 C311.7 223.3 311.4 225.0 311.1 226.7 C310.7 228.3 310.2 230.0 309.9 231.7 C309.6 233.3 309.3 235.0 309.1 236.7 C308.8 238.3 308.7 240.0 308.5 241.7 C308.2 243.3 308.0 245.0 307.8 246.7 C307.6 248.3 307.5 250.0 307.4 251.7 C307.2 253.3 307.1 255.0 307.0 256.7 C306.9 258.3 306.7 260.0 306.7 261.7 C306.6 263.3 306.6 265.0 306.6 266.7 C306.6 268.3 306.7 270.0 306.8 271.7 C306.9 273.3 307.1 275.0 307.0 276.7 C306.9 278.3 306.8 280.0 306.2 281.7 C305.6 283.3 304.5 285.0 303.5 286.7 C302.5 288.3 301.0 290.0 299.9 291.7 C298.9 293.3 297.9 295.0 297.2 296.7 C296.5 298.3 296.3 300.0 295.9 301.7 C295.6 303.3 295.4 305.0 295.2 306.7 C294.9 308.3 294.7 310.0 294.6 311.7 C294.4 313.3 294.1 315.0 294.1 316.7 C294.1 318.3 294.2 320.0 294.5 321.7 C294.9 323.3 295.8 325.0 296.2 326.7 C296.6 328.3 296.7 330.0 296.9 331.7 C297.2 333.3 297.4 335.0 297.6 336.7 C297.9 338.3 298.2 340.0 298.3 341.7 C298.5 343.3 298.6 345.0 298.8 346.7 C298.9 348.3 299.1 350.0 299.2 351.7 C299.3 353.3 299.4 355.0 299.3 356.7 C299.2 358.3 298.9 360.0 298.7 361.7 C298.5 363.3 298.3 365.0 298.1 366.7 C297.9 368.3 297.7 370.0 297.5 371.7 C297.3 373.3 297.0 375.0 296.8 376.7 C296.6 378.3 296.4 380.0 296.2 381.7 C296.0 383.3 295.7 385.0 295.6 386.7 C295.5 388.3 295.6 390.0 295.6 391.7 C295.6 393.3 295.6 395.0 295.6 396.7 C295.6 398.3 295.5 400.0 295.6 401.7 C295.7 403.3 296.0 405.0 296.2 406.7 C296.4 408.3 296.7 410.0 297.0 411.7 C297.3 413.3 297.5 415.0 297.8 416.7 C298.1 418.3 298.5 420.0 298.8 421.7 C299.1 423.3 299.6 425.0 299.8 426.7 C300.0 428.3 300.3 430.0 300.3 431.7 C300.3 433.3 300.4 435.0 300.0 436.7 C299.7 438.3 298.4 440.0 298.0 441.7 C297.6 443.3 297.6 445.0 297.6 446.7 C297.5 448.3 297.6 450.0 297.6 451.7 C297.6 453.3 297.6 455.0 297.6 456.7 C297.6 458.3 297.6 460.8 297.6 461.7" stroke="#cd8866" stroke-width="1.3" fill="none" opacity="0.45"/><path d="M320.3 181.2 C320.3 182.0 320.3 184.5 320.3 186.2 C320.3 187.9 320.3 189.5 320.3 191.2 C320.3 192.9 320.3 194.5 320.3 196.2 C320.2 197.9 320.1 199.5 319.8 201.2 C319.5 202.9 319.0 204.5 318.6 206.2 C318.1 207.9 317.6 209.5 317.0 211.2 C316.4 212.9 315.5 214.5 314.8 216.2 C314.1 217.9 313.4 219.5 312.8 221.2 C312.3 222.9 312.0 224.5 311.7 226.2 C311.3 227.9 310.8 229.5 310.5 231.2 C310.1 232.9 309.9 234.5 309.7 236.2 C309.4 237.9 309.2 239.5 309.0 241.2 C308.8 242.9 308.6 244.5 308.4 246.2 C308.2 247.9 308.1 249.5 307.9 251.2 C307.8 252.9 307.7 254.5 307.6 256.2 C307.5 257.9 307.3 259.5 307.2 261.2 C307.2 262.9 307.1 264.5 307.1 266.2 C307.2 267.9 307.3 269.5 307.4 271.2 C307.4 272.9 307.7 274.5 307.6 276.2 C307.5 277.9 307.4 279.5 306.8 281.2 C306.2 282.9 305.1 284.5 304.0 286.2 C303.0 287.9 301.5 289.5 300.4 291.2 C299.4 292.9 298.3 294.5 297.7 296.2 C297.0 297.9 296.7 299.5 296.4 301.2 C296.0 302.9 295.8 304.5 295.6 306.2 C295.4 307.9 295.2 309.5 295.0 311.2 C294.8 312.9 294.6 314.5 294.6 316.2 C294.6 317.9 294.6 319.5 295.0 321.2 C295.3 322.9 296.2 324.5 296.6 326.2 C297.0 327.9 297.1 329.5 297.4 331.2 C297.6 332.9 297.9 334.5 298.1 336.2 C298.3 337.9 298.6 339.5 298.8 341.2 C299.0 342.9 299.1 344.5 299.3 346.2 C299.4 347.9 299.6 349.5 299.7 351.2 C299.8 352.9 299.9 354.5 299.8 356.2 C299.7 357.9 299.4 359.5 299.2 361.2 C299.0 362.9 298.8 364.5 298.6 366.2 C298.4 367.9 298.2 369.5 297.9 371.2 C297.7 372.9 297.5 374.5 297.3 376.2 C297.1 377.9 296.8 379.5 296.6 381.2 C296.4 382.9 296.1 384.5 296.0 386.2 C296.0 387.9 296.1 389.5 296.1 391.2 C296.1 392.9 296.0 394.5 296.0 396.2 C296.0 397.9 295.9 399.5 296.0 401.2 C296.1 402.9 296.4 404.5 296.7 406.2 C296.9 407.9 297.2 409.5 297.5 411.2 C297.8 412.9 298.0 414.5 298.3 416.2 C298.6 417.9 299.0 419.5 299.3 421.2 C299.6 422.9 300.0 424.5 300.3 426.2 C300.5 427.9 300.7 429.5 300.8 431.2 C300.8 432.9 300.9 434.5 300.5 436.2 C300.1 437.9 298.9 439.5 298.4 441.2 C298.0 442.9 298.1 444.5 298.0 446.2 C298.0 447.9 298.0 449.5 298.0 451.2 C298.0 452.9 298.0 454.5 298.0 456.2 C298.0 457.9 298.0 460.4 298.0 461.2" stroke="#a14b36" stroke-width="1.8" fill="none" opacity="0.75"/><path d="M320.6 180.9 C320.6 181.8 320.6 184.3 320.6 185.9 C320.6 187.6 320.6 189.3 320.6 190.9 C320.6 192.6 320.7 194.3 320.6 195.9 C320.5 197.6 320.4 199.3 320.1 200.9 C319.8 202.6 319.3 204.3 318.9 205.9 C318.4 207.6 318.0 209.3 317.3 210.9 C316.7 212.6 315.8 214.3 315.1 215.9 C314.4 217.6 313.7 219.3 313.1 220.9 C312.6 222.6 312.3 224.3 311.9 225.9 C311.6 227.6 311.1 229.3 310.8 230.9 C310.4 232.6 310.2 234.3 309.9 235.9 C309.7 237.6 309.5 239.3 309.3 240.9 C309.1 242.6 308.9 244.3 308.7 245.9 C308.5 247.6 308.3 249.3 308.2 250.9 C308.1 252.6 308.0 254.3 307.8 255.9 C307.7 257.6 307.6 259.3 307.5 260.9 C307.4 262.6 307.4 264.3 307.4 265.9 C307.4 267.6 307.6 269.3 307.6 270.9 C307.7 272.6 308.0 274.3 307.9 275.9 C307.8 277.6 307.6 279.3 307.0 280.9 C306.4 282.6 305.3 284.3 304.3 285.9 C303.2 287.6 301.7 289.3 300.7 290.9 C299.6 292.6 298.6 294.3 297.9 295.9 C297.2 297.6 296.9 299.3 296.6 300.9 C296.2 302.6 296.0 304.3 295.8 305.9 C295.6 307.6 295.4 309.3 295.2 310.9 C295.1 312.6 294.8 314.3 294.8 315.9 C294.8 317.6 294.8 319.3 295.2 320.9 C295.5 322.6 296.5 324.3 296.9 325.9 C297.3 327.6 297.4 329.3 297.6 330.9 C297.8 332.6 298.1 334.3 298.3 335.9 C298.6 337.6 298.9 339.3 299.1 340.9 C299.2 342.6 299.3 344.3 299.5 345.9 C299.6 347.6 299.8 349.3 299.9 350.9 C300.0 352.6 300.1 354.3 300.0 355.9 C300.0 357.6 299.6 359.3 299.4 360.9 C299.2 362.6 299.0 364.3 298.8 365.9 C298.6 367.6 298.4 369.3 298.2 370.9 C298.0 372.6 297.7 374.3 297.5 375.9 C297.3 377.6 297.0 379.3 296.8 380.9 C296.6 382.6 296.4 384.3 296.3 385.9 C296.2 387.6 296.3 389.3 296.3 390.9 C296.3 392.6 296.3 394.3 296.3 395.9 C296.3 397.6 296.2 399.3 296.3 400.9 C296.4 402.6 296.6 404.3 296.9 405.9 C297.1 407.6 297.4 409.3 297.7 410.9 C298.0 412.6 298.2 414.3 298.5 415.9 C298.8 417.6 299.2 419.3 299.5 420.9 C299.9 422.6 300.3 424.3 300.5 425.9 C300.8 427.6 301.0 429.3 301.0 430.9 C301.1 432.6 301.2 434.3 300.8 435.9 C300.4 437.6 299.1 439.3 298.7 440.9 C298.2 442.6 298.3 444.3 298.3 445.9 C298.2 447.6 298.3 449.3 298.3 450.9 C298.3 452.6 298.3 454.3 298.3 455.9 C298.3 457.6 298.3 460.1 298.3 460.9" stroke="#c67452" stroke-width="1.8" fill="none" opacity="0.45"/><path d="M321.0 180.5 C321.0 181.4 321.0 183.9 321.0 185.5 C321.0 187.2 321.0 188.9 321.0 190.5 C321.0 192.2 321.1 193.9 321.0 195.5 C320.9 197.2 320.8 198.9 320.5 200.5 C320.2 202.2 319.8 203.9 319.3 205.5 C318.8 207.2 318.4 208.9 317.7 210.5 C317.1 212.2 316.2 213.9 315.5 215.5 C314.8 217.2 314.0 218.9 313.5 220.5 C313.0 222.2 312.7 223.9 312.3 225.5 C311.9 227.2 311.5 228.9 311.1 230.5 C310.8 232.2 310.5 233.9 310.3 235.5 C310.1 237.2 309.9 238.9 309.7 240.5 C309.4 242.2 309.2 243.9 309.0 245.5 C308.8 247.2 308.7 248.9 308.5 250.5 C308.4 252.2 308.3 253.9 308.2 255.5 C308.1 257.2 307.9 258.9 307.8 260.5 C307.8 262.2 307.7 263.9 307.8 265.5 C307.8 267.2 307.9 268.9 308.0 270.5 C308.1 272.2 308.3 273.9 308.2 275.5 C308.1 277.2 308.0 278.9 307.4 280.5 C306.8 282.2 305.7 283.9 304.6 285.5 C303.5 287.2 302.0 288.9 301.0 290.5 C299.9 292.2 298.9 293.9 298.2 295.5 C297.5 297.2 297.2 298.9 296.9 300.5 C296.5 302.2 296.3 303.9 296.1 305.5 C295.8 307.2 295.7 308.9 295.5 310.5 C295.3 312.2 295.0 313.9 295.0 315.5 C295.0 317.2 295.1 318.9 295.4 320.5 C295.8 322.2 296.7 323.9 297.1 325.5 C297.6 327.2 297.6 328.9 297.9 330.5 C298.1 332.2 298.4 333.9 298.6 335.5 C298.9 337.2 299.1 338.9 299.3 340.5 C299.5 342.2 299.6 343.9 299.8 345.5 C299.9 347.2 300.1 348.9 300.2 350.5 C300.3 352.2 300.4 353.9 300.3 355.5 C300.2 357.2 299.9 358.9 299.7 360.5 C299.5 362.2 299.3 363.9 299.1 365.5 C298.9 367.2 298.7 368.9 298.5 370.5 C298.2 372.2 298.0 373.9 297.8 375.5 C297.6 377.2 297.3 378.9 297.1 380.5 C296.9 382.2 296.6 383.9 296.5 385.5 C296.5 387.2 296.5 388.9 296.5 390.5 C296.5 392.2 296.5 393.9 296.5 395.5 C296.5 397.2 296.4 398.9 296.5 400.5 C296.6 402.2 296.9 403.9 297.2 405.5 C297.4 407.2 297.7 408.9 298.0 410.5 C298.3 412.2 298.5 413.9 298.8 415.5 C299.1 417.2 299.5 418.9 299.8 420.5 C300.2 422.2 300.6 423.9 300.8 425.5 C301.1 427.2 301.3 428.9 301.3 430.5 C301.4 432.2 301.5 433.9 301.1 435.5 C300.7 437.2 299.4 438.9 299.0 440.5 C298.5 442.2 298.6 443.9 298.5 445.5 C298.5 447.2 298.5 448.9 298.5 450.5 C298.5 452.2 298.5 453.9 298.5 455.5 C298.5 457.2 298.5 459.7 298.5 460.5" stroke="#be6647" stroke-width="1.3" fill="none" opacity="0.6"/><path d="M321.4 180.1 C321.4 180.9 321.4 183.4 321.4 185.1 C321.4 186.7 321.4 188.4 321.4 190.1 C321.4 191.7 321.5 193.4 321.4 195.1 C321.3 196.7 321.2 198.4 320.9 200.1 C320.6 201.7 320.1 203.4 319.6 205.1 C319.2 206.7 318.7 208.4 318.1 210.1 C317.4 211.7 316.5 213.4 315.8 215.1 C315.1 216.7 314.4 218.4 313.8 220.1 C313.3 221.7 313.0 223.4 312.6 225.1 C312.2 226.7 311.8 228.4 311.4 230.1 C311.1 231.7 310.8 233.4 310.6 235.1 C310.4 236.7 310.2 238.4 310.0 240.1 C309.7 241.7 309.5 243.4 309.3 245.1 C309.1 246.7 309.0 248.4 308.8 250.1 C308.7 251.7 308.6 253.4 308.5 255.1 C308.4 256.7 308.2 258.4 308.1 260.1 C308.1 261.7 308.0 263.4 308.0 265.1 C308.1 266.7 308.2 268.4 308.3 270.1 C308.3 271.7 308.6 273.4 308.5 275.1 C308.4 276.7 308.3 278.4 307.6 280.1 C307.0 281.7 305.9 283.4 304.9 285.1 C303.8 286.7 302.3 288.4 301.2 290.1 C300.1 291.7 299.1 293.4 298.4 295.1 C297.7 296.7 297.4 298.4 297.1 300.1 C296.7 301.7 296.5 303.4 296.3 305.1 C296.1 306.7 295.9 308.4 295.7 310.1 C295.5 311.7 295.3 313.4 295.3 315.1 C295.3 316.7 295.3 318.4 295.7 320.1 C296.0 321.7 297.0 323.4 297.4 325.1 C297.8 326.7 297.9 328.4 298.1 330.1 C298.4 331.7 298.6 333.4 298.9 335.1 C299.1 336.7 299.4 338.4 299.6 340.1 C299.8 341.7 299.9 343.4 300.0 345.1 C300.2 346.7 300.4 348.4 300.5 350.1 C300.6 351.7 300.7 353.4 300.6 355.1 C300.5 356.7 300.2 358.4 300.0 360.1 C299.8 361.7 299.6 363.4 299.3 365.1 C299.1 366.7 298.9 368.4 298.7 370.1 C298.5 371.7 298.2 373.4 298.0 375.1 C297.8 376.7 297.6 378.4 297.3 380.1 C297.1 381.7 296.9 383.4 296.8 385.1 C296.7 386.7 296.8 388.4 296.8 390.1 C296.8 391.7 296.8 393.4 296.8 395.1 C296.8 396.7 296.7 398.4 296.8 400.1 C296.9 401.7 297.2 403.4 297.4 405.1 C297.6 406.7 298.0 408.4 298.2 410.1 C298.5 411.7 298.8 413.4 299.1 415.1 C299.4 416.7 299.7 418.4 300.1 420.1 C300.4 421.7 300.8 423.4 301.1 425.1 C301.3 426.7 301.6 428.4 301.6 430.1 C301.6 431.7 301.7 433.4 301.3 435.1 C300.9 436.7 299.6 438.4 299.2 440.1 C298.8 441.7 298.8 443.4 298.8 445.1 C298.7 446.7 298.8 448.4 298.8 450.1 C298.8 451.7 298.8 453.4 298.8 455.1 C298.8 456.7 298.8 459.2 298.8 460.1" stroke="#a14b36" stroke-width="0.7" fill="none" opacity="0.9"/><path d="M321.6 179.5 C321.6 180.3 321.6 182.8 321.6 184.5 C321.6 186.2 321.6 187.8 321.6 189.5 C321.6 191.2 321.7 192.8 321.6 194.5 C321.5 196.2 321.4 197.8 321.1 199.5 C320.8 201.2 320.3 202.8 319.9 204.5 C319.4 206.2 318.9 207.8 318.3 209.5 C317.7 211.2 316.8 212.8 316.0 214.5 C315.3 216.2 314.6 217.8 314.0 219.5 C313.5 221.2 313.2 222.8 312.8 224.5 C312.4 226.2 312.0 227.8 311.6 229.5 C311.3 231.2 311.1 232.8 310.8 234.5 C310.6 236.2 310.4 237.8 310.2 239.5 C310.0 241.2 309.7 242.8 309.5 244.5 C309.3 246.2 309.2 247.8 309.0 249.5 C308.9 251.2 308.8 252.8 308.7 254.5 C308.6 256.2 308.4 257.8 308.3 259.5 C308.3 261.2 308.2 262.8 308.2 264.5 C308.3 266.2 308.4 267.8 308.5 269.5 C308.6 271.2 308.8 272.8 308.7 274.5 C308.6 276.2 308.5 277.8 307.8 279.5 C307.2 281.2 306.1 282.8 305.0 284.5 C304.0 286.2 302.5 287.8 301.4 289.5 C300.3 291.2 299.3 292.8 298.6 294.5 C297.9 296.2 297.6 297.8 297.3 299.5 C296.9 301.2 296.7 302.8 296.5 304.5 C296.2 306.2 296.1 307.8 295.9 309.5 C295.7 311.2 295.4 312.8 295.4 314.5 C295.4 316.2 295.5 317.8 295.8 319.5 C296.2 321.2 297.1 322.8 297.6 324.5 C298.0 326.2 298.0 327.8 298.3 329.5 C298.5 331.2 298.8 332.8 299.0 334.5 C299.3 336.2 299.6 337.8 299.8 339.5 C300.0 341.2 300.1 342.8 300.2 344.5 C300.3 346.2 300.5 347.8 300.6 349.5 C300.7 351.2 300.8 352.8 300.8 354.5 C300.7 356.2 300.3 357.8 300.1 359.5 C299.9 361.2 299.7 362.8 299.5 364.5 C299.3 366.2 299.1 367.8 298.9 369.5 C298.6 371.2 298.4 372.8 298.2 374.5 C298.0 376.2 297.7 377.8 297.5 379.5 C297.3 381.2 297.0 382.8 297.0 384.5 C296.9 386.2 297.0 387.8 297.0 389.5 C297.0 391.2 297.0 392.8 297.0 394.5 C297.0 396.2 296.8 397.8 297.0 399.5 C297.1 401.2 297.3 402.8 297.6 404.5 C297.8 406.2 298.1 407.8 298.4 409.5 C298.7 411.2 298.9 412.8 299.2 414.5 C299.6 416.2 299.9 417.8 300.3 419.5 C300.6 421.2 301.0 422.8 301.3 424.5 C301.5 426.2 301.7 427.8 301.8 429.5 C301.8 431.2 301.9 432.8 301.5 434.5 C301.1 436.2 299.8 437.8 299.4 439.5 C298.9 441.2 299.0 442.8 298.9 444.5 C298.9 446.2 298.9 447.8 298.9 449.5 C298.9 451.2 298.9 452.8 298.9 454.5 C298.9 456.2 298.9 458.7 298.9 459.5" stroke="#c47859" stroke-width="1.0" fill="none" opacity="0.9"/><path d="M321.7 179.2 C321.7 180.1 321.7 182.6 321.7 184.2 C321.7 185.9 321.7 187.6 321.7 189.2 C321.7 190.9 321.8 192.6 321.7 194.2 C321.6 195.9 321.5 197.6 321.2 199.2 C320.9 200.9 320.4 202.6 319.9 204.2 C319.5 205.9 319.0 207.6 318.4 209.2 C317.7 210.9 316.8 212.6 316.1 214.2 C315.4 215.9 314.6 217.6 314.1 219.2 C313.6 220.9 313.3 222.6 312.9 224.2 C312.5 225.9 312.0 227.6 311.7 229.2 C311.4 230.9 311.1 232.6 310.9 234.2 C310.6 235.9 310.4 237.6 310.2 239.2 C310.0 240.9 309.8 242.6 309.6 244.2 C309.4 245.9 309.2 247.6 309.1 249.2 C309.0 250.9 308.9 252.6 308.7 254.2 C308.6 255.9 308.5 257.6 308.4 259.2 C308.3 260.9 308.3 262.6 308.3 264.2 C308.3 265.9 308.5 267.6 308.5 269.2 C308.6 270.9 308.9 272.6 308.8 274.2 C308.7 275.9 308.5 277.6 307.9 279.2 C307.3 280.9 306.2 282.6 305.1 284.2 C304.0 285.9 302.5 287.6 301.4 289.2 C300.4 290.9 299.3 292.6 298.6 294.2 C297.9 295.9 297.7 297.6 297.3 299.2 C297.0 300.9 296.7 302.6 296.5 304.2 C296.3 305.9 296.1 307.6 295.9 309.2 C295.7 310.9 295.5 312.6 295.5 314.2 C295.5 315.9 295.5 317.6 295.9 319.2 C296.2 320.9 297.2 322.6 297.6 324.2 C298.0 325.9 298.1 327.6 298.3 329.2 C298.6 330.9 298.8 332.6 299.1 334.2 C299.3 335.9 299.6 337.6 299.8 339.2 C300.0 340.9 300.1 342.6 300.2 344.2 C300.4 345.9 300.6 347.6 300.7 349.2 C300.8 350.9 300.9 352.6 300.8 354.2 C300.7 355.9 300.4 357.6 300.2 359.2 C300.0 360.9 299.8 362.6 299.6 364.2 C299.4 365.9 299.1 367.6 298.9 369.2 C298.7 370.9 298.5 372.6 298.2 374.2 C298.0 375.9 297.8 377.6 297.6 379.2 C297.4 380.9 297.1 382.6 297.0 384.2 C296.9 385.9 297.0 387.6 297.0 389.2 C297.0 390.9 297.0 392.6 297.0 394.2 C297.0 395.9 296.9 397.6 297.0 399.2 C297.1 400.9 297.4 402.6 297.6 404.2 C297.9 405.9 298.2 407.6 298.5 409.2 C298.7 410.9 299.0 412.6 299.3 414.2 C299.6 415.9 300.0 417.6 300.3 419.2 C300.6 420.9 301.1 422.6 301.3 424.2 C301.6 425.9 301.8 427.6 301.8 429.2 C301.9 430.9 302.0 432.6 301.6 434.2 C301.2 435.9 299.8 437.6 299.4 439.2 C299.0 440.9 299.1 442.6 299.0 444.2 C298.9 445.9 299.0 447.6 299.0 449.2 C299.0 450.9 299.0 452.6 299.0 454.2 C299.0 455.9 299.0 458.4 299.0 459.2" stroke="#c67452" stroke-width="1.8" fill="none" opacity="0.75"/><path d="M250.6 196 V462" stroke="#d9906c" stroke-width="1" opacity=".6"/></g><rect x="170" y="190" width="160" height="280" fill="url(#vg)"/></g></svg><svg class="abs" style="left:501px;top:122px" width="466" height="402" viewBox="501 122 466 402"><defs><linearGradient id="cg" x1="0" x2="0" y1="0" y2="1"><stop offset="0" stop-color="#eef3fb"/><stop offset="1" stop-color="#fff"/></linearGradient><linearGradient id="cg2" x1="0" x2="1" y1="0" y2="0"><stop offset="0" stop-color="#eef3fb"/><stop offset="1" stop-color="#fff"/></linearGradient></defs><rect x="501" y="122" width="466" height="402" fill="#fff"/><rect x="501" y="122" width="466" height="6" fill="url(#cg)"/><rect x="501" y="122" width="5" height="402" fill="url(#cg2)" opacity=".8"/><rect x="962" y="122" width="5" height="402" fill="url(#cg2)" opacity=".8" transform="rotate(180 964.5 323.0)"/><rect x="501" y="519" width="466" height="5" fill="url(#cg)" opacity=".6" transform="rotate(180 734.0 521.5)"/><path d="M531.5 128 V518" stroke="#e6e6e6" stroke-width="1"/><path d="M545.5 128 V518" stroke="#e6e6e6" stroke-width="1"/><path d="M559.5 128 V518" stroke="#e6e6e6" stroke-width="1"/><path d="M587.5 128 V518" stroke="#e6e6e6" stroke-width="1"/><path d="M601.5 128 V518" stroke="#e6e6e6" stroke-width="1"/><path d="M615.5 128 V518" stroke="#e6e6e6" stroke-width="1"/><path d="M643.5 128 V518" stroke="#e6e6e6" stroke-width="1"/><path d="M657.5 128 V518" stroke="#e6e6e6" stroke-width="1"/><path d="M671.5 128 V518" stroke="#e6e6e6" stroke-width="1"/><path d="M699.5 128 V518" stroke="#e6e6e6" stroke-width="1"/><path d="M713.5 128 V518" stroke="#e6e6e6" stroke-width="1"/><path d="M727.5 128 V518" stroke="#e6e6e6" stroke-width="1"/><path d="M755.5 128 V518" stroke="#e6e6e6" stroke-width="1"/><path d="M769.5 128 V518" stroke="#e6e6e6" stroke-width="1"/><path d="M783.5 128 V518" stroke="#e6e6e6" stroke-width="1"/><path d="M811.5 128 V518" stroke="#e6e6e6" stroke-width="1"/><path d="M825.5 128 V518" stroke="#e6e6e6" stroke-width="1"/><path d="M839.5 128 V518" stroke="#e6e6e6" stroke-width="1"/><path d="M867.5 128 V518" stroke="#e6e6e6" stroke-width="1"/><path d="M881.5 128 V518" stroke="#e6e6e6" stroke-width="1"/><path d="M895.5 128 V518" stroke="#e6e6e6" stroke-width="1"/><path d="M923.5 128 V518" stroke="#e6e6e6" stroke-width="1"/><path d="M937.5 128 V518" stroke="#e6e6e6" stroke-width="1"/><path d="M951.5 128 V518" stroke="#e6e6e6" stroke-width="1"/><path d="M506 493.5 H962" stroke="#e6e6e6" stroke-width="1"/><path d="M506 479.5 H962" stroke="#e6e6e6" stroke-width="1"/><path d="M506 465.5 H962" stroke="#e6e6e6" stroke-width="1"/><path d="M506 437.5 H962" stroke="#e6e6e6" stroke-width="1"/><path d="M506 423.5 H962" stroke="#e6e6e6" stroke-width="1"/><path d="M506 409.5 H962" stroke="#e6e6e6" stroke-width="1"/><path d="M506 381.5 H962" stroke="#e6e6e6" stroke-width="1"/><path d="M506 367.5 H962" stroke="#e6e6e6" stroke-width="1"/><path d="M506 353.5 H962" stroke="#e6e6e6" stroke-width="1"/><path d="M506 325.5 H962" stroke="#e6e6e6" stroke-width="1"/><path d="M506 311.5 H962" stroke="#e6e6e6" stroke-width="1"/><path d="M506 297.5 H962" stroke="#e6e6e6" stroke-width="1"/><path d="M506 269.5 H962" stroke="#e6e6e6" stroke-width="1"/><path d="M506 255.5 H962" stroke="#e6e6e6" stroke-width="1"/><path d="M506 241.5 H962" stroke="#e6e6e6" stroke-width="1"/><path d="M506 213.5 H962" stroke="#e6e6e6" stroke-width="1"/><path d="M506 199.5 H962" stroke="#e6e6e6" stroke-width="1"/><path d="M506 185.5 H962" stroke="#e6e6e6" stroke-width="1"/><path d="M506 157.5 H962" stroke="#e6e6e6" stroke-width="1"/><path d="M506 143.5 H962" stroke="#e6e6e6" stroke-width="1"/><path d="M506 129.5 H962" stroke="#e6e6e6" stroke-width="1"/><path d="M517.5 128 V518" stroke="#adadad" stroke-width="1"/><path d="M573.5 128 V518" stroke="#adadad" stroke-width="1"/><path d="M629.5 128 V518" stroke="#adadad" stroke-width="1"/><path d="M685.5 128 V518" stroke="#adadad" stroke-width="1"/><path d="M741.5 128 V518" stroke="#adadad" stroke-width="1"/><path d="M797.5 128 V518" stroke="#adadad" stroke-width="1"/><path d="M853.5 128 V518" stroke="#adadad" stroke-width="1"/><path d="M909.5 128 V518" stroke="#adadad" stroke-width="1"/><path d="M506 507.5 H962" stroke="#adadad" stroke-width="1"/><path d="M506 451.5 H962" stroke="#adadad" stroke-width="1"/><path d="M506 395.5 H962" stroke="#adadad" stroke-width="1"/><path d="M506 339.5 H962" stroke="#adadad" stroke-width="1"/><path d="M506 283.5 H962" stroke="#adadad" stroke-width="1"/><path d="M506 227.5 H962" stroke="#adadad" stroke-width="1"/><path d="M506 171.5 H962" stroke="#adadad" stroke-width="1"/><path d="M655.4 166.5 H826.6" stroke="#595959" stroke-width="2.6" fill="none"/><path d="M681.3 451 H800.7" stroke="#595959" stroke-width="2.6" fill="none"/><path d="M807.8 263.5 C806.9 265.0 804.1 268.8 802.4 272.3 C800.7 275.8 798.5 280.1 797.5 284.5 C796.5 288.9 796.9 295.0 796.7 298.7 C796.5 302.4 797.2 304.7 796.3 306.8 C795.3 308.9 791.0 309.8 791.0 311.5 C791.0 313.2 794.5 314.1 796.3 317.0 C798.1 319.9 800.4 325.8 801.6 329.2 C802.8 332.6 803.3 334.3 803.6 337.3 C803.9 340.3 803.9 343.7 803.2 347.4 C802.5 351.1 800.5 355.5 799.5 359.6 C798.5 363.7 797.8 367.1 797.5 371.8 C797.2 376.5 797.4 381.9 797.5 388.0 C797.6 394.1 797.4 402.2 797.9 408.3 C798.4 414.4 799.4 419.8 800.3 424.5 C801.2 429.2 802.5 433.4 803.2 436.7 C803.9 439.9 804.5 441.9 804.4 444.0 C804.3 446.1 803.0 448.3 802.4 449.5 C801.8 450.7 801.0 450.8 800.7 451.0" stroke="#595959" stroke-width="2.6" fill="none" stroke-linejoin="round"/><path d="M826.8 166.0 C825.6 168.4 821.8 175.8 819.8 180.5 C817.8 185.2 816.1 189.5 814.7 194.3 C813.3 199.1 812.0 204.4 811.3 209.5 C810.6 214.6 810.4 219.9 810.4 225.0 C810.4 230.1 811.0 235.7 811.3 240.0 C811.6 244.3 812.1 247.8 812.2 251.0 C812.3 254.2 812.7 257.2 812.0 259.3 C811.3 261.4 808.7 262.8 808.0 263.5" stroke="#0606ee" stroke-width="2.9" fill="none" stroke-linejoin="round"/><path d="M674.2 263.5 C675.1 265.0 677.9 268.8 679.6 272.3 C681.3 275.8 683.5 280.1 684.5 284.5 C685.5 288.9 685.1 295.0 685.3 298.7 C685.5 302.4 684.8 304.7 685.7 306.8 C686.7 308.9 691.0 309.8 691.0 311.5 C691.0 313.2 687.5 314.1 685.7 317.0 C683.9 319.9 681.6 325.8 680.4 329.2 C679.2 332.6 678.7 334.3 678.4 337.3 C678.1 340.3 678.1 343.7 678.8 347.4 C679.5 351.1 681.5 355.5 682.5 359.6 C683.5 363.7 684.2 367.1 684.5 371.8 C684.8 376.5 684.6 381.9 684.5 388.0 C684.4 394.1 684.6 402.2 684.1 408.3 C683.6 414.4 682.6 419.8 681.7 424.5 C680.8 429.2 679.5 433.4 678.8 436.7 C678.1 439.9 677.5 441.9 677.6 444.0 C677.7 446.1 679.0 448.3 679.6 449.5 C680.2 450.7 681.0 450.8 681.3 451.0" stroke="#595959" stroke-width="2.6" fill="none" stroke-linejoin="round"/><path d="M655.2 166.0 C656.4 168.4 660.2 175.8 662.2 180.5 C664.2 185.2 665.9 189.5 667.3 194.3 C668.7 199.1 670.0 204.4 670.7 209.5 C671.4 214.6 671.6 219.9 671.6 225.0 C671.6 230.1 671.0 235.7 670.7 240.0 C670.4 244.3 669.9 247.8 669.8 251.0 C669.7 254.2 669.3 257.2 670.0 259.3 C670.7 261.4 673.3 262.8 674.0 263.5" stroke="#0606ee" stroke-width="2.9" fill="none" stroke-linejoin="round"/><rect x="823.2" y="162.2" width="8" height="8" fill="#f00"/><rect x="804.1" y="259.2" width="8" height="8" fill="#f00"/><rect x="788.2" y="307.0" width="8" height="8" fill="#f00"/><rect x="792.9" y="370.0" width="8" height="8" fill="#f00"/><rect x="796.9" y="447.0" width="8" height="8" fill="#f00"/><circle cx="814" cy="193.5" r="2.5" fill="#fff" stroke="#c020c0" stroke-width="2.3"/><circle cx="797" cy="223" r="2.5" fill="#fff" stroke="#e01010" stroke-width="2.3"/><circle cx="820" cy="251" r="2.5" fill="#fff" stroke="#108010" stroke-width="2.3"/></svg><span class="t" style="left:568.7px;top:472.80px;font-size:13px;font-weight:400;color:#444;letter-spacing:-0.363px;-webkit-text-stroke:0.25px #444;">-3</span><span class="t" style="left:624.7px;top:472.80px;font-size:13px;font-weight:400;color:#444;letter-spacing:-0.363px;-webkit-text-stroke:0.25px #444;">-2</span><span class="t" style="left:680.7px;top:472.80px;font-size:13px;font-weight:400;color:#444;letter-spacing:-0.363px;-webkit-text-stroke:0.25px #444;">-1</span><span class="t" style="left:737.9px;top:472.80px;font-size:13px;font-weight:400;color:#444;letter-spacing:0;-webkit-text-stroke:0.25px #444;">0</span><span class="t" style="left:793.9px;top:472.80px;font-size:13px;font-weight:400;color:#444;letter-spacing:0;-webkit-text-stroke:0.25px #444;">1</span><span class="t" style="left:849.9px;top:472.80px;font-size:13px;font-weight:400;color:#444;letter-spacing:0;-webkit-text-stroke:0.25px #444;">2</span><span class="t" style="left:905.9px;top:472.80px;font-size:13px;font-weight:400;color:#444;letter-spacing:0;-webkit-text-stroke:0.25px #444;">3</span><span class="t" style="left:938.3px;top:164.60px;font-size:13px;font-weight:400;color:#444;letter-spacing:0;-webkit-text-stroke:0.25px #444;">5</span><span class="t" style="left:938.3px;top:220.60px;font-size:13px;font-weight:400;color:#444;letter-spacing:0;-webkit-text-stroke:0.25px #444;">4</span><span class="t" style="left:938.3px;top:276.60px;font-size:13px;font-weight:400;color:#444;letter-spacing:0;-webkit-text-stroke:0.25px #444;">3</span><span class="t" style="left:938.3px;top:332.60px;font-size:13px;font-weight:400;color:#444;letter-spacing:0;-webkit-text-stroke:0.25px #444;">2</span><span class="t" style="left:938.3px;top:388.60px;font-size:13px;font-weight:400;color:#444;letter-spacing:0;-webkit-text-stroke:0.25px #444;">1</span><span class="t" style="left:938.3px;top:444.60px;font-size:13px;font-weight:400;color:#444;letter-spacing:0;-webkit-text-stroke:0.25px #444;">0</span><span class="t" style="left:822.6px;top:185.50px;font-size:13px;font-weight:700;color:#000;letter-spacing:0;">1</span><span class="t" style="left:806.3px;top:214.30px;font-size:13px;font-weight:700;color:#000;letter-spacing:0;">2</span><span class="t" style="left:829.3px;top:242.50px;font-size:13px;font-weight:700;color:#000;letter-spacing:0;">3</span><div id="menu"><div class="gut"></div><div class="sep" style="top:50px"></div><div class="sep" style="top:146px"></div><div class="hl"></div></div><span class="t" style="left:109px;top:54.84px;font-size:12px;font-weight:400;color:#000;letter-spacing:-0.014px;">Number of Blocks</span><span class="t" style="left:109px;top:76.84px;font-size:12px;font-weight:400;color:#000;letter-spacing:-0.121px;">Profile Smoothness</span><span class="t" style="left:109px;top:106.84px;font-size:12px;font-weight:400;color:#000;letter-spacing:-0.430px;">Set Wood Size</span><span class="t" style="left:109px;top:128.84px;font-size:12px;font-weight:400;color:#000;letter-spacing:0.115px;">Fit to Wood Width</span><span class="t" style="left:109px;top:150.84px;font-size:12px;font-weight:400;color:#000;letter-spacing:0.048px;">Fit to Wood Length</span><span class="t" style="left:109px;top:172.84px;font-size:12px;font-weight:400;color:#000;letter-spacing:-0.225px;">Allow Flat Sides</span><span class="t" style="left:109px;top:202.84px;font-size:12px;font-weight:400;color:#000;letter-spacing:-0.337px;">Set Colors</span><span class="t" style="left:109px;top:224.84px;font-size:12px;font-weight:400;color:#000;letter-spacing:-0.144px;">Show All Design Dots</span><span class="t" style="left:109px;top:246.84px;font-size:12px;font-weight:400;color:#000;letter-spacing:-0.050px;">Hide Dimensions</span><span class="t" style="left:109px;top:268.84px;font-size:12px;font-weight:400;color:#000;letter-spacing:-0.144px;">Use Metric Dimensions</span><svg class="abs" style="left:231px;top:116px" width="16" height="23"><path d="M1.5 1.5 V18 L5.3 14.3 L8.2 20.6 L10.8 19.5 L8 13.3 H13 Z" fill="#fff" stroke="#111" stroke-width="1.1" stroke-linejoin="miter"/></svg></body></html>
